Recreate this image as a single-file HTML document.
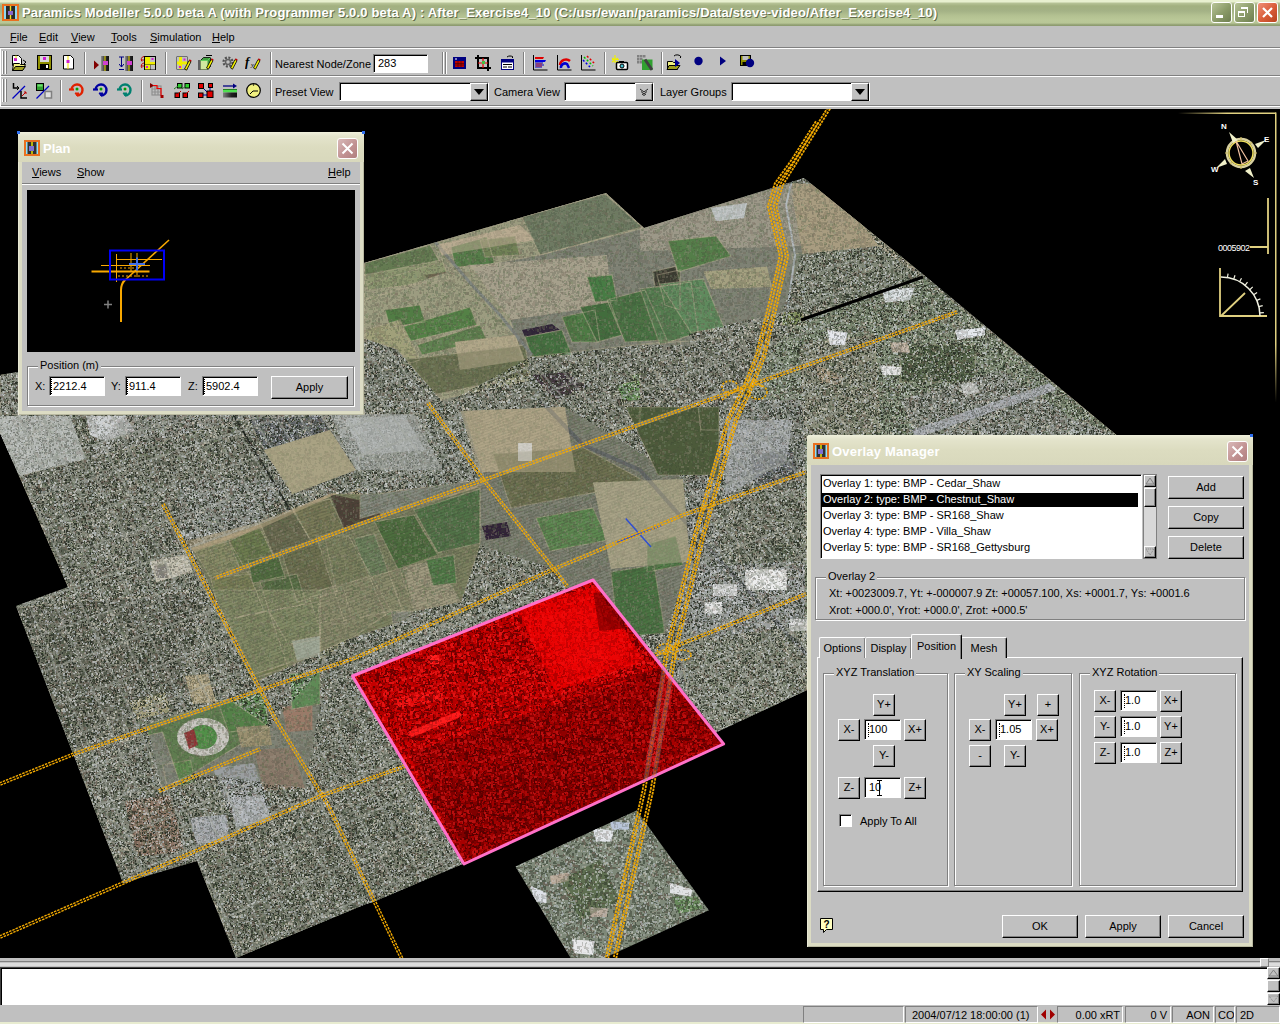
<!DOCTYPE html><html><head><meta charset='utf-8'><style>
*{box-sizing:border-box}
body{margin:0;width:1280px;height:1024px;overflow:hidden;background:#c0c0c0;position:relative;font-family:'Liberation Sans',sans-serif;font-size:11px;color:#000}
.a{position:absolute}
.t{position:absolute;white-space:nowrap;font-size:11px;line-height:13px}
.mtxt{position:absolute;white-space:nowrap;font-size:11px;line-height:14px}
.xpb{position:absolute;top:2px;width:21px;height:21px;border:1px solid #fff;border-radius:3px;background:linear-gradient(135deg,#b8c498,#8a9a68 55%,#6e7e50)}
.sep{position:absolute;width:2px;border-left:1px solid #808080;border-right:1px solid #fff}
.grip{position:absolute;width:5px;border-left:1px solid #fff;border-right:1px solid #808080;box-shadow:inset -1px 0 0 #c0c0c0, inset -2px 0 0 #808080}
.btn{position:absolute;background:#c0c0c0;border-top:1px solid #fff;border-left:1px solid #fff;border-right:1px solid #000;border-bottom:1px solid #000;box-shadow:inset -1px -1px 0 #808080;text-align:center;font-size:11px;white-space:nowrap}
.inp{position:absolute;background:#fff;border-top:1px solid #808080;border-left:1px solid #808080;border-right:1px solid #fff;border-bottom:1px solid #fff;box-shadow:inset 1px 1px 0 #000;font-size:11px;white-space:nowrap;overflow:hidden}
.grp{position:absolute;border:1px solid #808080;box-shadow:1px 1px 0 #fff, inset 1px 1px 0 #fff}
.glab{position:absolute;background:#c0c0c0;padding:0 2px;white-space:nowrap;font-size:11px;line-height:13px}
.sunk{position:absolute;border-top:1px solid #808080;border-left:1px solid #808080;border-right:1px solid #fff;border-bottom:1px solid #fff}
</style></head><body><div class="a" style="left:0;top:0;width:1280px;height:26px;background:linear-gradient(#e8f0d0 0px,#e8f0d0 2px,#b8c498 3px,#a2b080 6px,#a4b286 11px,#b4c292 16px,#bac898 20px,#b8c696 23px,#8e9c70 25px,#8e9c70 26px);"></div>
<svg class="a" style="left:2px;top:4px" width="17" height="17" viewBox="0 0 17 17"><rect x="0" y="0" width="17" height="17" fill="#e87020"/><rect x="2" y="2" width="13" height="13" fill="#90d8f0"/><rect x="4" y="2" width="9" height="13" fill="#282828"/><rect x="7.8" y="2" width="1.4" height="13" fill="#f0e020"/><rect x="6" y="7" width="5" height="4" fill="#8868c8"/></svg>
<div class="a" style="left:22px;top:5px;font:bold 13px 'Liberation Sans',sans-serif;letter-spacing:0.16px;color:#fff;text-shadow:1px 1px 0 #606a48;white-space:nowrap;line-height:16px">Paramics Modeller 5.0.0 beta A (with Programmer 5.0.0 beta A) : After_Exercise4_10 (C:/usr/ewan/paramics/Data/steve-video/After_Exercise4_10)</div>
<div class="xpb" style="left:1211px;"><div class="a" style="left:4px;top:12px;width:7px;height:3px;background:#fff"></div></div>
<div class="xpb" style="left:1234px;"><div class="a" style="left:3px;top:8px;width:7px;height:6px;border:1px solid #fff;border-top-width:2px"></div><div class="a" style="left:6px;top:4px;width:7px;height:6px;border-top:2px solid #fff;border-right:1px solid #fff"></div></div>
<div class="xpb" style="left:1257px;background:linear-gradient(135deg,#f09078,#d85c38 55%,#b84420)"><svg class="a" style="left:3px;top:3px" width="13" height="13"><path d="M2 2L11 11M11 2L2 11" stroke="#fff" stroke-width="2.2"/></svg></div>
<div class="mtxt" style="left:10px;top:30px"><u>F</u>ile</div>
<div class="mtxt" style="left:39px;top:30px"><u>E</u>dit</div>
<div class="mtxt" style="left:71px;top:30px"><u>V</u>iew</div>
<div class="mtxt" style="left:111px;top:30px"><u>T</u>ools</div>
<div class="mtxt" style="left:150px;top:30px"><u>S</u>imulation</div>
<div class="mtxt" style="left:212px;top:30px"><u>H</u>elp</div>
<div class="a" style="left:0;top:47px;width:1280px;height:1px;background:#808080"></div>
<div class="a" style="left:0;top:48px;width:1280px;height:1px;background:#fff"></div>
<div class="a" style="left:0;top:75px;width:1280px;height:1px;background:#808080"></div>
<div class="a" style="left:0;top:76px;width:1280px;height:1px;background:#fff"></div>
<div class="a" style="left:0;top:105px;width:1280px;height:1px;background:#808080"></div>
<div class="a" style="left:0;top:106px;width:1280px;height:1px;background:#fff"></div>
<div class="a" style="left:2px;top:51px;width:1px;height:23px;background:#fff"></div>
<div class="a" style="left:3px;top:51px;width:1px;height:23px;background:#808080"></div>
<div class="a" style="left:5px;top:51px;width:1px;height:23px;background:#fff"></div>
<div class="a" style="left:6px;top:51px;width:1px;height:23px;background:#808080"></div>
<div class="a" style="left:2px;top:79px;width:1px;height:23px;background:#fff"></div>
<div class="a" style="left:3px;top:79px;width:1px;height:23px;background:#808080"></div>
<div class="a" style="left:5px;top:79px;width:1px;height:23px;background:#fff"></div>
<div class="a" style="left:6px;top:79px;width:1px;height:23px;background:#808080"></div>
<div class="a" style="left:0;top:49px;width:1px;height:58px;background:#fff"></div>
<svg class="a" style="left:11px;top:55px" width="17" height="17" viewBox="0 0 17 17"><path d="M1.5 0.5h6l3 3v7h-9z" fill="#fff" stroke="#000"/><rect x="3" y="3" width="3" height="3" fill="#d020d0"/><path d="M5 0.5v3" stroke="#f0e000"/><path d="M2.5 8.5h6l1 1h5l-3 6h-10z" fill="#f0f080" stroke="#000"/><path d="M4.5 11.5h10l-3 4h-10z" fill="#a0a020" stroke="#000"/><path d="M12 5l3 2-2 2" stroke="#000" fill="none"/></svg>
<svg class="a" style="left:37px;top:55px" width="15" height="15" viewBox="0 0 15 15"><rect x="0.5" y="0.5" width="14" height="14" fill="#909000" stroke="#000"/><rect x="3" y="1" width="9" height="6" fill="#d8d8d8"/><rect x="6" y="2" width="3" height="3" fill="#d020d0"/><rect x="3" y="9" width="9" height="5" fill="#000"/><rect x="9" y="10" width="2" height="3" fill="#fff"/></svg>
<svg class="a" style="left:63px;top:55px" width="12" height="15" viewBox="0 0 12 15"><path d="M0.5 0.5h7l3 3v10.5h-10z" fill="#fff" stroke="#000"/><path d="M5 1v13" stroke="#f0e000"/><rect x="3.5" y="5" width="3" height="3" fill="#d020d0"/></svg>
<div class="sep" style="left:84px;top:52px;height:22px"></div>
<svg class="a" style="left:94px;top:60px" width="5" height="10" viewBox="0 0 5 10"><path d="M0 0.5L5 5L0 9.5z" fill="#800000"/></svg>
<svg class="a" style="left:101px;top:56px" width="8" height="15" viewBox="0 0 8 15"><defs><linearGradient id="rg" x1="0" x2="1"><stop offset="0" stop-color="#909090"/><stop offset="0.5" stop-color="#303030"/><stop offset="1" stop-color="#101010"/></linearGradient></defs><rect x="0" y="0" width="8" height="15" fill="url(#rg)"/><rect x="3.5" y="0" width="1" height="15" fill="#f0e000"/><rect x="2" y="5" width="5" height="4" fill="#d040d0"/></svg>
<svg class="a" style="left:119px;top:56px" width="5" height="15" viewBox="0 0 5 15"><path d="M0 1h5M2.5 1v10M0 8l2.5 3l2.5-3M0 13.5h5" stroke="#000080" fill="none"/></svg>
<svg class="a" style="left:125px;top:56px" width="8" height="15" viewBox="0 0 8 15"><defs><linearGradient id="rg" x1="0" x2="1"><stop offset="0" stop-color="#909090"/><stop offset="0.5" stop-color="#303030"/><stop offset="1" stop-color="#101010"/></linearGradient></defs><rect x="0" y="0" width="8" height="15" fill="url(#rg)"/><rect x="3.5" y="0" width="1" height="15" fill="#f0e000"/><rect x="2" y="5" width="5" height="4" fill="#d040d0"/></svg>
<svg class="a" style="left:140px;top:55px" width="16" height="16" viewBox="0 0 16 16"><rect x="4.5" y="1.5" width="11" height="13" fill="#202020" stroke="#000"/><rect x="5" y="2" width="5" height="5" fill="#f0f000"/><rect x="10" y="2" width="5" height="5" fill="#c0c0c0"/><rect x="5" y="7" width="10" height="2.5" fill="#f0f000"/><rect x="5" y="10" width="5" height="4.5" fill="#f0f000"/><rect x="10.5" y="10" width="4.5" height="4.5" fill="#c0c0c0"/><rect x="11.5" y="3" width="2" height="2" fill="#d020d0"/><rect x="6" y="11" width="2" height="2" fill="#d020d0"/><path d="M4 1.5a3 3 0 0 0-2 5M4 8a3 3 0 0 0-2 5M1 5h3M1 11h3" stroke="#c00000" fill="none"/></svg>
<div class="sep" style="left:165px;top:52px;height:22px"></div>
<svg class="a" style="left:176px;top:56px" width="16" height="16" viewBox="0 0 16 16"><rect x="0.5" y="0.5" width="11" height="13" fill="#202020"/><rect x="1" y="1" width="10" height="12" fill="#c0c0c0"/><path d="M3 1h3v4.5h5v3h-5v4.5h-3v-4.5h-2v-3h2z" fill="#f0f000"/><rect x="7.5" y="2.5" width="2" height="2" fill="#d020d0"/><rect x="3" y="10" width="2" height="2" fill="#d020d0"/><path d="M13 4.5l2 1.2l-4.5 8.5l-2 -1.2z" fill="#f0f000" stroke="#000" stroke-width="0.8"/><path d="M13 4.5l2 1.2l0.6-1.2l-2-1.2z" fill="#c00000"/></svg>
<svg class="a" style="left:198px;top:55px" width="16" height="16" viewBox="0 0 16 16"><path d="M1 5v10" stroke="#000"/><rect x="8" y="0" width="6" height="1" fill="#000"/><path d="M2.5 5.5l3-3h7v9l-3 3h-7z" fill="#40a040" stroke="#000" stroke-width="0.8"/><rect x="2.5" y="5.5" width="7" height="9" fill="#d0e8a0"/><path d="M2.5 5.5h7l3-3" stroke="#60d060" fill="none"/><path d="M13 4.5l2 1.2l-4.5 8.5l-2 -1.2z" fill="#f0f000" stroke="#000" stroke-width="0.8"/><path d="M13 4.5l2 1.2l0.6-1.2l-2-1.2z" fill="#c00000"/></svg>
<svg class="a" style="left:222px;top:55px" width="16" height="16" viewBox="0 0 16 16"><circle cx="6" cy="7" r="4.5" fill="none" stroke="#505050" stroke-width="2.2" stroke-dasharray="2 1.5"/><circle cx="6" cy="7" r="2.5" fill="none" stroke="#606060" stroke-width="1.5"/><path d="M13 4.5l2 1.2l-4.5 8.5l-2 -1.2z" fill="#f0f000" stroke="#000" stroke-width="0.8"/><path d="M13 4.5l2 1.2l0.6-1.2l-2-1.2z" fill="#c00000"/></svg>
<svg class="a" style="left:245px;top:55px" width="16" height="16" viewBox="0 0 16 16"><text x="0" y="11" font-family="Liberation Serif" font-style="italic" font-weight="bold" font-size="13">f</text><text x="6" y="12" font-family="Liberation Serif" font-style="italic" font-size="7">y</text><path d="M13 4.5l2 1.2l-4.5 8.5l-2 -1.2z" fill="#f0f000" stroke="#000" stroke-width="0.8"/><path d="M13 4.5l2 1.2l0.6-1.2l-2-1.2z" fill="#c00000"/></svg>
<div class="sep" style="left:270px;top:52px;height:22px"></div>
<div class="t" style="left:275px;top:58px;font-size:11px">Nearest Node/Zone</div>
<div class="inp" style="left:373px;top:54px;width:55px;height:19px;padding:2px 0 0 4px">283</div>
<div class="sep" style="left:442px;top:52px;height:22px"></div>
<div class="sep" style="left:445px;top:52px;height:22px"></div>
<svg class="a" style="left:453px;top:57px" width="13" height="12" viewBox="0 0 13 12"><rect x="0.5" y="0.5" width="12" height="11" fill="#000080" stroke="#000080"/><rect x="2" y="4" width="9" height="6" fill="#c00000"/><path d="M2 6.5h9M2 8h9M5 4v6M8 4v6" stroke="#400000" stroke-width="0.6"/><rect x="2" y="1.5" width="2" height="1" fill="#fff"/></svg>
<svg class="a" style="left:475px;top:55px" width="16" height="16" viewBox="0 0 16 16"><path d="M3 0v13h13M0 3h13v13" stroke="#000" stroke-width="2" fill="none"/><path d="M8 3v10M3 8h10" stroke="#e00000" stroke-width="1.2"/><rect x="7" y="6" width="3" height="3" fill="#40c040"/></svg>
<svg class="a" style="left:501px;top:54px" width="13" height="16" viewBox="0 0 13 16"><path d="M6 3a4 3 0 0 1 6 0l-1 1" stroke="#000" fill="none"/><rect x="0.5" y="5.5" width="12" height="10" fill="#fff" stroke="#000080"/><rect x="0.5" y="5.5" width="12" height="3" fill="#000080"/><path d="M2 10.5h9M2 13h4M7 13h4" stroke="#000" stroke-width="1"/></svg>
<div class="sep" style="left:523px;top:52px;height:22px"></div>
<svg class="a" style="left:533px;top:55px" width="15" height="16" viewBox="0 0 15 16"><path d="M0.5 0v15h14" stroke="#000" fill="none"/><path d="M2 2h9l-1 2h-8z" fill="#e00000"/><path d="M2 5h11l-1 2h-10z" fill="#0000e0"/><path d="M2 8h8M2 10h9M2 12h7" stroke="#0000c0"/><path d="M3 9h6M3 11h6" stroke="#d00000" stroke-width="0.7"/></svg>
<svg class="a" style="left:557px;top:55px" width="15" height="16" viewBox="0 0 15 16"><path d="M0.5 0v15h14" stroke="#000" fill="none"/><path d="M3 10a6 6 0 0 1 10-4" stroke="#e00000" stroke-width="2.5" fill="none"/><path d="M4 13a4 4 0 0 1 6-4l2 4" stroke="#0000d0" stroke-width="2.5" fill="none"/></svg>
<svg class="a" style="left:581px;top:55px" width="15" height="16" viewBox="0 0 15 16"><path d="M0.5 0v15h14" stroke="#000" fill="none"/><path d="M3 2l9 9" stroke="#00c000" stroke-width="1.5" stroke-dasharray="2 2"/><path d="M2 5l8 8" stroke="#0000e0" stroke-width="1.5" stroke-dasharray="2 2"/><path d="M6 1l8 8" stroke="#e00000" stroke-width="1.5" stroke-dasharray="2 2"/></svg>
<div class="sep" style="left:604px;top:52px;height:22px"></div>
<svg class="a" style="left:612px;top:55px" width="17" height="16" viewBox="0 0 17 16"><path d="M3 0v8M0 3l6 4M0 7l6-4M-1 4.5h8" stroke="#f0f000" stroke-width="1.2"/><rect x="4.5" y="7.5" width="11" height="7" rx="1" fill="#fff" stroke="#000" stroke-width="1.5"/><rect x="7" y="6" width="5" height="2" fill="#000"/><circle cx="10" cy="11" r="2" fill="#40c0d0" stroke="#000"/></svg>
<svg class="a" style="left:636px;top:55px" width="17" height="16" viewBox="0 0 17 16"><g fill="#808080"><rect x="1" y="0" width="2.5" height="2.5"/><rect x="4" y="0" width="2.5" height="2.5"/><rect x="7" y="0" width="2.5" height="2.5"/><rect x="1" y="3" width="2.5" height="2.5"/><rect x="4" y="3" width="2.5" height="2.5"/><rect x="1" y="6" width="2.5" height="2.5"/><rect x="4" y="6" width="2.5" height="2.5"/></g><rect x="6" y="4.5" width="10.5" height="10.5" fill="#30a030"/><path d="M9 4.5l7 10.5" stroke="#404040" stroke-width="3"/></svg>
<div class="sep" style="left:661px;top:52px;height:22px"></div>
<svg class="a" style="left:666px;top:53px" width="17" height="18" viewBox="0 0 17 18"><path d="M8 3a4 3 0 0 1 7 1l-1 1" stroke="#000" fill="none"/><path d="M1.5 8.5h5l1 1h4v7h-10z" fill="#f0f080" stroke="#000"/><path d="M3 12.5h11l-3 4h-10z" fill="#a0a020" stroke="#000"/><path d="M9 6l5 4l-5 4z" fill="#000090"/></svg>
<svg class="a" style="left:694px;top:56px" width="10" height="10" viewBox="0 0 10 10"><circle cx="4.5" cy="5" r="4.2" fill="#000080"/></svg>
<svg class="a" style="left:720px;top:56px" width="7" height="10" viewBox="0 0 7 10"><path d="M0 0.5L6 5L0 9.5z" fill="#000080"/></svg>
<svg class="a" style="left:740px;top:55px" width="15" height="13" viewBox="0 0 15 13"><rect x="0.5" y="0.5" width="10" height="10" fill="#909000" stroke="#000"/><rect x="2.5" y="1" width="6" height="4" fill="#c0c0c0"/><rect x="2.5" y="7" width="6" height="3" fill="#000"/><circle cx="10" cy="8" r="4.2" fill="#000080"/></svg>
<svg class="a" style="left:12px;top:83px" width="16" height="16" viewBox="0 0 16 16"><path d="M1.5 0v5h5" stroke="#000" stroke-width="1.5" fill="none"/><path d="M5 3l2 2-2 2" stroke="#000" fill="none"/><path d="M0.5 15.5L13 3" stroke="#0000c0" stroke-width="1.2"/><path d="M9 8v7h6" stroke="#000" stroke-width="1.5" fill="none"/><path d="M10 13l4-4M12 9h2v2" stroke="#c00000" fill="none"/></svg>
<svg class="a" style="left:36px;top:83px" width="17" height="16" viewBox="0 0 17 16"><rect x="0.5" y="0.5" width="7" height="7" fill="#30a030" stroke="#000"/><rect x="1.5" y="1.5" width="5" height="2" fill="#70e070"/><path d="M0.5 15.5L13 3" stroke="#0000c0" stroke-width="1.2"/><rect x="9" y="8.5" width="6.5" height="6.5" fill="#e0e0e0" stroke="#808080" stroke-width="1.5"/></svg>
<div class="sep" style="left:60px;top:80px;height:22px"></div>
<svg class="a" style="left:69px;top:83px" width="16" height="16" viewBox="0 0 16 16"><path d="M2.5 6.5A5.5 5.5 0 1 1 8 12.5" stroke="#e02000" stroke-width="2.4" fill="none"/><path d="M0 6.5h5" stroke="#e02000" stroke-width="2.2"/><path d="M6 10l2 3 2-3z" fill="#e02000" stroke="#e02000"/><circle cx="8" cy="6" r="1.5" fill="#00a000"/></svg>
<svg class="a" style="left:93px;top:83px" width="16" height="16" viewBox="0 0 16 16"><path d="M2.5 6.5A5.5 5.5 0 1 1 8 12.5" stroke="#0000a0" stroke-width="2.4" fill="none"/><path d="M0 6.5h5" stroke="#0000a0" stroke-width="2.2"/><path d="M6 10l2 3 2-3z" fill="#0000a0" stroke="#0000a0"/><circle cx="8" cy="6" r="1.5" fill="#00a000"/></svg>
<svg class="a" style="left:117px;top:83px" width="16" height="16" viewBox="0 0 16 16"><path d="M2.5 6.5A5.5 5.5 0 1 1 8 12.5" stroke="#008070" stroke-width="2.4" fill="none"/><path d="M0 6.5h5" stroke="#008070" stroke-width="2.2"/><path d="M6 10l2 3 2-3z" fill="#008070" stroke="#008070"/><circle cx="8" cy="6" r="1.5" fill="#00a000"/></svg>
<div class="sep" style="left:141px;top:80px;height:22px"></div>
<svg class="a" style="left:150px;top:83px" width="14" height="15" viewBox="0 0 14 15"><g stroke="#909090" stroke-width="1.2" fill="none"><rect x="2" y="3" width="9" height="9"/><path d="M5 3v9M8 3v9M2 6h9M2 9h9"/></g><path d="M0 0l4 2.5L0 5z" fill="#800000"/><path d="M3 2.5h4v3h4v7" stroke="#f00000" stroke-width="1.2" fill="none"/><rect x="10.5" y="12" width="3" height="3" fill="#a00000"/></svg>
<svg class="a" style="left:174px;top:83px" width="16" height="15" viewBox="0 0 16 15"><rect x="3.5" y="0.5" width="4.5" height="4.5" fill="#30d030" stroke="#000"/><rect x="11" y="0.5" width="4.5" height="4.5" fill="#30d030" stroke="#000"/><path d="M0 6l4-3M8 6l4-3" stroke="#208020"/><rect x="1" y="10" width="4.5" height="4.5" fill="#e00000" stroke="#000"/><rect x="9" y="10" width="4.5" height="4.5" fill="#e00000" stroke="#000"/><path d="M4 11l3-3M12 11l3-3" stroke="#c00000"/></svg>
<svg class="a" style="left:198px;top:83px" width="16" height="15" viewBox="0 0 16 15"><path d="M3 3l8 8M12 3v8M3 12h8" stroke="#0000a0"/><rect x="0.5" y="0.5" width="5" height="5" fill="#e00000" stroke="#000"/><rect x="10.5" y="0.5" width="4" height="4" fill="#e00000" stroke="#000"/><rect x="0.5" y="10" width="4.5" height="4.5" fill="#e00000" stroke="#000"/><rect x="9" y="8" width="6" height="6.5" fill="#e00000" stroke="#000"/></svg>
<svg class="a" style="left:223px;top:83px" width="15" height="15" viewBox="0 0 15 15"><path d="M0 3h12" stroke="#000080" stroke-width="1.3"/><path d="M10 0.5l4 2.5-4 2.5z" fill="#000080"/><rect x="0" y="7" width="14" height="2.5" fill="#50e050"/><defs><linearGradient id="dg" x1="0" x2="1"><stop offset="0" stop-color="#808080"/><stop offset="0.6" stop-color="#202020"/><stop offset="1" stop-color="#101010"/></linearGradient></defs><rect x="0" y="9.5" width="14" height="5" fill="url(#dg)"/><rect x="0" y="6" width="14" height="1" fill="#208020"/></svg>
<svg class="a" style="left:246px;top:83px" width="15" height="15" viewBox="0 0 15 15"><circle cx="7.5" cy="7.5" r="6.8" fill="#f0f080" stroke="#000" stroke-width="1.2"/><path d="M4 11l3-3h5" stroke="#000" fill="none"/><circle cx="7.5" cy="2" r="0.7" fill="#000"/></svg>
<div class="sep" style="left:270px;top:80px;height:22px"></div>
<div class="t" style="left:275px;top:86px">Preset View</div>
<div class="inp" style="left:339px;top:82px;width:150px;height:19px"></div>
<div class="btn" style="left:470px;top:83px;width:18px;height:18px"></div>
<svg class="a" style="left:474px;top:89px" width="10" height="6"><path d="M0 0h10L5 6z" fill="#000"/></svg>
<div class="t" style="left:494px;top:86px">Camera View</div>
<div class="inp" style="left:564px;top:82px;width:90px;height:19px"></div>
<div class="btn" style="left:635px;top:83px;width:18px;height:18px"></div>
<svg class="a" style="left:639px;top:88px" width="10" height="8"><path d="M1 1l4 3 4-3M2 3.5l3 2.5 3-2.5M3 6l2 1.5 2-1.5" stroke="#000" fill="none" stroke-width="0.8"/></svg>
<div class="t" style="left:660px;top:86px">Layer Groups</div>
<div class="inp" style="left:731px;top:82px;width:139px;height:19px"></div>
<div class="btn" style="left:851px;top:83px;width:18px;height:18px"></div>
<svg class="a" style="left:855px;top:89px" width="10" height="6"><path d="M0 0h10L5 6z" fill="#000"/></svg>
<svg class="a" style="left:0;top:109px" width="1280" height="849" viewBox="0 109 1280 849"><defs><clipPath id="cmain"><polygon points="0,375 18,372 364,263 606,193 644,228 804,178 924,275 1114,433 1205,506 807,690 717,732 465,863 373,902 366,904 236,958 197,861 123,883 16,606 68,587 0,433"/></clipPath><clipPath id="csmall"><polygon points="636.6,810.6 708.8,910.3 578,970 515.5,866.5"/></clipPath><clipPath id="cred"><polygon points="593,580 723.6,744 464,864 352.5,676"/></clipPath><filter id="noise" x="0" y="0" width="100%" height="100%"><feTurbulence type="fractalNoise" baseFrequency="0.45" numOctaves="2" seed="3"/><feColorMatrix type="matrix" values="0 0 0 0 0  0 0 0 0 0  0 0 0 0 0  0.9 0.9 0.9 0 -1.1"/></filter><filter id="noise2" x="0" y="0" width="100%" height="100%"><feTurbulence type="fractalNoise" baseFrequency="0.5" numOctaves="2" seed="8"/><feColorMatrix type="matrix" values="0 0 0 0 1  0 0 0 0 1  0 0 0 0 1  1 1 1 0 -1.9"/></filter><filter id="rnoise" x="0" y="0" width="100%" height="100%"><feTurbulence type="fractalNoise" baseFrequency="0.35" numOctaves="2" seed="5"/><feColorMatrix type="matrix" values="0 0 0 0 0  0 0 0 0 0  0 0 0 0 0  1.2 1.2 1.2 0 -1.2"/></filter></defs><rect x="0" y="108" width="1280" height="850" fill="#000"/><g clip-path="url(#cmain)"><rect x="0" y="108" width="1280" height="850" fill="#7e8174"/><defs><pattern id="spk1" width="97" height="89" patternUnits="userSpaceOnUse"><path fill="#2a3226" d="M43 13h1v3h-1zM58 68h1v3h-1zM8 5h2v2h-2zM92 14h2v2h-2zM37 55h2v3h-2zM57 15h2v2h-2zM43 2h2v2h-2zM9 80h1v2h-1zM60 52h2v1h-2zM51 7h2v3h-2zM13 17h2v1h-2zM6 11h3v2h-3zM94 56h3v1h-3zM22 74h2v1h-2zM24 32h1v3h-1zM49 88h2v2h-2zM74 2h3v3h-3zM54 17h3v2h-3zM53 32h1v3h-1zM77 14h2v2h-2zM91 25h1v2h-1zM96 59h3v2h-3zM89 35h1v2h-1zM27 61h2v2h-2zM38 1h2v2h-2zM23 6h2v3h-2zM72 38h1v2h-1zM22 70h1v2h-1zM52 57h3v2h-3zM29 36h2v3h-2zM39 76h2v3h-2zM64 69h3v3h-3zM23 74h3v3h-3zM65 0h3v3h-3zM16 36h3v3h-3zM48 49h2v3h-2zM21 88h2v1h-2zM87 23h2v2h-2zM45 73h2v2h-2zM56 4h2v2h-2zM96 28h3v2h-3zM52 14h2v1h-2zM35 24h1v3h-1zM42 31h2v2h-2zM18 16h2v2h-2zM67 37h3v3h-3zM60 8h1v1h-1zM71 79h1v2h-1zM0 23h2v3h-2zM65 14h2v3h-2zM36 86h3v2h-3zM80 40h2v3h-2zM13 43h1v2h-1zM43 86h1v2h-1zM92 84h2v2h-2zM23 88h2v3h-2zM25 77h2v2h-2zM90 60h3v1h-3zM36 30h2v1h-2zM30 53h3v1h-3zM6 83h2v2h-2zM66 34h1v3h-1zM9 57h2v3h-2zM72 5h1v1h-1zM87 51h2v3h-2zM58 30h2v2h-2zM33 46h3v2h-3zM70 35h1v2h-1zM18 25h3v1h-3zM44 71h2v2h-2zM68 34h2v2h-2zM78 75h2v2h-2zM85 67h2v2h-2zM12 52h2v3h-2zM63 23h2v1h-2zM81 51h3v2h-3zM90 46h1v1h-1zM84 69h2v2h-2zM28 38h2v3h-2zM7 79h3v3h-3zM0 68h3v1h-3zM89 86h3v2h-3zM96 17h1v2h-1zM77 78h3v2h-3zM79 37h2v1h-2zM49 40h2v1h-2zM55 57h3v1h-3zM80 63h2v3h-2zM48 35h3v2h-3zM50 59h2v2h-2zM61 13h2v3h-2zM12 56h3v2h-3zM75 10h2v2h-2zM57 79h1v2h-1zM92 56h2v3h-2zM43 87h1v1h-1zM35 11h2v2h-2zM9 16h2v3h-2zM87 56h2v1h-2zM87 22h3v1h-3zM51 10h2v2h-2zM55 30h1v2h-1zM85 84h2v1h-2zM44 81h1v2h-1zM67 30h3v3h-3zM57 59h2v3h-2zM13 17h1v1h-1zM56 16h1v2h-1zM52 70h3v1h-3zM23 3h2v2h-2zM39 22h3v1h-3zM16 43h2v2h-2zM83 21h3v2h-3zM84 80h3v2h-3zM3 26h2v2h-2zM24 16h1v3h-1zM76 33h2v1h-2zM49 83h3v3h-3zM20 33h1v2h-1zM59 38h3v1h-3zM38 21h2v2h-2zM80 22h2v1h-2zM14 53h3v3h-3zM13 65h1v2h-1zM73 85h3v2h-3zM62 14h3v3h-3zM82 48h3v2h-3zM57 14h1v2h-1zM84 75h2v3h-2zM22 88h2v2h-2zM69 4h2v3h-2zM53 87h2v1h-2zM37 27h3v1h-3zM83 24h2v1h-2zM42 4h1v1h-1zM71 18h1v1h-1zM5 28h3v2h-3zM58 5h1v2h-1zM17 56h2v2h-2zM48 49h2v1h-2zM22 81h3v3h-3zM25 84h2v2h-2zM36 11h3v2h-3zM66 58h2v1h-2zM43 53h3v1h-3zM6 3h3v1h-3zM8 23h2v2h-2zM79 62h2v2h-2zM19 6h1v2h-1zM1 29h1v2h-1zM81 38h2v2h-2zM52 82h2v1h-2zM16 22h1v2h-1zM82 49h3v2h-3zM40 2h2v2h-2zM88 73h1v2h-1zM15 29h1v3h-1zM7 36h2v2h-2zM84 34h2v1h-2zM18 83h2v2h-2zM24 13h2v2h-2zM29 29h1v2h-1zM28 85h2v2h-2zM41 88h2v1h-2zM93 57h2v2h-2zM16 25h1v2h-1zM4 85h2v2h-2zM15 26h3v3h-3zM14 47h1v2h-1zM4 58h3v1h-3z"/><path fill="#343c2e" d="M81 14h1v2h-1zM54 4h1v1h-1zM54 43h2v2h-2zM34 8h2v2h-2zM83 63h3v3h-3zM74 54h3v2h-3zM2 14h2v2h-2zM93 43h1v2h-1zM69 1h1v2h-1zM89 71h3v2h-3zM10 53h2v2h-2zM33 16h2v1h-2zM0 42h2v2h-2zM47 74h2v3h-2zM20 22h3v1h-3zM70 0h2v2h-2zM25 18h1v1h-1zM92 64h3v3h-3zM69 10h2v2h-2zM95 69h2v3h-2zM95 69h1v2h-1zM83 8h1v1h-1zM25 2h2v2h-2zM31 11h2v3h-2zM63 41h2v3h-2zM24 40h1v2h-1zM24 37h2v2h-2zM80 87h1v2h-1zM27 33h1v2h-1zM70 1h3v1h-3zM91 62h1v1h-1zM37 41h3v2h-3zM43 14h3v1h-3zM38 63h1v1h-1zM30 75h2v1h-2zM64 27h2v3h-2zM41 72h1v1h-1zM28 50h1v1h-1zM10 50h2v2h-2zM82 18h2v1h-2zM46 2h2v2h-2zM27 43h3v2h-3zM79 16h3v2h-3zM91 83h2v2h-2zM30 84h1v2h-1zM95 86h2v1h-2zM77 86h3v1h-3zM46 50h2v2h-2zM28 15h2v2h-2zM9 57h3v2h-3zM66 36h1v2h-1zM69 37h2v3h-2zM16 47h1v2h-1zM59 15h2v3h-2zM68 1h1v3h-1zM87 31h1v1h-1zM2 56h2v3h-2zM11 83h2v1h-2zM51 85h1v2h-1zM37 47h2v2h-2zM70 64h2v2h-2zM29 31h3v2h-3zM84 53h1v2h-1zM56 29h2v1h-2zM67 40h3v3h-3zM38 48h2v3h-2zM86 77h1v1h-1zM75 85h2v3h-2zM42 38h1v2h-1zM62 82h3v3h-3zM12 67h2v2h-2zM5 9h2v1h-2zM91 50h1v2h-1zM81 34h3v3h-3zM45 70h3v3h-3zM34 13h2v1h-2zM34 63h2v1h-2zM88 8h3v3h-3zM17 73h3v3h-3zM62 53h3v3h-3zM4 35h2v2h-2zM11 56h1v2h-1zM94 75h2v3h-2zM31 86h3v3h-3zM25 88h2v2h-2zM75 8h1v2h-1zM65 0h1v1h-1zM5 60h2v3h-2zM75 63h2v2h-2zM84 48h2v1h-2zM18 35h1v1h-1zM34 29h1v2h-1zM74 13h2v1h-2zM59 33h1v1h-1zM87 54h2v2h-2zM23 35h2v3h-2zM35 49h2v3h-2zM74 29h2v1h-2zM0 73h3v1h-3zM33 13h1v2h-1zM89 87h1v2h-1zM67 72h1v2h-1zM16 82h2v1h-2zM48 44h3v2h-3zM83 83h2v2h-2zM38 52h1v2h-1zM25 43h3v3h-3zM16 13h3v2h-3zM24 21h3v1h-3zM70 32h3v2h-3zM63 26h3v2h-3zM53 83h2v1h-2zM21 9h3v2h-3zM13 5h2v3h-2zM25 24h1v3h-1zM43 37h3v2h-3zM94 70h2v2h-2zM96 20h2v2h-2zM78 86h2v3h-2zM92 24h2v3h-2zM35 71h2v2h-2zM68 51h1v2h-1zM21 68h1v1h-1zM65 18h2v2h-2zM78 32h2v1h-2zM72 46h2v3h-2zM65 17h3v2h-3zM65 82h2v2h-2zM20 82h3v1h-3zM65 5h2v1h-2zM93 84h2v1h-2zM57 77h3v3h-3zM87 43h3v1h-3zM53 47h1v3h-1zM10 36h3v2h-3zM50 26h3v3h-3zM4 46h2v1h-2zM45 66h1v2h-1zM87 24h3v2h-3zM94 30h2v2h-2zM23 65h2v3h-2zM34 30h3v3h-3zM18 19h3v1h-3zM12 88h2v1h-2zM56 46h3v3h-3zM39 46h3v2h-3zM31 20h3v3h-3zM95 68h2v3h-2zM50 9h3v2h-3zM91 31h3v3h-3zM76 19h2v1h-2zM56 71h2v3h-2zM46 28h1v1h-1zM12 12h2v3h-2zM4 58h2v2h-2zM72 19h2v2h-2zM83 73h2v2h-2zM76 83h1v2h-1zM5 29h2v2h-2zM96 10h1v1h-1zM2 42h2v2h-2zM84 67h1v2h-1zM76 68h1v2h-1zM64 58h1v1h-1zM3 71h2v2h-2zM48 66h2v3h-2zM60 17h2v2h-2zM5 71h3v1h-3zM82 57h1v1h-1zM84 19h2v2h-2zM52 56h1v1h-1zM70 35h2v1h-2zM18 7h2v1h-2zM6 13h3v2h-3zM23 78h2v2h-2zM92 72h1v2h-1zM4 82h2v3h-2zM57 38h2v2h-2zM39 81h2v2h-2zM56 85h1v2h-1z"/><path fill="#3c4436" d="M81 46h2v2h-2zM80 38h2v2h-2zM4 42h1v2h-1zM16 85h2v3h-2zM95 70h2v2h-2zM5 39h2v1h-2zM26 87h2v1h-2zM94 42h3v2h-3zM60 28h2v3h-2zM68 42h1v1h-1zM15 38h2v3h-2zM36 30h2v2h-2zM89 38h1v1h-1zM70 42h2v3h-2zM36 60h3v3h-3zM14 69h2v2h-2zM59 88h2v3h-2zM5 22h3v3h-3zM60 44h3v2h-3zM70 4h3v1h-3zM3 80h2v2h-2zM41 7h2v2h-2zM32 85h1v3h-1zM68 17h3v3h-3zM83 12h3v3h-3zM70 26h2v2h-2zM84 3h2v1h-2zM53 12h2v3h-2zM45 85h3v1h-3zM23 34h2v2h-2zM20 79h1v1h-1zM38 27h2v2h-2zM31 56h3v2h-3zM42 12h3v2h-3zM74 84h2v2h-2zM36 57h2v2h-2zM55 11h2v3h-2zM47 30h3v1h-3zM60 5h3v2h-3zM95 2h2v1h-2zM17 8h3v1h-3zM25 5h2v1h-2zM39 65h3v3h-3zM4 82h2v2h-2zM43 23h3v3h-3zM55 77h2v2h-2zM13 10h2v2h-2zM72 4h2v3h-2zM70 16h1v1h-1zM64 7h1v2h-1zM21 20h2v2h-2zM20 63h3v3h-3zM6 36h3v3h-3zM74 39h1v3h-1zM44 18h2v1h-2zM38 72h1v2h-1zM61 41h2v1h-2zM49 30h3v2h-3zM76 86h2v2h-2zM18 84h2v3h-2zM83 45h2v2h-2zM92 60h2v2h-2zM18 2h2v3h-2zM72 31h3v2h-3zM19 1h2v3h-2zM79 67h2v2h-2zM5 29h2v3h-2zM12 55h2v1h-2zM48 21h2v2h-2zM17 38h1v3h-1zM79 48h2v3h-2zM55 83h2v2h-2zM77 88h2v3h-2zM88 81h3v2h-3zM55 13h1v1h-1zM28 65h2v3h-2zM14 18h2v2h-2zM31 66h2v2h-2zM90 8h1v2h-1zM41 25h3v1h-3zM50 75h1v2h-1zM30 39h1v2h-1zM10 72h1v2h-1zM68 21h2v2h-2zM11 13h1v2h-1zM76 9h1v2h-1zM55 14h3v1h-3zM44 66h2v2h-2zM16 34h1v1h-1zM72 21h2v2h-2zM22 4h3v2h-3zM58 1h2v2h-2zM72 38h2v3h-2zM68 45h2v3h-2zM41 18h1v2h-1zM50 65h1v2h-1zM28 16h2v3h-2zM91 45h3v3h-3zM72 64h2v3h-2zM84 50h1v2h-1zM18 42h1v2h-1zM9 4h2v1h-2zM48 20h1v1h-1zM89 70h2v2h-2zM70 62h2v1h-2zM47 23h3v1h-3zM12 36h2v3h-2zM60 34h2v1h-2zM7 65h2v1h-2zM6 46h2v2h-2zM57 22h3v2h-3zM28 82h2v2h-2zM65 84h2v2h-2zM87 13h3v1h-3zM35 81h2v2h-2zM42 83h1v2h-1zM28 39h3v2h-3zM40 23h1v3h-1zM93 31h2v2h-2zM17 84h2v2h-2zM56 79h2v1h-2zM18 6h1v2h-1zM90 19h1v2h-1zM27 84h2v2h-2zM41 48h1v3h-1zM65 57h3v1h-3zM22 32h1v2h-1zM50 69h2v2h-2zM73 76h3v1h-3zM70 9h2v1h-2zM12 25h3v2h-3zM16 85h2v1h-2zM64 65h1v3h-1zM72 72h2v3h-2zM83 26h2v3h-2zM13 19h3v2h-3zM47 71h3v2h-3zM76 55h1v1h-1zM64 13h1v2h-1zM70 22h3v2h-3zM0 69h1v3h-1zM86 26h3v1h-3zM20 43h2v2h-2zM83 37h2v3h-2zM95 81h3v2h-3zM38 1h1v2h-1zM63 27h2v3h-2zM63 47h3v1h-3zM23 2h2v2h-2zM87 63h2v2h-2zM20 68h3v2h-3zM69 27h3v2h-3zM4 36h1v2h-1zM33 46h2v2h-2zM37 50h2v2h-2zM10 60h1v3h-1zM46 44h2v2h-2zM79 18h2v1h-2zM17 74h2v2h-2zM71 68h1v2h-1zM36 59h2v3h-2zM75 25h3v1h-3zM91 6h3v2h-3zM96 39h2v1h-2zM52 11h3v2h-3z"/><path fill="#404a38" d="M83 69h3v2h-3zM29 12h3v2h-3zM81 21h2v2h-2zM7 29h1v2h-1zM87 54h1v3h-1zM20 69h1v2h-1zM84 55h2v3h-2zM59 6h1v1h-1zM24 68h3v2h-3zM49 33h3v2h-3zM23 8h1v2h-1zM85 40h2v2h-2zM76 55h2v2h-2zM66 68h2v2h-2zM51 37h2v2h-2zM85 48h2v2h-2zM55 74h2v3h-2zM60 78h1v3h-1zM80 73h2v3h-2zM53 52h2v3h-2zM34 55h3v1h-3zM33 48h2v2h-2zM60 85h1v2h-1zM74 3h2v3h-2zM66 83h2v3h-2zM2 11h2v2h-2zM88 31h2v2h-2zM71 53h2v3h-2zM87 29h2v2h-2zM85 13h2v2h-2zM14 59h1v2h-1zM38 75h3v2h-3zM18 52h2v1h-2zM11 55h1v1h-1zM18 29h3v2h-3zM86 69h2v1h-2zM32 58h2v2h-2zM50 1h2v1h-2zM81 47h1v2h-1zM85 69h3v2h-3zM4 88h2v2h-2zM47 69h2v1h-2zM28 78h1v2h-1zM89 14h2v3h-2zM29 52h2v3h-2zM7 75h2v1h-2zM67 27h3v3h-3zM90 29h2v1h-2zM94 5h3v1h-3zM81 53h2v1h-2zM83 9h2v3h-2zM7 45h1v2h-1zM36 9h1v3h-1zM60 64h2v1h-2zM60 24h2v3h-2zM47 55h3v3h-3zM8 30h2v2h-2zM63 3h2v2h-2zM70 81h2v2h-2zM88 7h2v3h-2zM18 40h2v2h-2zM18 12h1v2h-1zM43 64h3v2h-3zM2 47h2v1h-2zM26 88h3v2h-3zM87 17h1v2h-1zM15 59h2v2h-2zM61 19h3v2h-3zM0 27h1v1h-1zM44 8h1v1h-1zM17 82h3v2h-3zM28 0h1v2h-1zM86 6h2v1h-2zM71 52h3v2h-3zM92 24h1v2h-1zM19 25h2v2h-2zM4 9h1v1h-1zM50 10h2v3h-2zM10 83h1v1h-1zM72 30h3v2h-3zM49 1h2v3h-2zM55 35h3v2h-3zM19 54h3v1h-3zM58 26h3v2h-3zM78 25h3v3h-3zM62 81h2v2h-2zM73 80h2v3h-2zM95 35h2v3h-2zM20 56h3v1h-3zM47 85h2v1h-2zM11 12h1v2h-1zM16 61h1v2h-1zM17 15h3v2h-3zM50 37h1v2h-1zM90 17h1v2h-1zM73 80h1v3h-1zM66 5h3v1h-3zM40 50h2v2h-2zM95 70h2v1h-2zM55 50h3v1h-3zM4 78h2v2h-2zM82 67h2v1h-2zM77 40h2v1h-2zM40 21h1v2h-1zM53 21h3v3h-3zM61 73h2v2h-2zM76 78h3v1h-3zM12 42h2v2h-2zM60 14h2v3h-2zM69 49h2v2h-2zM30 60h2v1h-2zM89 79h3v1h-3zM77 87h3v1h-3zM53 77h1v2h-1zM25 7h2v1h-2zM83 52h1v1h-1zM32 77h2v2h-2zM63 37h2v3h-2zM15 60h1v1h-1zM55 81h3v3h-3zM8 5h2v2h-2zM88 87h1v2h-1zM84 12h2v2h-2zM29 58h2v2h-2zM43 23h1v3h-1zM89 7h2v1h-2zM48 45h1v2h-1zM63 57h2v1h-2zM95 83h1v1h-1zM53 5h1v3h-1zM49 84h2v3h-2zM77 88h2v2h-2zM1 66h1v1h-1zM65 36h1v3h-1zM65 15h3v1h-3zM74 32h1v2h-1zM52 49h3v3h-3zM56 48h3v1h-3zM79 8h2v2h-2zM46 17h2v3h-2zM69 60h2v2h-2zM28 75h2v2h-2zM26 66h2v3h-2zM48 46h1v2h-1zM29 53h2v1h-2zM68 64h1v1h-1zM61 48h2v1h-2zM0 0h1v1h-1zM51 43h1v2h-1zM81 0h1v2h-1zM35 28h2v3h-2zM73 0h2v2h-2zM43 58h3v1h-3zM28 86h2v2h-2zM79 40h3v2h-3zM54 61h1v2h-1zM43 46h2v3h-2zM62 38h2v1h-2zM71 32h2v1h-2zM32 10h2v2h-2zM61 69h2v1h-2zM47 24h3v3h-3zM12 66h2v3h-2zM93 5h1v2h-1zM19 68h1v2h-1zM9 41h3v2h-3zM7 42h2v3h-2zM76 73h1v2h-1zM17 61h2v3h-2zM73 11h1v3h-1zM44 78h3v2h-3zM88 14h2v3h-2zM59 83h1v1h-1zM37 83h3v2h-3zM67 39h2v3h-2zM18 3h2v3h-2zM83 47h2v3h-2zM4 52h1v2h-1zM5 77h3v2h-3zM78 73h1v1h-1zM74 69h2v3h-2zM41 57h1v2h-1zM63 30h2v3h-2zM8 54h1v2h-1zM0 14h2v2h-2zM39 5h1v2h-1z"/><path fill="#2e3a2c" d="M28 17h1v1h-1zM26 85h2v1h-2zM60 70h2v2h-2zM39 51h2v3h-2zM40 7h1v3h-1zM15 72h2v1h-2zM96 9h1v3h-1zM72 12h1v2h-1zM77 65h1v3h-1zM94 21h1v2h-1zM89 66h3v1h-3zM59 85h2v3h-2zM45 38h3v3h-3zM59 16h1v3h-1zM89 32h2v2h-2zM68 54h2v1h-2zM45 33h2v2h-2zM96 62h1v1h-1zM8 51h3v1h-3zM56 38h3v2h-3zM76 5h3v2h-3zM73 75h1v2h-1zM56 6h2v2h-2zM61 60h2v3h-2zM68 61h2v2h-2zM55 18h2v3h-2zM78 48h2v3h-2zM61 13h2v3h-2zM84 50h2v1h-2zM33 6h2v3h-2zM46 65h1v3h-1zM56 9h1v2h-1zM18 8h2v2h-2zM81 74h2v3h-2zM55 12h2v2h-2zM76 39h2v1h-2zM56 84h3v3h-3zM55 22h2v3h-2zM13 31h3v3h-3zM42 21h1v1h-1zM60 56h2v2h-2zM73 83h2v2h-2zM83 84h3v2h-3zM42 16h1v3h-1zM52 46h2v3h-2zM3 53h1v3h-1zM2 32h2v2h-2zM18 37h3v1h-3zM85 10h2v1h-2zM7 9h3v2h-3zM47 56h1v2h-1zM14 3h2v3h-2zM87 40h2v1h-2zM90 81h2v2h-2zM38 78h1v2h-1zM61 59h2v2h-2zM63 2h1v3h-1zM51 6h2v2h-2zM4 17h2v3h-2zM58 19h2v2h-2zM40 20h3v2h-3zM83 74h2v1h-2zM52 88h2v3h-2zM78 60h1v2h-1zM26 71h2v3h-2zM48 40h2v3h-2zM43 69h2v2h-2zM61 24h2v2h-2zM37 72h2v2h-2zM31 87h1v3h-1zM26 74h3v1h-3zM57 7h3v2h-3zM8 12h1v3h-1zM64 37h2v2h-2zM35 7h2v3h-2zM10 57h2v1h-2zM77 26h3v2h-3zM41 36h3v3h-3zM69 62h2v1h-2zM67 35h2v1h-2zM55 82h2v1h-2zM76 61h3v3h-3zM85 62h2v3h-2zM58 79h2v2h-2zM88 18h3v3h-3zM62 17h2v3h-2zM58 72h3v1h-3zM7 72h2v2h-2zM57 9h1v3h-1zM86 18h1v1h-1zM27 80h2v3h-2zM16 49h3v2h-3zM39 10h2v2h-2zM9 73h2v1h-2zM36 39h2v1h-2zM0 52h1v2h-1zM22 3h3v3h-3zM5 59h1v2h-1zM94 45h1v2h-1zM72 18h2v3h-2zM7 29h2v1h-2zM30 12h1v3h-1zM44 69h3v2h-3zM7 49h3v3h-3zM19 18h1v1h-1zM22 35h3v2h-3zM3 30h2v3h-2zM91 28h3v2h-3zM24 64h1v3h-1zM57 35h2v2h-2zM20 62h1v2h-1zM61 49h1v1h-1zM28 16h2v1h-2zM52 37h2v1h-2zM75 61h3v2h-3zM86 67h2v2h-2zM42 35h1v2h-1zM6 28h3v2h-3zM91 52h1v2h-1zM67 6h3v3h-3zM90 40h2v2h-2zM8 64h2v3h-2zM69 36h1v2h-1zM40 2h3v1h-3zM86 82h2v1h-2zM57 42h2v2h-2zM57 45h2v3h-2zM75 27h1v2h-1zM90 66h2v2h-2zM44 62h3v1h-3zM86 61h3v2h-3zM28 52h2v2h-2zM25 66h3v2h-3zM84 16h1v3h-1zM89 20h1v2h-1zM13 15h1v3h-1zM96 73h2v1h-2zM46 78h2v2h-2zM33 30h2v3h-2zM51 35h3v2h-3zM42 33h2v2h-2zM94 57h1v3h-1zM13 12h1v3h-1zM36 56h2v2h-2zM41 60h3v2h-3zM37 76h2v1h-2zM33 10h3v2h-3zM59 35h2v1h-2zM19 57h2v2h-2zM92 8h3v2h-3zM62 24h1v1h-1zM9 38h1v2h-1zM24 67h2v2h-2zM81 55h2v2h-2zM39 67h1v2h-1zM69 66h2v3h-2zM93 18h1v3h-1zM45 45h2v2h-2zM73 19h3v2h-3zM78 78h2v2h-2zM14 57h2v1h-2zM90 49h2v3h-2zM48 5h2v2h-2zM58 63h3v1h-3zM17 15h2v2h-2zM52 67h2v2h-2zM88 77h2v3h-2zM40 33h2v2h-2zM52 7h2v2h-2zM3 43h3v2h-3zM56 64h1v3h-1zM5 13h2v1h-2z"/><path fill="#4a4a40" d="M29 64h1v2h-1zM75 35h1v2h-1zM45 44h2v1h-2zM70 37h2v2h-2zM33 17h2v2h-2zM76 59h2v1h-2zM7 30h1v1h-1zM62 8h2v2h-2zM77 54h2v2h-2zM85 62h2v2h-2zM9 56h1v1h-1zM37 27h1v1h-1zM69 38h1v2h-1zM77 26h2v2h-2zM39 29h2v1h-2zM8 35h2v3h-2zM8 85h2v2h-2zM31 81h2v3h-2zM30 35h3v1h-3zM72 84h1v1h-1zM62 13h3v2h-3zM58 19h3v2h-3zM30 52h3v2h-3zM70 67h2v3h-2zM39 32h2v1h-2zM6 70h2v2h-2zM79 7h1v2h-1zM32 3h1v2h-1zM24 66h2v3h-2zM64 34h1v2h-1zM52 5h2v3h-2zM56 12h3v1h-3zM42 86h3v2h-3zM80 87h2v2h-2zM44 75h2v3h-2zM29 77h2v2h-2zM24 79h2v2h-2zM21 32h3v2h-3zM3 79h2v2h-2zM8 81h3v2h-3zM56 30h2v1h-2zM51 54h1v3h-1zM85 32h2v2h-2zM18 81h1v1h-1zM43 20h2v2h-2zM41 15h1v3h-1zM9 40h3v3h-3zM65 24h2v2h-2zM90 10h2v3h-2zM82 61h2v1h-2zM63 76h1v2h-1zM45 30h3v2h-3zM57 77h3v2h-3zM56 44h3v1h-3zM45 78h3v2h-3zM33 57h2v2h-2zM69 37h2v2h-2zM73 9h2v2h-2zM81 70h2v2h-2zM73 53h1v3h-1zM38 28h2v2h-2zM91 10h2v3h-2zM14 42h2v3h-2zM38 74h1v2h-1zM46 88h2v1h-2zM87 64h2v1h-2zM41 66h3v1h-3zM53 58h1v3h-1zM57 48h3v1h-3zM22 68h3v2h-3zM31 32h2v2h-2zM94 15h3v2h-3zM40 52h1v2h-1zM93 45h2v2h-2zM17 80h2v1h-2zM72 31h2v2h-2zM48 48h3v1h-3zM34 19h3v2h-3zM10 71h2v2h-2zM9 46h2v2h-2zM22 50h2v2h-2zM72 25h2v1h-2zM81 38h2v2h-2zM31 84h2v2h-2zM43 82h1v2h-1zM51 80h2v2h-2zM84 55h3v1h-3zM64 83h3v3h-3zM52 7h2v2h-2zM41 74h1v1h-1zM80 39h2v3h-2zM1 43h1v3h-1zM38 17h3v2h-3zM83 21h3v2h-3zM40 17h2v2h-2zM84 38h2v2h-2zM49 14h2v3h-2zM5 7h3v2h-3zM91 64h3v3h-3zM41 50h1v2h-1zM54 34h1v2h-1zM13 73h1v2h-1zM66 52h2v3h-2zM10 74h1v2h-1zM50 9h1v3h-1zM9 2h1v2h-1zM67 46h1v2h-1zM81 62h2v2h-2zM71 88h2v2h-2zM75 22h3v2h-3zM88 37h2v2h-2zM1 33h2v2h-2zM8 44h2v1h-2zM0 6h3v3h-3zM62 84h2v1h-2zM89 85h1v1h-1zM42 88h2v1h-2zM38 56h2v2h-2zM59 64h3v1h-3zM66 30h1v3h-1zM40 87h2v1h-2zM49 4h2v2h-2zM60 16h2v2h-2zM67 24h1v1h-1zM93 66h2v3h-2zM64 21h1v2h-1zM68 79h1v1h-1zM13 83h1v1h-1zM33 66h2v2h-2zM65 9h1v2h-1zM37 46h2v3h-2zM8 33h2v1h-2zM66 88h1v3h-1zM93 31h3v2h-3zM71 78h1v1h-1zM77 79h2v2h-2zM79 76h3v2h-3zM43 45h2v2h-2zM52 77h2v2h-2zM79 37h2v2h-2zM45 71h3v3h-3zM87 9h2v2h-2zM85 44h3v2h-3zM78 79h2v1h-2zM13 26h3v1h-3zM87 19h1v3h-1zM0 82h1v1h-1zM20 68h2v2h-2zM26 44h2v3h-2zM85 72h1v3h-1zM0 40h2v2h-2zM17 68h2v2h-2zM33 47h2v1h-2zM69 72h2v3h-2zM23 20h2v1h-2zM5 16h2v2h-2zM33 23h3v1h-3zM84 65h2v2h-2zM68 54h2v2h-2zM28 47h1v1h-1zM76 65h2v2h-2zM11 35h3v2h-3zM50 51h2v1h-2zM90 8h1v2h-1zM14 65h2v2h-2zM14 33h1v3h-1zM27 73h2v2h-2zM87 22h3v1h-3zM16 73h2v1h-2zM32 60h1v3h-1zM36 59h2v2h-2zM23 2h2v2h-2zM33 79h2v1h-2zM49 39h2v2h-2zM56 17h2v3h-2zM78 88h2v2h-2zM81 58h3v2h-3zM36 34h2v3h-2zM94 4h2v3h-2zM87 39h2v2h-2zM85 27h1v2h-1zM31 1h1v3h-1zM80 7h1v2h-1zM29 40h2v3h-2zM24 2h3v2h-3zM17 32h1v3h-1zM72 23h2v2h-2zM46 58h1v3h-1zM47 7h2v1h-2zM81 73h2v3h-2zM23 70h3v2h-3zM57 57h3v1h-3zM38 11h3v2h-3zM9 34h3v2h-3zM95 20h1v2h-1zM43 50h2v1h-2zM42 57h2v2h-2zM88 61h2v3h-2zM58 5h2v3h-2zM86 36h2v3h-2zM7 13h1v3h-1zM0 15h1v3h-1zM42 44h2v1h-2zM19 24h2v3h-2zM12 66h2v2h-2z"/><path fill="#5a4a40" d="M48 34h2v2h-2zM17 65h3v1h-3zM6 14h2v2h-2zM92 33h2v1h-2zM73 73h3v2h-3zM23 35h3v2h-3zM52 62h3v2h-3zM67 20h1v1h-1zM47 36h2v3h-2zM81 33h3v2h-3zM9 88h2v1h-2zM71 52h2v2h-2zM20 13h3v1h-3zM24 51h2v2h-2zM56 86h2v3h-2zM84 81h2v1h-2zM96 30h2v2h-2zM51 31h2v1h-2zM13 54h2v2h-2zM31 15h3v2h-3zM95 60h3v2h-3zM7 26h3v3h-3zM43 85h3v2h-3zM41 43h3v2h-3zM82 43h1v3h-1zM55 75h2v2h-2zM60 82h3v3h-3zM18 9h1v2h-1zM88 63h2v3h-2zM32 41h1v3h-1zM91 37h2v3h-2zM18 49h2v2h-2zM8 35h3v2h-3zM69 48h3v2h-3zM24 30h3v2h-3zM16 64h2v1h-2zM33 43h3v1h-3zM87 6h3v2h-3zM12 80h1v2h-1zM16 69h2v2h-2zM47 86h2v3h-2zM84 27h1v1h-1zM18 76h1v2h-1zM14 8h3v3h-3zM82 3h1v3h-1zM13 44h2v1h-2zM35 73h2v3h-2zM56 53h2v2h-2zM2 41h2v3h-2zM88 46h1v3h-1zM32 25h2v2h-2zM96 72h3v2h-3zM57 4h1v2h-1zM74 70h1v3h-1zM47 36h3v3h-3zM17 19h1v2h-1zM12 64h1v2h-1zM36 48h3v2h-3zM66 15h2v1h-2zM20 34h3v2h-3zM28 3h2v1h-2zM4 36h3v2h-3zM93 77h3v1h-3zM69 64h1v3h-1zM5 45h2v2h-2zM87 59h3v2h-3zM49 71h1v2h-1zM62 25h1v2h-1zM50 61h3v3h-3zM74 19h2v2h-2zM82 73h2v2h-2zM78 53h2v2h-2zM41 73h2v2h-2zM36 9h3v3h-3zM50 47h2v2h-2zM61 21h3v2h-3zM73 86h3v3h-3zM32 61h2v2h-2zM83 60h3v2h-3zM36 41h2v1h-2zM53 22h1v3h-1zM58 82h3v2h-3zM64 59h2v2h-2zM32 23h1v2h-1zM89 70h3v2h-3zM39 2h3v2h-3zM4 36h3v2h-3zM86 69h3v3h-3zM35 24h1v1h-1zM63 6h2v3h-2zM65 63h3v1h-3zM1 21h1v3h-1zM40 2h2v2h-2zM87 74h3v1h-3zM0 39h3v2h-3zM11 45h1v2h-1zM59 26h3v2h-3zM4 46h1v1h-1zM78 5h3v2h-3zM38 5h1v1h-1zM71 54h3v2h-3zM0 27h2v2h-2zM36 17h2v2h-2zM14 34h2v1h-2zM94 83h2v2h-2zM4 57h2v2h-2zM78 17h2v2h-2zM73 34h1v2h-1zM16 31h2v2h-2zM58 81h2v1h-2zM68 50h2v3h-2zM27 63h2v2h-2zM36 43h2v3h-2zM80 58h1v1h-1zM10 31h2v1h-2zM65 46h1v3h-1zM31 53h2v2h-2zM86 6h2v2h-2zM16 30h2v2h-2zM87 38h1v2h-1zM87 80h1v2h-1zM35 7h3v2h-3zM84 30h2v1h-2zM28 73h3v2h-3zM22 22h2v2h-2zM61 0h2v2h-2zM2 18h2v1h-2zM41 17h2v3h-2zM44 69h3v1h-3zM0 54h1v2h-1zM56 59h2v2h-2zM34 72h1v2h-1zM91 4h2v1h-2zM57 22h2v2h-2zM87 55h2v2h-2zM49 71h3v2h-3zM35 66h3v1h-3zM38 39h2v3h-2zM27 52h3v2h-3zM90 64h3v2h-3zM49 6h2v2h-2zM33 74h2v3h-2zM25 47h1v2h-1zM17 43h3v2h-3zM83 4h3v2h-3zM13 63h2v2h-2zM0 1h1v1h-1zM6 12h2v1h-2zM14 12h1v1h-1zM58 34h3v3h-3zM86 82h3v2h-3zM20 64h3v3h-3zM58 56h3v1h-3zM52 4h1v1h-1zM85 58h2v2h-2zM58 24h2v1h-2zM83 22h2v1h-2zM95 68h2v3h-2zM7 88h2v2h-2zM95 32h2v3h-2zM28 81h2v2h-2zM76 6h2v3h-2zM73 70h2v1h-2zM85 80h2v3h-2zM9 45h1v2h-1zM87 38h1v2h-1zM94 82h3v2h-3zM13 22h1v2h-1zM80 9h1v1h-1zM64 80h1v3h-1zM64 1h2v2h-2zM28 66h3v2h-3zM12 22h3v1h-3zM17 32h3v2h-3zM73 44h3v2h-3zM84 15h2v3h-2zM49 51h2v1h-2zM71 74h2v2h-2zM56 48h3v2h-3zM25 31h2v2h-2zM26 53h2v2h-2zM53 63h2v2h-2zM15 44h2v2h-2zM36 45h2v3h-2zM21 3h1v2h-1zM36 60h1v3h-1zM61 38h1v3h-1zM10 18h1v2h-1zM32 48h1v1h-1zM55 41h1v2h-1zM35 74h1v3h-1zM20 63h1v2h-1zM66 84h1v1h-1zM83 62h1v3h-1zM81 7h2v3h-2zM95 71h3v1h-3zM85 54h1v2h-1zM70 41h2v3h-2zM0 38h2v2h-2zM93 73h3v1h-3zM6 86h3v3h-3zM10 51h3v2h-3zM65 12h2v3h-2zM35 7h2v3h-2zM88 67h2v3h-2zM38 56h2v2h-2zM22 56h3v2h-3zM58 31h3v3h-3zM37 56h3v2h-3zM78 6h2v3h-2zM74 46h1v1h-1zM38 41h2v3h-2zM72 63h3v3h-3zM25 88h2v2h-2zM8 39h2v2h-2zM42 43h3v3h-3zM80 58h2v3h-2zM68 2h2v2h-2zM45 8h2v2h-2zM77 49h2v1h-2zM67 39h2v2h-2zM24 36h2v2h-2z"/></pattern><pattern id="spk2" width="83" height="101" patternUnits="userSpaceOnUse"><path fill="#d8dcd8" d="M36 73h1v1h-1zM6 13h2v1h-2zM25 91h2v2h-2zM41 58h2v1h-2zM13 41h2v2h-2zM30 22h2v2h-2zM56 22h2v2h-2zM62 10h1v2h-1zM35 32h1v2h-1zM40 67h2v1h-2zM1 8h1v2h-1zM4 3h2v1h-2zM7 48h2v2h-2zM33 33h1v2h-1zM55 27h2v2h-2zM56 91h2v1h-2zM42 87h2v2h-2zM24 38h2v2h-2zM80 88h2v2h-2zM57 2h1v2h-1zM16 1h1v2h-1zM5 75h1v2h-1zM80 78h2v1h-2zM80 84h1v2h-1zM58 5h1v2h-1zM52 25h2v1h-2zM28 75h1v2h-1zM22 82h2v2h-2zM8 24h2v1h-2zM50 22h2v1h-2zM82 2h2v1h-2zM19 20h1v1h-1zM18 58h2v1h-2zM79 28h2v2h-2zM40 77h2v2h-2zM54 47h2v2h-2zM38 60h2v2h-2zM75 96h2v1h-2zM3 15h2v2h-2zM46 53h2v2h-2zM37 37h2v2h-2zM14 53h2v1h-2zM43 22h2v2h-2zM10 54h2v1h-2zM2 99h2v2h-2zM5 8h2v2h-2zM24 36h1v2h-1zM27 65h1v2h-1zM75 13h2v1h-2zM65 35h1v2h-1zM6 8h2v2h-2zM19 38h2v2h-2zM48 56h2v1h-2zM45 98h2v2h-2zM46 44h2v2h-2zM44 45h2v2h-2zM39 14h2v1h-2zM2 89h2v2h-2zM76 30h2v1h-2zM5 92h2v1h-2zM14 73h2v2h-2zM63 11h1v2h-1zM30 54h1v1h-1zM39 2h2v2h-2zM82 78h2v1h-2zM32 9h1v2h-1zM67 55h1v2h-1zM56 6h1v1h-1zM20 90h2v2h-2zM71 62h2v2h-2zM15 50h2v2h-2zM9 70h2v2h-2zM23 55h2v2h-2zM10 37h2v2h-2zM72 6h2v1h-2zM32 45h2v2h-2zM59 22h1v2h-1zM13 55h2v1h-2zM59 18h2v2h-2zM72 50h1v2h-1zM25 20h2v2h-2zM78 78h1v2h-1zM64 13h1v2h-1zM58 66h2v2h-2zM51 98h1v2h-1zM43 96h2v1h-2zM38 92h2v2h-2zM45 15h1v2h-1zM57 38h2v2h-2zM16 60h1v2h-1zM16 90h2v2h-2zM37 5h2v1h-2zM27 23h2v2h-2zM29 50h2v2h-2zM56 94h2v2h-2zM24 96h2v2h-2zM15 84h2v1h-2zM63 65h2v2h-2zM2 88h1v2h-1zM62 97h2v2h-2zM49 22h2v1h-2zM59 47h1v2h-1zM32 87h2v2h-2zM54 82h2v2h-2zM41 55h2v2h-2zM53 68h2v2h-2zM39 8h2v2h-2zM80 42h2v1h-2zM57 74h1v1h-1zM4 48h2v2h-2zM78 80h2v1h-2zM75 84h2v1h-2zM23 0h2v1h-2zM25 2h1v2h-1zM67 79h2v2h-2zM76 54h2v1h-2zM20 47h2v2h-2zM66 45h1v2h-1zM63 40h2v2h-2zM64 65h2v2h-2zM35 29h1v1h-1zM50 48h1v2h-1zM68 49h1v2h-1zM68 53h2v2h-2zM25 0h1v2h-1zM72 12h2v2h-2zM27 63h2v2h-2zM26 64h1v2h-1zM59 62h2v1h-2z"/><path fill="#c8ccc8" d="M44 70h2v2h-2zM82 90h2v2h-2zM81 0h1v2h-1zM45 14h2v1h-2zM55 69h1v2h-1zM70 57h2v2h-2zM53 45h2v2h-2zM77 22h2v2h-2zM19 63h2v2h-2zM56 92h2v1h-2zM33 96h1v1h-1zM59 98h2v2h-2zM28 92h2v2h-2zM62 25h2v2h-2zM80 56h2v1h-2zM39 12h2v2h-2zM15 35h1v2h-1zM47 70h1v2h-1zM62 10h1v1h-1zM53 88h2v2h-2zM53 0h2v1h-2zM25 95h2v2h-2zM14 41h1v1h-1zM18 27h2v2h-2zM24 80h2v2h-2zM43 28h2v2h-2zM21 35h1v2h-1zM4 85h2v2h-2zM14 93h2v1h-2zM41 7h2v2h-2zM74 67h1v2h-1zM75 76h1v1h-1zM52 81h2v2h-2zM59 28h1v1h-1zM22 62h2v2h-2zM15 28h1v2h-1zM29 39h1v1h-1zM12 100h1v2h-1zM64 99h2v2h-2zM74 97h1v2h-1zM15 32h2v2h-2zM66 23h2v2h-2zM54 82h1v1h-1zM11 50h2v1h-2zM23 80h2v2h-2zM40 73h1v1h-1zM40 57h2v2h-2zM15 28h2v1h-2zM16 55h1v2h-1zM33 30h2v2h-2zM41 88h2v2h-2zM16 71h1v2h-1zM18 15h2v1h-2zM34 72h2v2h-2zM74 0h2v2h-2zM51 11h1v1h-1zM28 82h2v2h-2zM79 33h2v1h-2zM50 38h1v1h-1zM57 89h2v1h-2zM11 85h2v1h-2zM53 63h2v1h-2zM53 46h2v2h-2zM16 66h2v2h-2zM3 69h2v2h-2zM62 93h2v1h-2zM11 14h1v2h-1zM21 7h2v2h-2zM33 48h1v1h-1zM30 96h2v2h-2zM59 79h2v2h-2zM64 63h1v2h-1zM29 66h2v2h-2zM8 75h1v2h-1zM61 92h2v2h-2zM31 17h1v1h-1zM44 25h1v2h-1zM45 3h2v1h-2zM46 5h1v1h-1zM22 43h2v1h-2zM30 47h2v2h-2zM15 18h1v1h-1zM81 74h2v1h-2zM35 24h2v2h-2zM65 97h1v2h-1zM52 50h1v1h-1zM55 90h2v2h-2zM77 73h2v2h-2zM17 60h2v1h-2zM15 68h2v2h-2zM19 56h2v1h-2z"/><path fill="#e8e8e8" d="M28 18h2v2h-2zM50 23h2v2h-2zM20 61h2v1h-2zM40 38h2v2h-2zM34 52h2v2h-2zM74 39h2v1h-2zM65 60h2v2h-2zM4 88h2v2h-2zM37 94h2v1h-2zM35 32h1v2h-1zM75 98h1v2h-1zM67 13h2v2h-2zM54 88h2v2h-2zM9 9h2v2h-2zM61 15h2v2h-2zM11 90h2v2h-2zM78 11h2v2h-2zM15 67h1v2h-1zM5 6h2v2h-2zM27 75h2v2h-2zM52 27h1v2h-1zM46 6h1v2h-1zM59 79h1v2h-1zM71 90h1v1h-1zM54 35h1v1h-1zM68 37h2v2h-2zM2 29h2v2h-2zM67 70h2v2h-2zM33 29h2v2h-2zM40 73h1v2h-1zM18 72h2v2h-2zM17 25h1v2h-1zM17 45h1v1h-1zM12 76h1v2h-1zM46 12h2v2h-2zM18 1h1v2h-1zM47 99h2v2h-2zM16 2h2v2h-2zM75 7h2v1h-2zM75 25h1v2h-1zM3 11h1v2h-1zM17 63h2v2h-2zM71 92h1v1h-1zM56 28h2v2h-2zM34 96h2v2h-2zM22 48h2v2h-2zM62 64h2v2h-2zM21 62h2v1h-2zM20 64h1v2h-1zM31 31h1v2h-1zM54 72h2v2h-2zM40 48h2v2h-2zM43 21h2v2h-2zM9 68h1v2h-1zM74 12h2v2h-2zM80 7h2v1h-2zM8 81h1v2h-1zM66 85h2v2h-2zM54 60h2v1h-2zM18 46h2v2h-2zM6 88h2v1h-2zM32 38h1v1h-1zM26 20h2v2h-2zM0 51h1v2h-1zM76 33h1v1h-1zM23 52h1v1h-1zM6 42h1v2h-1zM48 38h2v2h-2zM33 21h2v2h-2zM35 95h2v2h-2zM33 78h2v2h-2zM29 23h1v2h-1zM38 31h2v2h-2zM10 53h2v2h-2zM23 10h2v2h-2zM80 68h1v1h-1zM57 74h1v1h-1zM14 63h2v2h-2zM36 92h1v2h-1zM53 86h2v2h-2zM60 20h2v1h-2zM71 6h1v2h-1zM45 98h1v2h-1zM26 46h1v2h-1zM12 19h2v2h-2zM0 31h2v2h-2zM64 21h1v2h-1zM66 8h1v2h-1zM70 38h2v2h-2zM76 29h2v2h-2zM66 94h1v1h-1zM47 39h2v2h-2zM75 53h1v2h-1zM5 53h2v2h-2zM3 67h2v2h-2zM12 40h1v2h-1zM80 27h2v2h-2zM15 17h2v2h-2zM40 87h2v2h-2zM57 34h1v2h-1zM43 26h2v2h-2zM15 45h2v2h-2zM5 92h1v1h-1zM9 31h1v1h-1zM16 7h2v1h-2zM54 79h2v1h-2zM74 72h2v2h-2zM68 48h2v2h-2zM78 75h1v2h-1zM57 59h2v2h-2zM46 4h2v1h-2zM25 86h2v2h-2zM69 33h1v2h-1zM51 97h2v2h-2zM42 72h2v2h-2zM67 8h2v1h-2zM49 26h1v1h-1zM64 91h2v2h-2zM51 77h1v2h-1zM41 52h2v1h-2zM24 50h1v1h-1zM2 77h1v1h-1zM9 85h1v2h-1z"/><path fill="#b8c0c8" d="M39 78h2v2h-2zM75 80h2v2h-2zM60 14h2v2h-2zM40 91h2v2h-2zM60 17h1v2h-1zM53 58h2v2h-2zM79 23h2v2h-2zM68 99h1v2h-1zM72 33h1v2h-1zM59 51h2v2h-2zM55 1h2v2h-2zM12 32h2v2h-2zM81 0h1v2h-1zM34 19h2v2h-2zM8 69h1v1h-1zM25 22h2v1h-2zM43 100h2v1h-2zM18 62h2v1h-2zM75 8h1v1h-1zM4 76h1v2h-1zM68 22h1v1h-1zM56 75h2v2h-2zM60 74h2v1h-2zM29 11h2v2h-2zM64 4h2v2h-2zM61 89h1v2h-1zM30 82h1v1h-1zM73 95h2v1h-2zM59 98h1v2h-1zM81 0h2v1h-2zM42 67h1v2h-1zM30 69h1v2h-1zM16 60h2v2h-2zM6 18h2v2h-2zM38 15h1v2h-1zM70 14h2v1h-2zM11 65h2v1h-2zM36 44h2v2h-2zM71 11h1v2h-1zM33 38h2v2h-2zM15 83h2v2h-2zM76 95h2v2h-2zM12 27h2v2h-2zM46 89h2v1h-2zM13 23h2v2h-2zM63 14h2v2h-2zM47 22h1v2h-1zM10 15h1v2h-1zM60 85h2v2h-2zM59 25h2v2h-2zM69 69h1v1h-1zM80 43h2v1h-2zM8 72h2v2h-2zM69 40h1v2h-1zM39 59h2v2h-2zM40 42h2v2h-2zM22 27h2v2h-2zM30 56h2v1h-2zM41 36h1v1h-1zM21 6h2v2h-2zM67 55h2v2h-2zM34 36h2v2h-2zM36 93h2v1h-2zM47 74h2v2h-2zM55 21h2v2h-2zM41 19h1v1h-1zM47 65h1v2h-1zM65 13h2v2h-2zM75 92h2v2h-2zM13 80h2v2h-2zM70 37h1v2h-1zM8 34h2v2h-2zM43 77h2v2h-2zM16 37h2v2h-2zM64 4h1v2h-1zM17 15h1v2h-1zM29 17h2v2h-2zM56 89h2v2h-2zM73 86h1v2h-1zM66 74h1v2h-1zM52 10h1v1h-1zM64 16h2v2h-2zM72 57h2v2h-2zM58 97h2v2h-2zM79 85h2v2h-2zM41 51h2v1h-2zM2 43h2v1h-2zM3 91h1v2h-1zM52 8h2v1h-2zM21 100h1v2h-1zM9 68h1v2h-1zM38 91h1v1h-1zM3 94h1v2h-1zM81 65h2v2h-2zM30 64h2v1h-2zM8 43h1v2h-1zM53 42h1v1h-1zM42 94h2v1h-2zM14 43h1v2h-1zM35 16h2v2h-2zM78 8h1v2h-1zM82 96h2v2h-2zM63 60h2v2h-2zM28 25h2v1h-2zM17 96h1v2h-1zM59 65h2v2h-2zM74 96h2v1h-2zM29 92h2v1h-2zM16 39h2v1h-2zM45 43h1v2h-1zM22 4h2v2h-2zM3 23h1v1h-1zM38 50h2v1h-2zM31 22h2v2h-2zM59 48h2v2h-2zM70 84h1v2h-1zM4 86h2v1h-2z"/><path fill="#c0b8a8" d="M20 35h1v1h-1zM71 65h1v1h-1zM54 50h1v2h-1zM21 36h2v2h-2zM38 68h2v2h-2zM52 30h2v1h-2zM73 62h1v2h-1zM7 11h1v1h-1zM57 68h2v2h-2zM55 91h2v1h-2zM16 37h1v2h-1zM23 54h2v1h-2zM63 93h1v2h-1zM10 18h2v2h-2zM35 59h2v1h-2zM4 43h1v1h-1zM49 60h2v1h-2zM68 81h2v2h-2zM82 62h1v1h-1zM80 82h1v2h-1zM4 24h1v2h-1zM69 82h2v2h-2zM15 27h2v2h-2zM51 41h1v2h-1zM26 18h2v2h-2zM57 52h1v1h-1zM26 55h2v2h-2zM42 16h1v2h-1zM81 78h1v2h-1zM31 31h2v2h-2zM34 89h2v2h-2zM26 100h2v1h-2zM28 41h2v2h-2zM44 57h2v2h-2zM2 37h2v2h-2zM21 79h1v2h-1zM47 57h2v1h-2zM60 88h1v2h-1zM73 2h2v1h-2zM20 13h1v1h-1zM46 17h2v2h-2zM25 13h1v2h-1zM40 15h2v1h-2zM46 25h2v1h-2zM63 35h2v2h-2zM62 84h2v2h-2zM32 75h1v2h-1zM47 89h1v2h-1zM12 20h2v2h-2zM73 28h1v1h-1zM49 90h2v2h-2zM5 0h2v2h-2zM36 23h1v2h-1zM61 58h2v2h-2zM0 42h1v2h-1zM55 94h2v2h-2zM49 60h2v2h-2zM54 11h2v2h-2zM63 67h2v2h-2zM12 59h2v2h-2zM77 92h2v2h-2zM62 65h2v2h-2zM62 29h2v1h-2zM2 54h2v2h-2zM56 29h2v1h-2zM14 79h1v1h-1zM44 1h2v2h-2zM25 38h1v1h-1zM11 65h2v2h-2zM7 47h2v2h-2zM58 43h1v2h-1zM72 91h2v2h-2zM47 86h2v2h-2zM71 66h2v2h-2zM20 71h2v1h-2zM52 14h1v2h-1zM71 10h1v2h-1zM73 96h1v2h-1zM74 56h1v2h-1zM34 7h2v2h-2zM81 29h1v2h-1zM71 83h1v2h-1zM52 57h1v2h-1zM26 100h1v2h-1zM0 7h2v2h-2zM5 20h2v2h-2zM81 50h1v2h-1zM72 86h2v2h-2zM2 88h2v2h-2zM66 59h2v2h-2zM50 24h2v1h-2zM3 61h2v1h-2zM52 29h2v2h-2zM3 58h2v2h-2zM24 13h1v1h-1zM18 18h2v2h-2zM43 37h2v1h-2zM28 88h1v2h-1zM37 56h1v2h-1zM27 39h2v2h-2zM71 3h2v1h-2zM4 17h1v2h-1zM11 21h1v2h-1zM72 62h2v2h-2zM30 20h2v2h-2z"/><path fill="#d0d8e0" d="M6 16h1v2h-1zM59 12h2v2h-2zM55 72h2v2h-2zM48 41h2v2h-2zM73 57h1v1h-1zM55 89h2v2h-2zM16 17h1v1h-1zM2 18h2v2h-2zM55 17h1v1h-1zM4 4h2v2h-2zM47 14h2v2h-2zM78 11h1v2h-1zM74 21h2v1h-2zM73 93h2v1h-2zM68 29h2v2h-2zM23 40h2v1h-2zM76 84h1v2h-1zM82 72h1v1h-1zM23 32h2v2h-2zM57 2h2v1h-2zM43 10h2v2h-2zM58 86h2v1h-2zM74 29h1v1h-1zM79 5h1v2h-1zM25 54h2v2h-2zM60 63h1v1h-1zM65 14h1v1h-1zM49 47h1v2h-1zM53 5h1v2h-1zM30 10h2v1h-2zM23 47h2v2h-2zM42 94h1v2h-1zM15 60h2v2h-2zM63 19h1v2h-1zM52 74h2v2h-2zM41 62h2v2h-2zM36 23h1v2h-1zM47 23h1v2h-1zM69 64h2v2h-2zM37 60h2v2h-2zM2 10h2v2h-2zM74 38h2v2h-2zM72 55h2v2h-2zM7 18h2v2h-2zM40 87h2v2h-2zM28 24h2v2h-2zM67 68h2v2h-2zM54 24h1v2h-1zM13 50h2v2h-2zM51 15h1v2h-1zM80 17h1v1h-1zM22 71h2v2h-2zM49 62h1v2h-1zM63 75h2v2h-2zM68 41h1v2h-1zM73 12h2v1h-2zM28 79h2v1h-2zM38 64h2v2h-2zM32 79h2v2h-2zM70 23h1v2h-1zM78 98h2v2h-2zM59 18h1v1h-1zM36 82h1v2h-1zM35 84h2v1h-2zM8 52h2v2h-2zM70 49h2v2h-2zM10 99h2v2h-2zM8 45h2v2h-2zM70 94h2v2h-2zM3 97h1v2h-1zM21 72h1v1h-1zM77 85h2v2h-2zM59 16h1v2h-1zM63 5h2v2h-2zM53 9h1v2h-1zM12 42h1v2h-1zM82 36h2v1h-2zM49 99h2v2h-2zM5 65h2v2h-2zM61 38h1v1h-1zM64 2h1v2h-1zM50 14h1v1h-1zM78 46h2v2h-2zM1 24h1v1h-1zM24 3h1v2h-1zM14 21h1v2h-1zM63 94h2v2h-2zM19 88h2v2h-2zM56 97h2v2h-2zM50 97h1v2h-1zM19 73h1v2h-1zM66 37h2v2h-2zM18 89h2v2h-2zM26 69h2v2h-2zM42 49h2v2h-2zM63 81h2v2h-2zM27 58h2v1h-2zM77 16h1v2h-1zM21 90h1v2h-1zM39 71h2v1h-2zM11 19h2v2h-2zM8 38h1v2h-1zM77 60h1v1h-1zM22 52h2v2h-2zM28 95h1v2h-1zM45 24h1v2h-1zM46 4h2v2h-2zM22 8h2v1h-2zM76 79h2v1h-2zM39 74h2v2h-2zM5 63h1v1h-1zM36 22h1v2h-1zM2 86h1v2h-1zM19 41h1v1h-1zM66 59h1v2h-1zM47 67h2v2h-2zM22 56h1v2h-1zM36 26h1v2h-1zM5 94h1v2h-1zM58 49h2v1h-2zM37 85h1v2h-1zM9 81h2v2h-2zM14 90h1v2h-1zM6 81h2v2h-2z"/><path fill="#a8b0a8" d="M78 45h2v2h-2zM59 72h1v1h-1zM16 65h1v2h-1zM26 88h2v2h-2zM59 41h2v1h-2zM76 13h2v2h-2zM1 78h2v2h-2zM6 0h2v2h-2zM46 53h1v2h-1zM9 87h2v2h-2zM57 47h1v2h-1zM30 62h1v2h-1zM34 42h2v2h-2zM15 90h1v1h-1zM77 16h2v2h-2zM9 81h2v2h-2zM20 99h1v2h-1zM73 0h2v2h-2zM62 61h2v2h-2zM30 62h2v1h-2zM76 78h1v1h-1zM69 17h2v1h-2zM74 5h1v1h-1zM69 64h1v2h-1zM24 14h1v2h-1zM7 35h1v1h-1zM59 58h2v1h-2zM1 93h2v2h-2zM39 20h2v2h-2zM74 89h1v2h-1zM72 16h2v1h-2zM46 50h1v2h-1zM53 56h2v1h-2zM54 93h2v1h-2zM71 59h2v2h-2zM70 62h1v2h-1zM65 24h2v1h-2zM74 44h2v1h-2zM64 72h1v1h-1zM76 94h2v2h-2zM9 84h2v2h-2zM15 49h2v2h-2zM73 60h2v2h-2zM3 75h1v1h-1zM75 10h2v1h-2zM26 43h2v2h-2zM55 25h2v2h-2zM6 38h2v2h-2zM26 44h1v2h-1zM59 34h2v2h-2zM38 55h2v2h-2zM19 24h1v1h-1zM34 17h1v2h-1zM10 40h2v2h-2zM46 87h1v2h-1zM82 52h1v2h-1zM52 42h2v2h-2zM31 66h2v2h-2zM16 76h2v2h-2zM33 22h2v2h-2zM47 23h2v2h-2zM59 25h2v2h-2zM10 1h2v1h-2zM40 5h1v2h-1zM19 71h2v2h-2zM57 41h2v2h-2zM72 16h1v1h-1zM51 32h1v1h-1zM19 15h2v2h-2zM16 45h2v1h-2zM61 58h2v2h-2zM18 83h1v2h-1zM56 62h2v1h-2zM45 86h1v1h-1zM28 62h2v2h-2zM13 90h1v2h-1zM58 96h1v1h-1zM19 96h2v2h-2zM56 18h1v2h-1zM12 18h2v2h-2zM62 3h1v1h-1zM15 70h2v1h-2zM19 93h2v1h-2zM35 100h1v1h-1zM36 18h1v2h-1zM75 86h1v1h-1zM71 57h1v1h-1zM32 87h2v2h-2zM55 26h2v2h-2zM77 26h1v1h-1zM8 16h2v2h-2zM60 30h2v1h-2zM42 66h1v1h-1zM7 71h1v2h-1zM48 51h1v2h-1zM1 58h2v2h-2zM45 39h2v2h-2zM59 76h2v2h-2zM27 30h2v2h-2zM26 93h1v2h-1zM9 45h1v2h-1zM44 100h2v2h-2zM29 66h2v2h-2zM59 92h2v2h-2zM10 40h1v2h-1zM53 26h2v2h-2zM41 75h1v2h-1zM80 77h2v2h-2zM66 1h1v2h-1zM58 44h2v2h-2zM47 9h1v2h-1z"/></pattern><pattern id="spk4" width="101" height="97" patternUnits="userSpaceOnUse"><path fill="#202820" d="M56 6h2v1h-2zM3 1h1v1h-1zM26 69h1v1h-1zM85 61h1v1h-1zM96 31h2v1h-2zM19 48h1v2h-1zM17 35h1v2h-1zM66 53h2v1h-2zM80 0h1v1h-1zM61 2h1v1h-1zM94 31h1v1h-1zM46 80h2v2h-2zM75 39h2v1h-2zM25 62h1v2h-1zM52 56h2v2h-2zM81 21h1v1h-1zM96 0h2v2h-2zM7 45h1v1h-1zM54 60h2v2h-2zM31 27h1v2h-1zM68 81h2v1h-2zM28 33h1v1h-1zM16 40h1v2h-1zM18 95h2v2h-2zM76 40h1v2h-1zM63 37h2v1h-2zM12 16h1v2h-1zM80 92h1v1h-1zM99 88h2v2h-2zM80 83h1v1h-1zM82 85h2v1h-2zM74 68h2v2h-2zM96 96h1v2h-1zM23 76h2v1h-2zM71 57h1v1h-1zM11 71h1v1h-1zM26 88h1v2h-1zM48 3h2v1h-2zM52 8h1v2h-1zM93 39h2v1h-2zM70 34h2v1h-2zM66 91h1v1h-1zM39 52h1v1h-1zM87 86h2v2h-2zM51 1h2v1h-2zM27 39h2v2h-2zM19 52h1v1h-1zM50 53h2v1h-2zM85 54h1v1h-1zM29 15h1v1h-1zM35 24h1v1h-1zM28 43h1v1h-1zM91 53h1v1h-1zM46 42h1v1h-1zM26 74h1v1h-1zM16 80h2v2h-2zM73 27h2v2h-2zM70 15h1v1h-1zM80 77h1v1h-1zM52 78h1v1h-1zM12 92h2v1h-2zM77 12h1v1h-1zM42 61h1v1h-1zM28 87h1v2h-1zM62 21h1v1h-1zM49 57h2v1h-2zM89 11h1v1h-1zM9 61h2v1h-2zM52 92h1v1h-1zM36 14h1v1h-1zM95 27h1v2h-1zM24 34h1v1h-1zM36 20h2v1h-2zM34 10h2v2h-2zM92 45h1v2h-1zM42 52h2v2h-2zM19 87h1v1h-1zM30 26h2v2h-2zM19 72h2v1h-2zM1 18h1v2h-1zM97 56h2v1h-2zM13 10h1v2h-1zM27 89h2v1h-2zM72 4h2v1h-2zM46 55h1v1h-1zM85 33h1v1h-1zM81 57h2v2h-2zM81 36h2v2h-2zM11 13h1v2h-1zM86 30h1v1h-1zM24 78h2v1h-2zM41 26h1v1h-1zM3 79h2v2h-2zM80 2h2v2h-2zM14 58h2v1h-2zM18 36h1v1h-1zM12 62h1v1h-1zM34 35h1v1h-1zM87 91h1v1h-1zM72 45h1v2h-1zM63 5h1v1h-1zM75 49h1v2h-1zM36 2h2v2h-2zM59 36h1v1h-1zM68 67h1v1h-1zM35 40h1v1h-1zM71 40h1v2h-1zM82 15h1v2h-1zM41 93h1v1h-1zM88 9h1v1h-1zM82 13h1v1h-1zM6 56h1v1h-1zM66 55h1v2h-1zM82 31h1v1h-1zM88 30h1v1h-1zM66 84h2v1h-2zM34 87h2v2h-2zM95 11h1v1h-1zM58 72h1v1h-1zM5 27h1v2h-1zM93 25h1v2h-1zM69 23h1v1h-1zM6 10h1v1h-1zM61 88h1v1h-1zM94 74h2v2h-2zM38 80h1v2h-1zM62 79h2v1h-2zM8 0h1v2h-1zM66 12h1v1h-1zM87 56h2v2h-2zM60 61h1v1h-1zM58 15h2v1h-2zM90 67h1v2h-1zM100 84h1v1h-1zM74 79h1v1h-1zM3 93h1v1h-1zM41 29h2v1h-2zM22 93h1v1h-1zM7 78h1v1h-1zM80 3h1v1h-1zM11 74h1v2h-1zM99 52h2v2h-2zM6 76h2v1h-2zM26 70h2v1h-2zM61 16h1v2h-1zM100 29h1v1h-1zM45 24h1v1h-1zM30 29h1v2h-1zM5 1h2v1h-2zM50 61h2v1h-2zM89 69h2v1h-2zM15 47h2v1h-2zM35 75h1v1h-1zM2 48h1v1h-1zM68 6h2v1h-2zM33 96h2v1h-2zM100 93h2v1h-2zM59 95h1v1h-1zM33 22h1v1h-1zM83 6h1v1h-1zM7 91h1v1h-1zM86 45h2v2h-2zM76 30h1v1h-1zM64 56h1v2h-1zM93 53h2v2h-2zM33 36h1v1h-1zM33 70h2v1h-2zM43 75h2v2h-2zM49 40h1v1h-1zM35 73h2v1h-2zM5 69h2v1h-2zM16 58h1v1h-1zM56 55h1v1h-1zM17 35h2v2h-2zM45 10h2v1h-2zM58 80h2v2h-2zM71 84h2v1h-2zM41 31h2v1h-2zM22 59h1v2h-1zM42 16h2v2h-2zM45 70h1v2h-1zM27 70h2v1h-2zM60 48h1v1h-1zM57 47h1v2h-1zM82 39h1v1h-1zM90 61h2v2h-2zM53 51h1v1h-1zM21 67h2v1h-2zM69 82h2v1h-2zM35 22h1v2h-1zM21 0h1v1h-1zM62 88h1v2h-1zM24 48h1v1h-1zM0 75h1v1h-1zM35 80h1v2h-1zM16 10h1v1h-1zM33 27h1v1h-1zM38 5h1v2h-1zM19 87h2v1h-2zM47 46h1v2h-1zM39 49h2v1h-2zM87 66h1v1h-1zM64 49h2v1h-2zM55 6h1v1h-1zM15 62h1v1h-1zM2 57h1v1h-1zM76 14h1v2h-1zM47 4h1v2h-1zM2 23h2v1h-2zM35 40h1v2h-1zM20 22h1v1h-1zM53 52h1v2h-1zM72 80h1v2h-1zM30 22h1v2h-1zM92 8h1v2h-1zM91 3h1v1h-1zM31 61h1v1h-1zM45 63h1v2h-1zM46 85h1v1h-1zM68 94h2v1h-2zM11 95h1v2h-1zM81 9h1v1h-1zM56 10h1v1h-1zM75 81h2v1h-2zM14 96h1v1h-1zM14 60h1v2h-1zM37 88h1v1h-1zM47 2h2v1h-2zM73 42h2v1h-2zM2 51h2v1h-2zM26 39h1v1h-1zM25 26h1v2h-1zM46 61h1v2h-1zM33 79h1v1h-1zM92 67h1v1h-1zM68 56h1v2h-1zM65 16h1v1h-1zM94 4h2v1h-2zM25 23h1v1h-1zM30 20h1v1h-1zM62 70h1v2h-1zM85 43h2v1h-2zM100 46h1v2h-1zM78 54h1v1h-1zM75 24h1v1h-1zM28 35h1v1h-1zM97 41h1v2h-1zM97 37h1v2h-1zM80 95h1v2h-1zM94 29h1v1h-1zM45 50h1v1h-1zM94 37h2v2h-2zM70 19h2v1h-2zM28 59h1v2h-1zM75 15h1v2h-1zM31 76h1v1h-1zM29 44h2v2h-2zM2 77h1v2h-1zM87 47h1v1h-1zM84 70h1v1h-1zM49 39h1v1h-1zM73 81h2v1h-2zM49 29h1v1h-1zM66 4h1v1h-1zM70 40h1v1h-1zM0 48h1v2h-1zM49 72h1v1h-1zM49 32h1v1h-1z"/><path fill="#2a3028" d="M28 12h2v1h-2zM1 49h1v1h-1zM41 80h2v1h-2zM17 47h1v1h-1zM29 93h1v1h-1zM26 69h1v2h-1zM24 6h2v1h-2zM92 59h1v1h-1zM31 54h1v2h-1zM38 36h2v1h-2zM64 78h2v1h-2zM97 38h2v2h-2zM17 91h1v1h-1zM31 77h2v2h-2zM13 81h2v1h-2zM21 22h1v1h-1zM57 72h1v1h-1zM47 87h1v1h-1zM58 89h1v2h-1zM93 49h1v2h-1zM14 61h2v2h-2zM13 55h2v1h-2zM85 60h2v1h-2zM83 82h2v1h-2zM39 7h2v2h-2zM49 54h1v1h-1zM66 84h2v2h-2zM35 90h2v1h-2zM42 19h2v1h-2zM93 50h1v2h-1zM90 38h1v2h-1zM37 18h1v1h-1zM83 43h2v1h-2zM88 95h1v2h-1zM16 73h1v2h-1zM21 54h2v1h-2zM27 17h2v2h-2zM10 32h2v1h-2zM46 42h1v1h-1zM35 1h1v1h-1zM1 87h2v2h-2zM9 93h1v1h-1zM28 22h1v1h-1zM38 61h1v1h-1zM45 13h1v1h-1zM95 55h1v1h-1zM14 24h1v1h-1zM64 92h2v1h-2zM14 13h1v1h-1zM44 64h1v2h-1zM36 62h1v1h-1zM79 19h2v2h-2zM31 35h1v1h-1zM89 93h2v2h-2zM24 75h2v2h-2zM52 67h1v2h-1zM85 1h2v2h-2zM5 75h2v1h-2zM97 25h2v2h-2zM2 21h2v1h-2zM37 5h2v1h-2zM34 26h1v1h-1zM68 30h1v1h-1zM35 17h1v1h-1zM90 70h1v2h-1zM23 58h1v1h-1zM87 77h1v1h-1zM14 1h2v1h-2zM37 13h2v1h-2zM76 23h2v1h-2zM33 91h1v1h-1zM99 83h1v1h-1zM18 11h1v1h-1zM81 42h1v2h-1zM68 63h2v2h-2zM67 73h2v2h-2zM99 17h1v1h-1zM70 53h1v1h-1zM7 95h1v1h-1zM18 46h1v1h-1zM9 1h2v1h-2zM97 23h1v2h-1zM77 96h1v2h-1zM39 90h1v1h-1zM34 11h2v1h-2zM46 77h1v1h-1zM27 76h1v1h-1zM70 25h2v1h-2zM61 75h1v1h-1zM91 29h1v2h-1zM63 12h1v1h-1zM46 45h1v1h-1zM51 52h2v2h-2zM20 72h1v1h-1zM35 58h1v2h-1zM32 81h1v1h-1zM91 57h1v2h-1zM54 43h1v1h-1zM66 92h1v1h-1zM94 76h1v1h-1zM20 55h1v1h-1zM97 80h1v2h-1zM55 1h2v2h-2zM73 48h1v2h-1zM58 81h2v1h-2zM30 83h1v1h-1zM84 6h1v1h-1zM48 40h2v1h-2zM2 66h2v1h-2zM17 28h1v2h-1zM51 24h1v1h-1zM74 75h1v1h-1zM13 77h1v1h-1zM45 50h1v1h-1zM41 54h1v1h-1zM88 1h2v1h-2zM8 49h1v2h-1zM3 28h1v1h-1zM48 34h2v1h-2zM85 15h2v2h-2zM71 31h2v2h-2zM97 39h2v1h-2zM49 57h2v2h-2zM10 45h1v1h-1zM24 37h1v1h-1zM6 4h2v1h-2zM8 68h1v1h-1zM21 23h1v1h-1zM2 22h1v1h-1zM29 67h2v1h-2zM18 52h1v2h-1zM94 89h1v1h-1zM19 11h2v1h-2zM94 63h1v1h-1zM55 18h2v1h-2zM18 95h2v1h-2zM65 94h2v2h-2zM92 58h1v1h-1zM99 84h2v1h-2zM56 86h1v1h-1zM94 20h1v2h-1zM38 12h1v1h-1zM33 25h1v1h-1zM13 4h1v2h-1zM61 6h1v1h-1zM55 89h1v2h-1zM9 7h1v1h-1zM29 39h2v2h-2zM35 87h1v1h-1zM70 40h1v1h-1zM33 35h1v1h-1zM40 5h2v2h-2zM60 37h2v1h-2zM97 83h1v1h-1zM66 56h1v1h-1zM73 37h1v1h-1zM77 29h1v1h-1zM10 52h1v2h-1zM73 63h2v1h-2zM16 4h1v1h-1zM37 96h1v2h-1zM35 62h1v1h-1zM36 33h2v1h-2zM85 35h1v1h-1zM12 90h2v1h-2zM31 17h2v1h-2zM86 25h1v1h-1zM8 62h2v2h-2zM78 48h2v2h-2zM81 44h1v2h-1zM69 61h1v1h-1zM44 89h1v2h-1zM33 6h1v1h-1zM66 26h1v2h-1zM20 68h1v2h-1zM38 3h1v2h-1zM36 89h2v2h-2zM28 73h1v1h-1zM52 39h2v1h-2zM52 0h1v2h-1zM14 4h1v1h-1zM26 42h2v2h-2zM8 0h1v2h-1zM28 44h2v1h-2zM75 19h1v2h-1zM94 78h2v1h-2zM0 41h1v1h-1zM41 38h2v1h-2zM71 55h2v1h-2zM25 56h1v2h-1zM91 19h2v2h-2zM85 85h1v1h-1zM59 11h1v1h-1zM80 2h1v1h-1zM81 47h1v1h-1zM39 87h2v1h-2zM52 28h1v1h-1zM49 19h2v2h-2zM95 34h1v2h-1zM14 66h2v2h-2zM39 20h1v2h-1zM75 3h1v2h-1zM38 76h2v2h-2zM100 6h1v1h-1zM0 84h1v1h-1zM38 39h1v1h-1zM26 55h1v2h-1zM70 87h1v2h-1zM60 85h1v1h-1zM3 28h2v1h-2zM78 76h1v1h-1zM17 63h1v1h-1zM68 49h2v1h-2zM68 94h1v1h-1zM10 68h1v1h-1zM38 78h2v2h-2zM27 55h1v2h-1zM76 81h1v1h-1zM28 2h2v1h-2zM3 19h2v2h-2zM77 15h1v1h-1zM27 14h2v1h-2zM64 68h2v1h-2zM68 42h1v2h-1zM2 41h2v1h-2zM97 74h1v2h-1zM46 52h2v1h-2zM91 37h1v2h-1zM86 37h1v2h-1zM66 47h1v1h-1zM1 85h1v1h-1zM77 93h1v2h-1zM95 67h1v2h-1zM57 72h2v1h-2zM32 94h1v2h-1zM29 88h2v1h-2zM16 66h1v1h-1zM14 92h1v2h-1zM40 65h1v1h-1zM23 24h1v1h-1zM20 24h1v1h-1zM7 52h1v2h-1zM58 35h1v2h-1zM41 71h2v2h-2zM41 93h1v1h-1zM46 57h2v1h-2zM32 77h2v1h-2zM35 59h1v2h-1zM79 49h1v1h-1zM41 54h1v1h-1zM91 73h1v1h-1zM44 8h1v1h-1zM84 26h1v1h-1zM3 56h2v2h-2zM8 55h2v1h-2zM1 16h2v1h-2zM79 53h1v1h-1zM22 66h1v2h-1zM42 3h1v1h-1zM39 60h1v1h-1zM95 73h1v1h-1zM73 61h1v1h-1zM80 73h1v1h-1zM65 24h1v2h-1zM76 8h1v1h-1zM92 94h2v2h-2zM58 89h2v1h-2zM43 56h1v1h-1zM37 96h2v2h-2zM50 79h2v1h-2zM41 28h1v1h-1zM63 28h2v1h-2zM28 56h2v1h-2zM69 45h1v2h-1zM68 40h1v2h-1zM55 90h1v1h-1zM67 52h2v1h-2zM52 48h2v1h-2zM11 23h1v1h-1zM73 22h1v2h-1zM66 21h1v1h-1zM85 70h1v1h-1zM46 18h1v1h-1zM50 96h2v2h-2zM36 41h1v1h-1zM75 95h2v2h-2zM3 6h1v1h-1zM47 87h2v1h-2zM9 91h1v1h-1zM0 30h2v1h-2zM5 89h1v1h-1zM9 81h1v1h-1zM33 13h1v1h-1zM11 71h1v1h-1zM14 29h1v1h-1zM78 47h1v2h-1zM32 22h1v1h-1zM82 7h1v1h-1zM37 64h1v1h-1zM67 36h2v1h-2zM4 18h1v2h-1zM28 18h1v2h-1zM26 31h1v2h-1zM82 39h1v1h-1zM38 79h1v1h-1z"/><path fill="#303828" d="M91 84h1v1h-1zM98 48h1v1h-1zM5 53h2v1h-2zM29 27h1v1h-1zM22 1h1v2h-1zM42 22h2v2h-2zM30 92h2v1h-2zM71 77h1v1h-1zM24 0h1v2h-1zM62 51h1v1h-1zM72 20h1v1h-1zM90 62h2v2h-2zM89 85h2v1h-2zM77 58h2v1h-2zM24 54h1v1h-1zM7 95h1v1h-1zM48 15h1v1h-1zM86 12h1v1h-1zM96 43h2v1h-2zM3 77h1v2h-1zM52 84h1v1h-1zM2 81h1v1h-1zM51 94h2v1h-2zM4 16h1v1h-1zM41 49h1v1h-1zM24 95h1v2h-1zM87 58h1v2h-1zM9 67h2v1h-2zM86 21h1v1h-1zM15 30h1v1h-1zM99 59h2v1h-2zM75 73h2v1h-2zM38 73h1v1h-1zM56 17h2v1h-2zM30 4h1v1h-1zM54 9h2v1h-2zM68 26h1v2h-1zM81 89h2v1h-2zM67 44h2v2h-2zM21 40h1v1h-1zM51 61h2v1h-2zM94 34h1v2h-1zM90 58h1v1h-1zM73 7h1v2h-1zM91 54h2v2h-2zM48 21h1v1h-1zM86 31h2v1h-2zM59 79h1v1h-1zM0 78h1v1h-1zM84 56h1v1h-1zM20 85h1v1h-1zM94 1h1v1h-1zM65 54h2v1h-2zM14 34h1v1h-1zM23 5h1v1h-1zM67 77h1v1h-1zM91 32h2v1h-2zM33 38h1v1h-1zM26 68h1v1h-1zM80 1h1v1h-1zM70 26h1v1h-1zM72 62h2v1h-2zM1 1h1v2h-1zM97 72h1v1h-1zM49 18h1v2h-1zM36 45h1v2h-1zM19 22h1v2h-1zM85 87h1v2h-1zM44 13h1v1h-1zM14 73h1v2h-1zM17 14h1v1h-1zM72 61h1v1h-1zM11 39h1v1h-1zM93 77h2v2h-2zM57 16h1v1h-1zM90 58h1v1h-1zM72 62h1v1h-1zM56 46h2v2h-2zM49 59h2v1h-2zM50 55h1v1h-1zM60 18h2v1h-2zM27 2h2v1h-2zM8 35h1v1h-1zM88 20h2v1h-2zM78 18h1v2h-1zM40 14h2v1h-2zM1 47h1v1h-1zM83 58h1v1h-1zM45 69h1v2h-1zM14 22h1v1h-1zM14 25h1v1h-1zM0 47h1v2h-1zM68 31h2v1h-2zM80 77h1v1h-1zM0 20h2v2h-2zM46 14h1v1h-1zM44 90h2v2h-2zM57 21h1v2h-1zM9 27h2v1h-2zM18 40h1v1h-1zM67 27h1v2h-1zM82 53h2v1h-2zM15 57h1v2h-1zM8 60h1v1h-1zM28 21h1v1h-1zM68 0h2v1h-2zM100 5h1v1h-1zM74 58h1v1h-1zM73 61h2v1h-2zM33 37h2v1h-2zM49 24h1v1h-1zM26 75h2v2h-2zM64 13h1v1h-1zM99 51h1v1h-1zM50 64h1v2h-1zM50 12h1v2h-1zM63 26h1v1h-1zM81 36h2v2h-2zM89 79h1v2h-1zM1 85h1v1h-1zM14 5h1v2h-1zM99 12h1v1h-1zM32 84h1v1h-1zM58 1h1v1h-1zM67 22h1v2h-1zM42 50h2v1h-2zM45 84h1v1h-1zM37 28h1v1h-1zM39 22h2v1h-2zM74 17h2v1h-2zM17 53h2v1h-2zM17 67h1v2h-1zM11 96h1v2h-1zM100 31h2v2h-2zM16 79h2v2h-2zM75 63h1v2h-1zM53 54h1v1h-1zM45 64h2v1h-2zM43 58h2v1h-2zM89 41h2v2h-2zM26 4h1v1h-1zM28 37h1v1h-1zM89 14h2v1h-2zM83 44h1v1h-1zM14 56h1v2h-1zM91 38h1v2h-1zM83 31h2v1h-2zM14 2h1v1h-1zM69 44h1v2h-1zM70 49h2v2h-2zM50 4h2v1h-2zM1 15h1v2h-1zM56 1h1v1h-1zM30 26h1v2h-1zM100 46h1v1h-1zM3 13h2v1h-2zM98 46h1v1h-1zM93 52h1v1h-1zM30 91h1v1h-1zM92 5h1v2h-1zM74 65h1v1h-1zM44 36h1v1h-1zM62 3h1v1h-1zM41 20h2v1h-2zM62 23h2v1h-2zM90 22h1v1h-1zM62 80h1v2h-1zM87 30h1v1h-1zM98 41h1v2h-1zM92 2h1v1h-1zM50 62h1v1h-1zM83 51h1v2h-1zM65 95h1v1h-1zM97 29h1v1h-1zM55 37h2v2h-2zM87 26h2v2h-2zM35 36h1v2h-1zM42 73h2v2h-2zM10 77h1v1h-1zM3 46h1v2h-1zM50 5h2v2h-2zM56 81h2v1h-2zM94 2h1v2h-1zM90 21h2v2h-2zM97 64h1v2h-1zM10 22h1v1h-1zM22 81h2v1h-2zM35 71h1v1h-1zM39 6h1v2h-1zM22 35h1v2h-1zM89 55h1v2h-1zM60 17h1v2h-1zM4 41h2v1h-2zM1 20h1v1h-1zM43 82h1v1h-1zM60 31h1v2h-1zM72 96h1v1h-1zM97 12h1v1h-1zM97 17h1v1h-1zM83 23h1v1h-1zM98 6h1v1h-1zM64 47h1v2h-1zM0 43h2v2h-2zM81 63h1v1h-1zM72 58h1v1h-1zM48 65h2v1h-2zM55 14h1v2h-1zM51 23h2v1h-2zM1 43h1v1h-1zM10 80h1v2h-1zM10 26h2v2h-2zM85 87h2v2h-2zM91 25h1v1h-1zM37 50h2v1h-2zM54 15h1v1h-1zM90 62h1v1h-1zM4 17h1v2h-1zM3 28h1v2h-1zM18 77h1v1h-1zM38 18h2v1h-2zM51 61h2v1h-2zM82 19h2v2h-2zM39 26h1v1h-1zM5 77h1v2h-1zM59 12h2v1h-2zM32 96h1v2h-1zM61 65h1v2h-1zM33 68h1v1h-1zM22 8h1v2h-1zM26 73h2v1h-2zM60 83h2v1h-2zM29 33h1v1h-1zM18 39h1v2h-1zM26 84h2v1h-2zM27 79h2v1h-2zM13 9h1v1h-1zM7 12h1v2h-1zM35 68h1v1h-1zM100 89h2v2h-2zM41 59h1v1h-1zM42 25h2v2h-2zM64 41h2v1h-2zM83 85h1v2h-1zM54 34h1v1h-1zM94 77h1v2h-1zM51 12h1v1h-1zM60 2h1v2h-1zM26 94h2v1h-2zM26 39h1v2h-1zM95 12h2v1h-2zM78 13h1v1h-1zM23 93h2v1h-2zM66 73h1v1h-1zM43 43h1v1h-1zM14 15h2v2h-2zM99 2h1v2h-1zM29 88h2v1h-2zM60 59h1v1h-1zM26 56h1v2h-1zM60 29h2v1h-2zM19 9h2v1h-2zM11 93h2v2h-2zM53 7h2v1h-2zM42 53h2v1h-2zM27 72h1v1h-1zM32 45h2v1h-2zM31 35h1v1h-1zM26 71h2v2h-2zM92 11h2v1h-2zM25 33h2v1h-2zM95 33h2v1h-2zM55 47h1v1h-1zM57 71h2v1h-2zM61 90h1v1h-1zM8 92h1v2h-1zM84 57h1v2h-1zM18 69h2v2h-2zM0 78h1v2h-1zM83 63h2v1h-2zM43 23h1v1h-1zM43 57h1v2h-1zM39 3h2v2h-2zM63 23h2v1h-2zM12 87h1v2h-1zM4 68h1v1h-1zM67 5h1v1h-1zM12 58h1v1h-1zM48 26h2v1h-2zM90 80h1v1h-1zM48 35h1v1h-1zM62 8h1v2h-1zM98 24h1v2h-1zM5 72h1v1h-1zM92 21h2v1h-2zM61 19h1v2h-1zM56 49h1v1h-1zM46 59h2v1h-2z"/><path fill="#383830" d="M30 25h1v1h-1zM47 5h1v1h-1zM97 15h1v1h-1zM48 66h1v1h-1zM26 30h2v1h-2zM34 61h1v1h-1zM48 21h1v1h-1zM70 93h1v1h-1zM59 39h1v1h-1zM9 52h1v1h-1zM89 7h2v1h-2zM1 14h1v2h-1zM88 38h2v2h-2zM34 95h1v2h-1zM89 39h1v1h-1zM0 12h1v2h-1zM67 53h2v1h-2zM3 74h1v1h-1zM12 27h2v1h-2zM77 66h1v1h-1zM89 96h1v1h-1zM86 56h1v2h-1zM86 70h1v1h-1zM8 82h1v1h-1zM13 50h1v2h-1zM40 18h1v1h-1zM89 94h1v1h-1zM2 70h1v1h-1zM86 60h1v1h-1zM89 24h2v2h-2zM73 17h1v2h-1zM13 86h1v1h-1zM88 76h1v2h-1zM15 14h1v1h-1zM49 61h2v2h-2zM8 91h2v1h-2zM48 83h1v1h-1zM20 53h1v1h-1zM90 31h2v2h-2zM59 64h1v1h-1zM65 45h1v1h-1zM0 94h2v2h-2zM51 45h1v1h-1zM19 84h1v1h-1zM50 47h1v1h-1zM23 68h1v1h-1zM15 53h1v2h-1zM87 91h1v1h-1zM78 25h1v1h-1zM12 55h1v1h-1zM79 43h1v2h-1zM57 80h2v1h-2zM13 92h2v2h-2zM34 26h2v2h-2zM19 57h1v2h-1zM47 18h1v1h-1zM2 39h1v1h-1zM9 54h1v1h-1zM90 10h1v1h-1zM0 28h1v1h-1zM98 49h1v1h-1zM49 10h2v2h-2zM26 2h1v2h-1zM48 93h1v2h-1zM95 67h2v1h-2zM1 50h1v2h-1zM77 9h2v1h-2zM40 83h2v1h-2zM21 6h1v2h-1zM50 64h1v1h-1zM64 19h1v2h-1zM79 55h1v2h-1zM1 19h1v1h-1zM59 59h2v2h-2zM8 40h1v2h-1zM1 19h1v1h-1zM4 27h2v1h-2zM89 69h1v2h-1zM39 64h1v2h-1zM55 48h1v2h-1zM74 4h2v1h-2zM27 28h1v2h-1zM59 52h2v2h-2zM34 84h1v1h-1zM73 55h1v2h-1zM73 54h1v2h-1zM64 15h2v2h-2zM9 63h1v1h-1zM62 80h1v1h-1zM92 62h1v1h-1zM40 25h1v1h-1zM50 38h2v1h-2zM13 41h2v2h-2zM18 96h2v1h-2zM27 1h2v1h-2zM95 14h1v1h-1zM6 83h1v2h-1zM76 35h2v2h-2zM79 89h2v1h-2zM86 1h2v1h-2zM74 0h1v1h-1zM35 80h2v2h-2zM89 43h2v1h-2zM1 63h2v1h-2zM71 85h1v1h-1zM36 8h1v1h-1zM6 62h1v1h-1zM31 86h2v1h-2zM39 10h1v2h-1zM64 87h2v1h-2zM45 54h1v1h-1zM59 3h2v1h-2zM6 96h1v1h-1zM85 0h1v2h-1zM60 3h2v1h-2zM7 15h1v1h-1zM50 49h2v1h-2zM56 5h1v1h-1zM85 13h1v2h-1zM71 25h1v1h-1zM63 24h1v2h-1zM17 8h1v1h-1zM83 3h1v1h-1zM89 4h1v1h-1zM99 25h2v2h-2zM9 32h2v1h-2zM90 94h1v1h-1zM44 52h2v2h-2zM30 89h1v2h-1zM7 35h2v1h-2zM28 26h1v1h-1zM43 92h2v1h-2zM98 66h1v1h-1zM61 81h2v1h-2zM87 53h1v2h-1zM4 84h2v1h-2zM95 14h2v1h-2zM71 64h1v1h-1zM72 16h2v1h-2zM58 1h1v1h-1zM9 16h2v2h-2zM57 52h2v1h-2zM47 86h2v1h-2zM35 12h1v1h-1zM90 88h1v1h-1zM92 95h1v1h-1zM38 29h1v2h-1zM14 96h1v1h-1zM99 61h1v2h-1zM52 50h1v1h-1zM43 81h1v1h-1zM37 20h1v1h-1zM4 34h2v1h-2zM10 9h1v2h-1zM19 12h2v2h-2zM24 77h1v1h-1zM28 52h2v1h-2zM48 2h1v2h-1zM47 69h2v1h-2zM12 71h1v1h-1zM75 31h1v1h-1zM96 71h1v2h-1zM40 83h1v1h-1zM13 54h2v1h-2zM95 15h1v1h-1zM66 77h1v1h-1zM40 53h1v1h-1zM25 88h1v2h-1zM42 12h1v2h-1zM16 66h2v2h-2zM78 18h1v1h-1zM65 56h1v2h-1zM71 50h1v1h-1zM91 18h1v2h-1zM34 4h2v1h-2zM91 60h2v2h-2zM66 1h2v1h-2zM77 25h2v2h-2zM22 37h1v2h-1zM46 44h2v2h-2zM96 2h1v2h-1zM75 73h2v1h-2zM76 43h1v2h-1zM53 54h1v2h-1zM44 58h1v1h-1zM61 20h1v1h-1zM86 93h1v2h-1zM38 55h1v1h-1zM33 53h1v1h-1zM44 87h2v1h-2zM62 83h2v1h-2zM94 81h1v2h-1zM68 46h1v1h-1zM25 65h2v2h-2zM76 87h1v1h-1zM34 22h1v1h-1zM81 95h1v1h-1zM88 6h1v2h-1zM0 52h1v1h-1zM84 16h1v1h-1zM56 19h1v2h-1zM26 68h2v1h-2zM38 37h1v1h-1zM79 45h2v1h-2zM97 2h1v2h-1zM30 48h2v1h-2zM20 94h1v2h-1zM51 63h1v1h-1zM87 12h1v2h-1zM64 10h2v2h-2zM47 2h2v2h-2zM70 65h1v1h-1zM47 92h1v1h-1zM8 3h1v2h-1zM58 31h2v2h-2zM77 42h1v1h-1zM87 86h1v2h-1zM51 91h2v2h-2zM42 82h2v1h-2zM37 88h1v1h-1zM72 81h1v1h-1zM67 61h1v1h-1zM29 31h2v2h-2zM69 75h1v2h-1zM38 72h1v2h-1zM86 71h2v1h-2zM95 40h1v1h-1zM72 50h1v1h-1zM47 3h1v1h-1zM92 61h2v2h-2zM5 84h1v2h-1zM31 35h2v2h-2zM15 82h1v1h-1zM20 65h1v2h-1zM78 83h1v1h-1zM43 58h2v2h-2zM74 86h1v2h-1zM3 17h1v1h-1zM48 6h1v1h-1zM15 20h1v1h-1zM58 2h1v1h-1zM89 10h2v2h-2zM46 14h1v1h-1zM1 44h1v1h-1zM8 14h1v1h-1zM85 91h1v1h-1zM58 79h1v2h-1zM69 16h1v1h-1zM16 44h1v1h-1zM70 10h2v1h-2zM51 37h1v2h-1zM18 61h1v1h-1zM100 20h2v1h-2zM15 69h2v2h-2zM5 48h1v1h-1zM54 74h1v2h-1zM30 85h1v2h-1zM10 1h1v2h-1zM55 85h1v1h-1zM86 90h2v1h-2zM91 95h1v1h-1zM58 73h2v1h-2zM12 37h1v1h-1zM94 51h1v1h-1zM79 63h2v1h-2zM11 11h2v2h-2zM74 51h2v2h-2zM16 12h2v2h-2zM93 3h2v2h-2zM42 29h2v2h-2zM11 12h1v2h-1zM22 90h1v1h-1zM67 1h1v1h-1zM77 19h2v1h-2zM51 5h1v1h-1zM37 80h1v1h-1zM48 10h1v1h-1zM45 68h1v2h-1zM52 88h1v1h-1zM76 1h2v2h-2zM21 94h1v2h-1zM10 88h1v1h-1zM80 24h1v2h-1zM72 69h1v1h-1zM49 57h2v1h-2zM78 32h1v2h-1zM55 38h1v1h-1zM52 90h2v1h-2zM16 80h1v1h-1zM53 53h1v2h-1zM60 13h2v2h-2z"/><path fill="#1c2018" d="M41 71h2v1h-2zM8 84h1v2h-1zM38 76h1v1h-1zM72 21h1v1h-1zM77 74h1v1h-1zM81 94h1v2h-1zM90 1h1v1h-1zM87 89h2v1h-2zM16 11h1v2h-1zM49 62h1v2h-1zM98 96h2v1h-2zM50 90h2v1h-2zM46 85h1v1h-1zM79 87h2v1h-2zM91 18h2v2h-2zM88 42h1v2h-1zM14 11h1v2h-1zM94 83h1v1h-1zM60 22h1v1h-1zM89 2h1v2h-1zM100 67h1v1h-1zM15 64h1v1h-1zM38 5h2v1h-2zM66 45h2v2h-2zM75 45h1v1h-1zM72 84h2v2h-2zM34 15h2v1h-2zM48 13h1v1h-1zM94 86h2v2h-2zM84 16h1v1h-1zM70 63h1v1h-1zM93 17h1v1h-1zM31 94h2v2h-2zM5 77h1v1h-1zM62 25h1v2h-1zM6 86h1v1h-1zM27 36h1v1h-1zM42 46h2v1h-2zM90 57h1v1h-1zM5 16h1v1h-1zM8 61h1v2h-1zM94 50h1v2h-1zM65 9h1v1h-1zM49 71h1v1h-1zM65 58h2v2h-2zM22 32h1v2h-1zM83 32h2v2h-2zM31 10h1v1h-1zM69 88h1v2h-1zM15 2h1v1h-1zM15 46h1v1h-1zM54 61h2v1h-2zM49 53h2v1h-2zM47 6h2v1h-2zM70 91h1v2h-1zM28 50h1v2h-1zM98 91h1v2h-1zM37 20h1v1h-1zM47 10h2v1h-2zM57 33h2v1h-2zM82 7h2v1h-2zM44 53h1v1h-1zM88 73h1v1h-1zM100 76h1v1h-1zM27 44h1v1h-1zM22 70h2v1h-2zM78 52h1v1h-1zM69 12h2v1h-2zM1 3h1v1h-1zM93 22h1v1h-1zM23 38h1v1h-1zM44 61h2v2h-2zM15 24h2v1h-2zM59 95h1v1h-1zM76 95h1v1h-1zM75 52h1v2h-1zM59 72h1v1h-1zM91 77h2v1h-2zM9 33h1v2h-1zM54 21h2v1h-2zM23 34h1v1h-1zM57 45h1v1h-1zM93 0h1v1h-1zM57 62h2v1h-2zM45 63h1v1h-1zM39 24h1v2h-1zM87 19h2v1h-2zM17 44h1v2h-1zM51 12h1v1h-1zM42 76h1v1h-1zM89 26h2v1h-2zM23 30h2v1h-2zM74 38h1v2h-1zM22 83h1v1h-1zM82 61h1v1h-1zM84 23h2v2h-2zM95 9h1v1h-1zM89 57h1v1h-1zM43 23h2v2h-2zM64 45h1v2h-1zM9 72h1v1h-1zM8 20h1v1h-1zM73 30h2v2h-2zM39 51h2v1h-2zM30 63h1v2h-1zM76 94h2v1h-2zM87 87h2v1h-2zM29 52h2v2h-2zM36 5h1v1h-1zM83 31h1v1h-1zM35 10h1v1h-1zM68 59h1v2h-1zM98 69h1v1h-1zM34 84h1v2h-1zM7 74h1v1h-1zM29 80h1v1h-1zM23 87h2v1h-2zM36 18h1v1h-1zM47 5h1v1h-1zM65 91h2v2h-2zM91 44h1v1h-1zM72 64h2v2h-2zM67 6h2v1h-2zM86 74h2v1h-2zM54 45h1v1h-1zM93 23h2v2h-2zM10 19h1v2h-1zM41 56h1v2h-1zM43 6h2v2h-2zM94 93h1v1h-1zM70 65h1v1h-1zM73 54h2v1h-2zM16 25h2v1h-2zM64 27h1v1h-1zM52 28h2v1h-2zM26 80h1v2h-1zM4 2h2v1h-2zM2 1h2v2h-2zM58 25h1v1h-1zM78 60h2v2h-2zM4 41h2v2h-2zM16 96h1v1h-1zM80 67h1v1h-1zM66 41h2v1h-2zM83 21h1v1h-1zM76 20h1v1h-1zM47 79h1v1h-1zM45 39h2v1h-2zM93 54h1v2h-1zM47 32h2v1h-2zM62 22h1v2h-1zM13 4h1v1h-1zM12 69h1v1h-1zM59 72h2v1h-2zM93 11h1v1h-1zM33 11h1v1h-1zM80 87h1v1h-1zM26 43h2v2h-2zM47 72h1v2h-1zM68 9h1v1h-1zM1 20h1v1h-1zM43 86h1v1h-1zM58 88h2v1h-2zM35 64h2v1h-2zM8 78h1v2h-1zM58 75h1v2h-1zM42 69h1v1h-1zM32 51h1v2h-1zM45 96h1v1h-1zM79 28h1v2h-1zM49 9h1v1h-1zM15 91h2v2h-2zM89 33h2v1h-2zM81 29h1v1h-1zM46 92h2v2h-2zM42 64h1v1h-1zM63 80h1v1h-1zM12 56h1v2h-1zM39 64h1v1h-1zM60 13h2v1h-2zM78 84h1v1h-1zM75 38h2v1h-2zM11 56h1v1h-1zM69 84h1v2h-1zM62 6h2v1h-2zM72 11h2v1h-2zM83 42h1v1h-1zM68 77h1v1h-1zM11 22h2v2h-2zM53 24h1v1h-1zM5 18h1v1h-1zM88 60h1v1h-1zM52 5h2v1h-2zM41 84h2v1h-2zM90 59h2v2h-2zM54 47h2v1h-2zM15 95h1v2h-1zM67 76h1v2h-1zM67 6h2v1h-2zM20 12h2v1h-2zM28 96h2v1h-2zM0 9h1v2h-1zM85 39h1v2h-1zM66 39h2v1h-2zM92 93h1v1h-1zM31 74h1v1h-1zM71 77h2v1h-2zM66 85h1v1h-1zM13 75h2v1h-2zM12 15h1v1h-1zM11 42h1v2h-1zM41 2h1v1h-1zM39 64h2v2h-2zM33 18h2v1h-2zM1 37h1v1h-1zM61 56h1v2h-1zM72 24h1v1h-1zM41 89h1v2h-1zM92 44h2v2h-2zM58 79h1v1h-1zM55 8h1v1h-1zM8 22h1v2h-1zM64 19h1v1h-1zM13 44h2v1h-2zM84 90h2v1h-2zM11 84h2v1h-2zM72 73h2v2h-2zM13 41h2v1h-2zM82 40h2v1h-2zM94 65h2v1h-2zM19 18h2v1h-2zM85 33h1v2h-1zM36 68h1v1h-1zM56 76h1v2h-1zM3 56h1v1h-1zM52 66h2v1h-2zM73 82h1v1h-1zM41 85h1v1h-1zM72 24h2v2h-2z"/></pattern><pattern id="spk5" width="89" height="103" patternUnits="userSpaceOnUse"><path fill="#e8ecf0" d="M62 40h1v1h-1zM20 19h1v2h-1zM14 84h1v2h-1zM74 73h1v2h-1zM62 85h2v2h-2zM38 86h2v1h-2zM85 25h2v2h-2zM33 57h2v2h-2zM36 34h1v2h-1zM8 19h1v1h-1zM9 19h2v2h-2zM10 23h1v1h-1zM55 101h1v1h-1zM33 18h1v1h-1zM36 96h1v1h-1zM55 10h2v1h-2zM19 75h1v1h-1zM20 62h1v2h-1zM88 16h2v2h-2zM35 91h1v2h-1zM76 77h1v2h-1zM26 18h2v1h-2zM71 20h2v2h-2zM13 66h1v1h-1zM71 76h2v1h-2zM56 48h1v1h-1zM58 102h1v1h-1zM60 22h1v1h-1zM30 58h2v2h-2zM8 50h2v1h-2zM55 71h2v1h-2zM17 101h1v2h-1zM38 26h1v1h-1zM75 61h1v2h-1zM88 75h2v2h-2zM86 99h1v2h-1zM42 54h1v1h-1zM25 61h2v1h-2zM49 99h1v2h-1zM63 29h2v1h-2zM4 35h2v2h-2zM51 64h1v1h-1zM8 101h1v2h-1zM76 66h2v2h-2zM55 76h1v2h-1zM15 48h2v1h-2zM23 15h2v1h-2zM12 95h2v1h-2zM84 72h1v1h-1zM26 69h1v1h-1zM73 94h2v2h-2zM56 19h2v2h-2zM55 101h2v2h-2zM76 60h1v1h-1zM55 92h2v2h-2zM11 78h1v2h-1zM2 25h1v1h-1zM26 59h1v2h-1zM70 61h1v2h-1zM49 35h2v1h-2zM54 70h2v1h-2zM65 38h2v2h-2zM53 72h2v2h-2zM20 76h2v2h-2zM6 0h2v1h-2zM30 59h1v1h-1zM10 7h1v1h-1zM50 24h2v1h-2zM11 62h2v1h-2zM43 102h2v2h-2zM75 78h1v2h-1zM58 92h2v2h-2zM28 57h2v2h-2zM6 9h2v2h-2zM83 25h1v2h-1zM42 82h1v2h-1zM26 93h1v2h-1zM22 14h2v2h-2zM69 32h1v1h-1zM3 43h2v2h-2zM41 82h2v1h-2zM68 54h2v1h-2zM19 35h2v2h-2zM77 76h1v2h-1zM12 33h2v2h-2zM73 88h2v2h-2zM11 84h2v2h-2zM17 8h1v1h-1zM5 29h1v1h-1zM14 73h1v1h-1zM35 55h1v2h-1zM55 59h1v1h-1zM84 66h2v2h-2zM82 75h2v1h-2zM27 101h2v2h-2zM11 64h1v2h-1zM71 89h1v1h-1zM22 87h2v1h-2zM51 37h2v2h-2zM33 42h1v1h-1zM81 11h1v2h-1zM21 87h2v2h-2zM4 97h1v1h-1zM10 10h1v2h-1zM60 5h2v2h-2zM31 48h2v2h-2zM8 7h2v1h-2zM47 92h2v1h-2zM45 96h2v2h-2zM73 67h1v1h-1zM17 59h1v2h-1zM28 18h1v1h-1zM17 51h2v1h-2zM64 63h2v2h-2zM59 64h2v1h-2zM77 9h1v2h-1zM29 82h2v1h-2zM13 85h2v2h-2zM17 84h1v2h-1zM1 71h2v2h-2zM19 30h2v2h-2zM3 21h2v1h-2zM80 77h1v2h-1zM56 82h2v1h-2zM47 28h2v2h-2zM25 25h2v1h-2zM86 13h1v1h-1zM63 69h2v2h-2zM63 85h1v1h-1zM22 69h2v2h-2zM75 69h2v2h-2zM72 19h1v1h-1zM40 66h1v2h-1zM82 23h1v2h-1zM79 42h2v1h-2zM87 36h2v1h-2zM24 39h1v1h-1zM61 76h2v1h-2zM13 41h2v1h-2zM54 57h2v1h-2zM7 77h1v2h-1zM17 42h2v2h-2zM42 3h1v1h-1zM37 82h2v1h-2zM13 94h1v1h-1zM79 11h1v2h-1zM6 70h1v2h-1zM71 39h2v2h-2zM20 50h2v1h-2zM30 81h2v1h-2zM49 82h1v2h-1zM21 99h2v1h-2zM6 81h1v1h-1zM59 96h1v1h-1zM77 98h1v1h-1zM76 36h2v1h-2zM76 44h1v2h-1zM16 27h1v2h-1zM19 3h1v2h-1zM29 71h2v2h-2zM21 76h1v2h-1zM36 4h1v1h-1zM0 14h1v1h-1zM65 15h1v1h-1zM12 93h2v2h-2zM6 59h1v2h-1zM38 25h2v1h-2zM54 76h2v2h-2zM30 17h2v1h-2zM12 39h2v1h-2zM72 14h2v1h-2zM33 21h2v1h-2zM21 13h1v2h-1zM20 84h1v2h-1zM87 89h2v1h-2zM47 56h1v1h-1zM5 75h2v1h-2zM33 101h1v2h-1zM67 56h1v2h-1zM79 8h1v2h-1zM81 20h1v2h-1zM29 27h2v2h-2zM70 18h1v2h-1z"/><path fill="#d8dce0" d="M55 23h2v1h-2zM19 82h2v1h-2zM52 40h2v1h-2zM11 40h2v1h-2zM70 80h2v2h-2zM85 40h1v1h-1zM78 15h1v1h-1zM36 93h1v2h-1zM64 0h1v1h-1zM24 23h2v1h-2zM3 17h2v2h-2zM51 46h1v2h-1zM20 38h2v1h-2zM8 41h2v2h-2zM2 57h2v2h-2zM35 71h2v2h-2zM16 41h1v1h-1zM34 8h2v2h-2zM40 62h2v1h-2zM72 96h1v1h-1zM63 8h1v1h-1zM69 7h2v2h-2zM70 11h1v2h-1zM14 97h2v1h-2zM7 82h1v1h-1zM61 5h1v1h-1zM8 5h1v1h-1zM71 47h2v1h-2zM3 57h2v1h-2zM14 5h2v1h-2zM38 46h2v1h-2zM1 27h1v2h-1zM72 61h1v1h-1zM63 55h2v2h-2zM3 85h2v1h-2zM44 95h2v1h-2zM81 82h2v1h-2zM0 101h1v2h-1zM2 3h2v1h-2zM32 69h1v1h-1zM3 20h1v1h-1zM71 5h1v1h-1zM85 34h1v2h-1zM40 31h2v1h-2zM84 60h2v2h-2zM12 22h2v1h-2zM78 101h2v1h-2zM24 87h2v2h-2zM81 31h1v2h-1zM55 49h2v1h-2zM8 35h1v2h-1zM12 31h2v1h-2zM58 78h1v1h-1zM55 74h2v2h-2zM87 48h1v2h-1zM46 33h2v1h-2zM46 6h1v1h-1zM18 55h2v1h-2zM52 39h1v1h-1zM70 60h2v1h-2zM70 97h2v1h-2zM64 7h2v1h-2zM6 60h1v1h-1zM77 47h2v2h-2zM58 22h1v1h-1zM67 52h1v2h-1zM17 83h2v2h-2zM55 97h1v1h-1zM48 42h2v2h-2zM5 38h1v1h-1zM53 72h1v2h-1zM67 19h2v1h-2zM75 38h2v1h-2zM7 55h2v2h-2zM12 10h1v1h-1zM69 54h2v1h-2zM53 30h2v2h-2zM55 52h1v2h-1zM60 83h1v2h-1zM4 102h2v2h-2zM17 30h2v2h-2zM13 61h1v1h-1zM0 67h1v1h-1zM74 27h2v1h-2zM36 39h1v1h-1zM11 45h1v2h-1zM65 99h2v1h-2zM24 79h2v1h-2zM0 40h2v1h-2zM23 73h1v1h-1zM52 74h2v2h-2zM23 82h1v1h-1zM1 52h1v2h-1zM28 56h1v1h-1zM5 43h2v2h-2zM17 29h2v1h-2zM56 91h1v1h-1zM80 73h1v2h-1zM22 20h1v1h-1zM80 96h2v2h-2zM66 91h2v2h-2zM33 77h1v1h-1zM74 14h1v1h-1zM17 6h1v1h-1zM54 62h1v1h-1zM66 98h1v1h-1zM45 100h1v1h-1zM20 2h1v2h-1zM5 49h2v2h-2zM69 87h1v2h-1zM37 87h1v2h-1zM26 27h1v2h-1zM11 80h1v2h-1zM17 96h2v1h-2zM20 27h1v1h-1zM11 97h1v2h-1zM87 58h1v2h-1zM33 37h1v1h-1zM38 70h1v2h-1zM67 17h2v1h-2zM2 98h2v1h-2zM53 3h2v1h-2zM48 44h2v1h-2zM2 50h2v1h-2zM16 40h2v1h-2zM10 59h1v1h-1zM48 14h1v2h-1zM37 39h2v1h-2zM0 48h1v1h-1zM23 28h2v2h-2zM79 77h2v1h-2zM51 57h2v2h-2zM73 55h2v1h-2zM73 34h2v1h-2zM21 33h1v2h-1zM68 97h2v2h-2zM77 100h2v1h-2zM27 53h2v1h-2zM67 71h2v2h-2zM56 35h2v1h-2zM5 19h2v2h-2zM75 82h1v1h-1zM66 90h1v2h-1zM87 27h1v2h-1zM62 92h2v2h-2zM77 74h2v1h-2zM73 22h2v1h-2zM41 17h1v1h-1zM50 93h1v1h-1zM87 59h2v2h-2zM88 94h2v2h-2zM25 2h2v2h-2zM58 8h2v1h-2zM48 51h1v1h-1zM5 15h1v2h-1zM43 84h2v1h-2zM83 85h2v1h-2zM1 73h2v1h-2zM12 29h2v1h-2zM55 54h1v2h-1zM40 33h1v1h-1zM51 35h1v2h-1zM5 52h2v1h-2zM25 3h1v2h-1zM26 15h1v2h-1zM85 102h1v2h-1zM67 63h1v1h-1zM40 60h1v1h-1zM45 13h2v2h-2zM17 33h2v2h-2zM12 54h2v1h-2zM56 34h2v1h-2z"/><path fill="#f0f0f0" d="M10 2h1v1h-1zM40 74h2v2h-2zM75 53h1v2h-1zM40 21h1v1h-1zM34 95h2v1h-2zM42 46h2v2h-2zM13 31h1v1h-1zM81 36h1v2h-1zM44 94h1v1h-1zM33 93h2v2h-2zM2 50h2v1h-2zM62 1h2v1h-2zM16 67h2v2h-2zM62 72h2v1h-2zM60 31h1v1h-1zM45 79h2v1h-2zM54 89h1v2h-1zM83 82h2v1h-2zM58 36h1v1h-1zM22 41h1v2h-1zM29 74h2v1h-2zM27 19h1v2h-1zM77 32h2v1h-2zM72 32h1v1h-1zM6 1h2v1h-2zM47 27h1v2h-1zM9 35h2v1h-2zM4 15h2v1h-2zM1 73h1v1h-1zM36 92h2v1h-2zM60 69h1v2h-1zM70 69h1v2h-1zM11 77h2v1h-2zM0 32h1v1h-1zM23 99h1v1h-1zM63 40h2v1h-2zM80 12h2v2h-2zM30 77h2v1h-2zM38 17h2v1h-2zM7 96h2v1h-2zM71 10h1v1h-1zM35 50h2v2h-2zM66 78h1v2h-1zM34 36h1v2h-1zM30 72h1v2h-1zM24 42h2v2h-2zM76 54h1v1h-1zM59 74h1v1h-1zM43 18h2v1h-2zM74 35h2v1h-2zM35 13h1v1h-1zM27 40h2v2h-2zM55 32h2v1h-2zM67 32h2v1h-2zM11 79h1v1h-1zM68 23h1v1h-1zM59 82h2v2h-2zM4 26h1v2h-1zM18 2h1v2h-1zM62 51h2v2h-2zM31 18h1v2h-1zM47 3h2v2h-2zM78 58h2v2h-2zM47 60h2v2h-2zM2 55h2v2h-2zM31 20h2v1h-2zM53 60h1v2h-1zM30 36h1v1h-1zM11 5h1v2h-1zM57 16h1v1h-1zM23 53h1v1h-1zM29 85h2v2h-2zM12 16h2v1h-2zM15 0h1v1h-1zM85 78h2v1h-2zM88 68h1v2h-1zM4 100h2v1h-2zM67 46h1v2h-1zM38 52h1v1h-1zM71 101h1v1h-1zM87 50h1v1h-1zM57 18h1v1h-1zM14 36h1v2h-1zM8 75h2v2h-2zM82 28h2v1h-2zM65 82h1v1h-1zM47 66h2v1h-2zM8 72h1v1h-1zM60 79h1v1h-1zM27 47h1v1h-1zM1 75h2v1h-2zM43 30h1v1h-1zM25 26h1v1h-1zM17 4h1v1h-1zM13 55h1v1h-1zM22 78h2v2h-2zM70 10h2v1h-2zM3 92h1v2h-1zM48 86h1v2h-1zM5 76h1v1h-1zM19 102h2v1h-2zM47 84h1v2h-1zM50 32h1v1h-1zM24 67h1v2h-1zM73 82h2v2h-2zM23 51h1v2h-1zM47 30h1v2h-1zM42 60h2v2h-2zM44 17h1v1h-1zM9 11h2v1h-2zM16 66h2v1h-2zM12 22h1v2h-1zM77 6h2v1h-2zM73 79h2v2h-2zM31 18h2v1h-2zM24 13h1v1h-1zM39 71h1v1h-1zM40 73h2v1h-2zM67 7h2v1h-2zM52 85h1v1h-1zM49 6h1v1h-1zM68 23h1v1h-1zM30 51h1v1h-1zM11 50h2v1h-2zM88 32h2v1h-2zM77 43h1v1h-1zM22 99h2v2h-2zM64 13h2v2h-2zM25 66h2v1h-2zM79 34h1v1h-1zM63 90h2v2h-2zM69 80h2v2h-2zM16 82h1v2h-1zM8 26h1v2h-1zM23 87h1v2h-1zM16 46h1v2h-1zM16 25h1v1h-1zM11 66h1v2h-1zM62 20h1v2h-1zM23 44h2v2h-2zM17 48h1v1h-1zM72 83h1v1h-1zM70 18h1v1h-1zM83 46h1v1h-1zM3 86h1v1h-1zM79 95h1v1h-1zM73 24h2v2h-2zM36 22h1v1h-1zM2 101h2v1h-2zM41 69h2v2h-2zM16 16h2v1h-2zM75 86h2v2h-2zM18 75h1v1h-1zM15 32h1v1h-1zM0 40h1v1h-1zM34 31h1v1h-1zM69 102h1v1h-1zM3 9h2v2h-2zM74 85h2v1h-2zM82 31h1v2h-1zM37 81h1v2h-1zM78 48h2v1h-2zM43 23h1v1h-1zM41 71h1v2h-1zM2 21h2v2h-2zM48 72h2v1h-2z"/><path fill="#c8d0d8" d="M5 17h2v2h-2zM61 21h1v2h-1zM24 65h2v1h-2zM2 38h2v1h-2zM48 49h1v2h-1zM16 44h2v1h-2zM10 49h2v1h-2zM25 90h2v1h-2zM61 47h2v2h-2zM21 5h2v2h-2zM59 41h2v2h-2zM57 19h1v2h-1zM43 25h1v2h-1zM62 77h2v2h-2zM30 66h2v1h-2zM26 41h1v2h-1zM24 67h2v1h-2zM59 99h1v2h-1zM61 47h1v2h-1zM70 3h2v2h-2zM46 45h2v1h-2zM43 96h1v2h-1zM19 17h2v2h-2zM10 74h2v1h-2zM33 50h1v2h-1zM63 92h2v2h-2zM50 77h1v2h-1zM36 46h1v2h-1zM52 22h2v2h-2zM44 98h2v1h-2zM86 69h2v2h-2zM9 88h2v1h-2zM57 15h2v2h-2zM1 89h2v2h-2zM60 102h2v1h-2zM48 4h2v1h-2zM15 89h2v1h-2zM21 17h1v1h-1zM88 47h1v2h-1zM8 11h2v2h-2zM57 84h2v2h-2zM85 16h1v1h-1zM65 9h1v1h-1zM80 46h1v2h-1zM50 3h1v2h-1zM57 77h1v1h-1zM38 68h2v2h-2zM65 62h2v1h-2zM82 63h2v1h-2zM6 54h2v1h-2zM43 79h2v2h-2zM74 40h1v1h-1zM29 12h1v2h-1zM69 97h2v1h-2zM31 91h2v1h-2zM44 46h2v1h-2zM28 74h1v1h-1zM34 100h1v1h-1zM81 77h1v1h-1zM14 77h2v2h-2zM38 47h1v2h-1zM25 96h1v1h-1zM6 44h2v2h-2zM47 6h1v2h-1zM8 20h1v2h-1zM8 28h2v1h-2zM71 28h1v1h-1zM19 12h2v2h-2zM15 39h1v2h-1zM50 75h1v2h-1zM0 24h1v2h-1zM28 88h2v1h-2zM43 85h1v2h-1zM45 65h2v2h-2zM42 88h2v1h-2zM63 59h2v2h-2zM23 0h1v2h-1zM80 101h1v2h-1zM57 30h2v1h-2zM64 93h2v1h-2zM85 32h2v1h-2zM64 98h2v1h-2zM84 99h2v2h-2zM45 2h2v2h-2zM12 76h1v1h-1zM7 38h1v2h-1zM51 96h1v2h-1zM61 5h2v2h-2zM21 23h1v1h-1zM24 63h1v1h-1zM41 52h2v2h-2zM84 25h1v1h-1zM45 24h1v2h-1zM58 67h2v1h-2zM61 49h2v1h-2zM53 72h2v1h-2zM24 23h1v2h-1zM32 89h2v1h-2zM85 77h2v1h-2zM68 42h2v1h-2zM76 68h1v1h-1zM88 35h1v1h-1zM54 89h2v2h-2zM88 8h1v2h-1zM20 27h1v1h-1zM76 68h1v2h-1zM54 92h1v2h-1zM85 73h2v2h-2zM36 64h1v2h-1zM46 92h2v1h-2zM48 72h1v1h-1zM5 80h2v1h-2zM60 63h1v1h-1zM31 19h1v1h-1zM39 99h2v1h-2zM2 85h1v2h-1zM67 32h2v1h-2zM16 76h1v1h-1zM69 37h1v1h-1zM57 35h2v2h-2zM80 2h2v1h-2zM88 12h1v1h-1zM45 6h2v1h-2zM73 13h2v2h-2zM36 73h1v1h-1zM60 19h2v1h-2zM18 51h2v1h-2zM0 85h2v2h-2zM42 3h1v1h-1zM63 56h2v2h-2zM20 7h2v1h-2zM2 71h1v2h-1zM65 85h2v1h-2zM74 41h1v1h-1zM37 65h1v1h-1zM35 36h1v1h-1zM26 87h2v1h-2zM60 68h1v1h-1zM66 53h1v2h-1zM87 77h2v1h-2zM43 29h2v1h-2zM58 61h1v2h-1zM69 57h1v2h-1zM73 17h2v2h-2zM76 5h2v1h-2zM44 57h2v1h-2zM82 68h2v1h-2zM34 3h2v2h-2zM69 73h1v2h-1zM43 49h1v1h-1zM3 82h2v2h-2zM71 41h1v2h-1zM4 11h2v1h-2zM39 11h2v2h-2zM11 4h2v1h-2zM16 38h1v1h-1zM79 91h2v1h-2zM88 28h2v2h-2zM3 68h1v2h-1zM33 95h2v2h-2zM18 79h1v2h-1zM84 70h1v1h-1zM82 60h1v1h-1zM23 22h1v1h-1zM63 78h1v1h-1zM63 92h1v1h-1zM63 11h1v1h-1zM26 20h1v2h-1zM26 68h1v1h-1zM75 24h2v2h-2zM54 15h2v1h-2zM2 78h2v2h-2zM72 98h2v2h-2zM39 79h1v2h-1zM54 22h1v2h-1zM13 17h2v2h-2zM52 70h1v1h-1zM6 36h2v2h-2zM44 68h2v2h-2zM56 32h2v2h-2zM7 34h2v2h-2zM14 6h2v2h-2zM59 75h2v1h-2zM48 77h2v1h-2zM48 12h1v1h-1zM68 17h1v1h-1zM3 33h1v2h-1zM85 54h1v2h-1zM86 88h1v2h-1zM78 54h1v2h-1zM65 39h1v1h-1zM1 19h2v1h-2zM18 20h2v1h-2zM51 68h1v1h-1zM37 35h1v2h-1zM69 93h1v2h-1zM41 79h1v2h-1z"/><path fill="#e0d8c8" d="M27 43h1v2h-1zM49 72h1v2h-1zM27 39h1v2h-1zM22 37h2v1h-2zM68 79h2v1h-2zM47 8h1v1h-1zM45 77h2v1h-2zM70 4h1v1h-1zM1 92h1v2h-1zM50 81h2v2h-2zM8 63h2v1h-2zM40 75h2v1h-2zM40 69h1v1h-1zM80 39h2v1h-2zM65 12h2v1h-2zM41 10h2v2h-2zM35 58h2v1h-2zM2 15h1v2h-1zM81 85h2v1h-2zM37 63h1v2h-1zM25 97h2v1h-2zM78 13h1v1h-1zM88 57h1v1h-1zM45 82h2v2h-2zM87 21h1v2h-1zM80 18h2v1h-2zM53 14h1v1h-1zM62 14h2v2h-2zM50 66h2v1h-2zM47 26h2v2h-2zM39 70h2v1h-2zM52 12h1v1h-1zM64 23h2v2h-2zM49 102h1v2h-1zM37 20h1v2h-1zM38 23h1v2h-1zM63 46h2v1h-2zM7 65h1v1h-1zM43 11h2v2h-2zM61 91h2v2h-2zM24 32h2v2h-2zM30 29h1v2h-1zM45 30h1v1h-1zM63 64h2v2h-2zM26 47h1v1h-1zM57 91h1v2h-1zM21 98h2v1h-2zM17 0h2v2h-2zM62 86h2v2h-2zM81 96h1v2h-1zM9 76h2v2h-2zM45 42h1v2h-1zM21 1h1v1h-1zM34 7h1v1h-1zM18 97h1v1h-1zM14 10h2v2h-2zM17 37h2v2h-2zM12 4h1v1h-1zM13 34h2v1h-2zM36 17h1v2h-1zM33 20h1v2h-1zM17 41h2v2h-2zM42 87h2v2h-2zM36 42h1v2h-1zM59 77h1v2h-1zM49 71h2v1h-2zM20 18h2v1h-2zM4 57h1v1h-1zM63 70h2v1h-2zM41 23h1v1h-1zM6 35h2v1h-2zM69 13h2v1h-2zM27 93h1v1h-1zM30 52h1v2h-1zM27 78h2v1h-2zM37 44h1v2h-1zM78 15h2v2h-2zM63 0h1v2h-1zM24 95h2v1h-2zM22 54h1v2h-1zM82 62h2v1h-2zM32 31h1v2h-1zM0 19h1v2h-1zM71 2h1v1h-1zM59 52h1v1h-1zM58 7h2v1h-2zM0 21h2v1h-2zM68 14h2v2h-2zM30 6h1v1h-1zM3 10h2v1h-2zM56 100h2v1h-2zM33 20h1v1h-1zM21 100h2v1h-2zM26 30h2v2h-2zM80 93h2v1h-2zM79 86h2v1h-2zM39 52h2v2h-2zM76 58h2v1h-2zM6 77h1v1h-1zM52 4h1v1h-1zM23 26h1v1h-1zM13 42h2v1h-2zM76 15h2v1h-2zM87 27h2v2h-2zM67 61h2v1h-2zM50 54h2v1h-2zM2 5h1v1h-1zM26 46h2v2h-2zM71 82h1v1h-1zM43 38h1v2h-1zM32 74h1v2h-1zM70 82h2v1h-2zM37 18h2v2h-2zM18 99h2v2h-2zM71 7h2v1h-2zM85 84h2v1h-2zM44 52h1v1h-1zM78 55h2v1h-2zM84 34h1v2h-1zM86 87h1v1h-1zM24 99h2v2h-2zM8 7h1v2h-1zM25 9h1v1h-1zM58 52h1v1h-1zM44 51h1v2h-1zM24 27h2v1h-2zM1 20h1v2h-1zM29 69h1v1h-1zM16 4h2v1h-2zM88 93h1v2h-1zM11 45h1v1h-1zM69 98h1v1h-1zM57 35h2v1h-2zM8 92h2v2h-2zM68 63h2v1h-2zM86 15h1v2h-1zM32 23h2v2h-2zM50 25h1v2h-1zM37 23h1v1h-1zM75 28h1v2h-1zM27 93h1v2h-1zM49 78h1v2h-1zM34 46h1v1h-1zM41 98h2v2h-2zM40 100h2v1h-2zM61 4h1v2h-1zM36 66h2v2h-2zM26 8h1v1h-1zM21 12h2v2h-2zM9 81h2v1h-2zM73 42h2v2h-2zM7 42h1v2h-1zM4 5h2v2h-2zM73 11h1v1h-1zM38 25h2v2h-2zM24 7h1v1h-1zM53 60h1v1h-1zM8 94h1v1h-1zM35 24h2v2h-2zM54 66h1v1h-1zM7 59h1v1h-1zM19 10h2v1h-2zM74 30h1v2h-1zM22 5h2v1h-2zM38 82h2v2h-2zM36 6h2v2h-2zM55 23h1v2h-1zM27 59h1v2h-1zM10 56h1v2h-1zM45 66h1v2h-1zM48 72h1v2h-1zM51 11h1v1h-1zM63 86h2v1h-2zM45 54h1v2h-1zM35 69h1v1h-1zM73 101h1v2h-1zM27 14h1v2h-1zM63 18h2v1h-2zM8 60h2v1h-2zM16 89h2v1h-2zM33 69h2v1h-2zM50 89h2v2h-2z"/></pattern><pattern id="spk3" width="71" height="67" patternUnits="userSpaceOnUse"><path fill="#6a7a58" d="M43 33h2v1h-2zM23 53h2v2h-2zM59 43h2v2h-2zM37 21h3v2h-3zM29 42h2v2h-2zM46 33h2v3h-2zM40 61h2v3h-2zM13 19h1v3h-1zM29 22h1v1h-1zM52 40h1v1h-1zM48 56h1v2h-1zM54 23h2v3h-2zM45 58h2v3h-2zM44 37h2v3h-2zM18 16h2v3h-2zM53 9h3v2h-3zM7 11h1v2h-1zM9 55h2v1h-2zM9 4h2v2h-2zM69 6h2v2h-2zM46 57h2v2h-2zM3 13h2v1h-2zM34 10h2v1h-2zM43 4h3v2h-3zM3 29h1v1h-1zM5 64h2v1h-2zM0 52h2v2h-2zM59 59h1v2h-1zM46 12h3v1h-3zM1 16h1v2h-1zM13 31h2v2h-2zM5 20h2v1h-2zM47 53h3v3h-3zM49 29h3v2h-3zM65 50h2v2h-2zM43 41h2v2h-2zM33 25h1v2h-1zM10 46h3v3h-3zM23 49h1v2h-1zM58 28h1v1h-1zM24 24h3v1h-3zM23 40h3v2h-3zM16 29h3v3h-3zM20 25h3v1h-3zM62 35h1v2h-1zM62 40h2v2h-2zM11 54h2v1h-2zM43 42h3v2h-3zM70 63h2v2h-2zM21 55h2v1h-2zM4 66h3v2h-3zM15 18h1v2h-1zM4 32h2v1h-2zM48 28h2v2h-2zM37 28h2v2h-2zM28 34h3v2h-3zM67 21h2v2h-2zM7 22h1v3h-1zM16 16h1v2h-1zM6 3h2v2h-2zM43 60h1v3h-1zM57 53h3v1h-3zM4 38h2v2h-2zM25 17h2v2h-2zM3 27h2v2h-2zM16 37h1v2h-1zM52 13h2v2h-2zM9 23h1v2h-1zM23 5h3v3h-3zM42 33h1v2h-1zM63 51h2v1h-2zM39 39h2v1h-2zM23 2h2v1h-2zM36 20h2v2h-2zM67 12h2v2h-2zM13 31h3v2h-3zM35 9h2v2h-2z"/><path fill="#8a8470" d="M38 17h2v2h-2zM6 41h3v2h-3zM57 39h2v2h-2zM64 3h3v2h-3zM47 33h3v3h-3zM13 50h2v2h-2zM6 1h3v2h-3zM15 22h2v2h-2zM63 16h2v1h-2zM54 9h2v1h-2zM32 22h2v2h-2zM28 57h2v2h-2zM65 6h2v2h-2zM15 5h1v1h-1zM25 2h3v3h-3zM70 18h3v3h-3zM58 48h1v2h-1zM38 10h1v2h-1zM51 17h3v2h-3zM2 6h1v3h-1zM33 57h2v1h-2zM23 8h3v2h-3zM29 48h2v3h-2zM56 49h1v2h-1zM63 12h3v2h-3zM43 22h2v2h-2zM44 1h1v3h-1zM5 53h1v2h-1zM21 50h1v2h-1zM56 14h1v2h-1zM66 5h1v2h-1zM61 20h1v1h-1zM35 19h2v2h-2zM6 52h2v3h-2zM4 56h3v3h-3zM24 16h2v3h-2zM55 15h1v2h-1zM39 10h3v2h-3zM7 46h2v2h-2zM26 35h2v1h-2zM48 50h2v3h-2zM14 38h2v2h-2zM68 15h3v2h-3zM63 6h1v3h-1zM35 7h1v2h-1zM66 5h1v1h-1zM21 4h2v1h-2zM47 45h2v2h-2zM46 60h2v2h-2zM56 33h2v2h-2zM19 44h2v2h-2zM45 51h1v3h-1zM41 19h1v1h-1zM63 12h2v1h-2zM21 54h3v3h-3zM67 60h3v2h-3zM11 48h2v2h-2zM3 65h2v2h-2zM61 0h1v1h-1zM56 10h1v2h-1zM52 26h3v2h-3zM61 27h2v1h-2zM20 13h1v3h-1zM61 41h2v2h-2zM49 28h1v1h-1zM26 13h1v2h-1zM36 8h3v2h-3zM19 29h2v1h-2zM23 57h2v2h-2zM13 27h2v1h-2zM47 26h1v1h-1zM29 33h3v2h-3zM2 11h3v2h-3zM49 46h2v3h-2zM60 18h2v1h-2zM50 36h2v2h-2zM40 14h3v1h-3zM32 31h2v3h-2zM20 2h2v2h-2zM41 33h3v2h-3zM23 50h3v2h-3zM40 53h2v2h-2zM57 63h3v2h-3zM10 51h2v1h-2zM17 3h2v2h-2zM10 22h2v1h-2zM39 15h3v2h-3zM55 18h2v1h-2zM0 7h1v2h-1zM20 43h2v3h-2zM19 12h2v2h-2zM21 0h1v2h-1zM49 21h2v1h-2zM64 20h2v2h-2zM68 32h2v1h-2z"/><path fill="#706858" d="M68 50h2v3h-2zM1 39h2v3h-2zM57 54h3v3h-3zM3 13h1v2h-1zM61 43h2v3h-2zM21 47h2v2h-2zM16 15h2v2h-2zM54 32h2v2h-2zM49 31h1v2h-1zM24 4h3v2h-3zM44 22h2v2h-2zM54 65h2v1h-2zM49 15h1v1h-1zM24 47h3v1h-3zM31 10h1v3h-1zM53 17h2v2h-2zM34 60h1v1h-1zM24 55h3v2h-3zM62 9h2v1h-2zM37 11h2v3h-2zM22 59h1v1h-1zM46 56h2v2h-2zM19 53h1v3h-1zM64 24h2v2h-2zM23 1h1v2h-1zM3 51h2v2h-2zM6 10h2v1h-2zM1 26h1v1h-1zM47 43h2v1h-2zM62 58h3v2h-3zM19 28h2v2h-2zM56 28h2v1h-2zM42 58h2v3h-2zM23 11h2v3h-2zM47 45h2v1h-2zM21 12h2v1h-2zM64 55h2v2h-2zM29 17h2v1h-2zM11 35h2v3h-2zM16 64h1v3h-1zM39 24h2v3h-2zM51 34h2v2h-2zM30 55h2v3h-2zM1 42h2v1h-2zM23 51h2v2h-2zM14 30h1v3h-1zM17 30h2v1h-2zM70 57h1v2h-1zM22 55h3v2h-3zM56 8h1v2h-1zM61 22h2v1h-2zM24 66h2v1h-2zM33 51h3v2h-3zM65 2h1v2h-1zM35 60h1v2h-1zM32 9h2v1h-2zM61 0h2v1h-2zM48 34h2v3h-2zM53 59h3v2h-3zM69 55h3v3h-3zM47 59h1v2h-1zM55 31h2v2h-2zM31 33h2v3h-2zM5 38h2v3h-2zM17 14h2v3h-2zM50 45h3v2h-3zM69 47h1v2h-1zM17 4h2v2h-2zM20 35h3v3h-3zM54 18h3v2h-3zM13 60h3v2h-3zM37 4h2v2h-2zM0 25h2v2h-2zM66 63h2v1h-2zM59 2h2v1h-2zM40 24h3v3h-3zM27 5h2v2h-2zM12 0h2v1h-2zM38 17h1v3h-1zM68 3h2v2h-2zM1 21h3v1h-3zM37 7h1v2h-1z"/><path fill="#5a7048" d="M5 44h1v1h-1zM33 41h2v1h-2zM35 55h3v3h-3zM51 17h2v1h-2zM1 13h3v3h-3zM45 56h1v2h-1zM57 36h3v1h-3zM24 48h2v1h-2zM4 13h1v3h-1zM60 64h2v1h-2zM68 26h2v1h-2zM35 57h2v2h-2zM66 49h3v3h-3zM5 55h3v3h-3zM11 28h2v1h-2zM40 15h3v3h-3zM43 52h2v1h-2zM21 27h2v2h-2zM35 0h1v1h-1zM17 25h1v1h-1zM66 59h3v2h-3zM44 16h2v2h-2zM14 52h1v2h-1zM69 55h1v3h-1zM57 56h2v1h-2zM45 7h1v2h-1zM27 23h2v2h-2zM44 16h1v2h-1zM49 9h1v1h-1zM47 28h1v1h-1zM48 40h2v2h-2zM19 14h1v3h-1zM53 22h1v2h-1zM28 0h2v2h-2zM27 16h1v1h-1zM0 7h2v2h-2zM10 25h1v3h-1zM1 64h1v2h-1zM1 38h3v2h-3zM49 34h3v2h-3zM50 49h3v1h-3zM33 25h2v2h-2zM18 28h3v3h-3zM16 55h3v2h-3zM15 27h3v1h-3zM64 44h1v3h-1zM1 62h1v2h-1zM43 27h2v1h-2zM11 48h2v2h-2zM55 51h3v3h-3zM8 45h1v2h-1zM57 57h2v1h-2zM49 34h3v2h-3zM44 14h2v2h-2zM36 52h2v2h-2zM38 24h2v2h-2zM58 37h2v2h-2zM70 40h2v2h-2zM6 19h1v3h-1zM17 2h2v2h-2zM2 28h2v2h-2zM54 58h2v1h-2zM19 40h1v2h-1zM6 9h3v1h-3zM18 14h3v2h-3zM20 45h2v1h-2zM36 14h1v2h-1zM51 29h3v2h-3zM14 41h2v1h-2zM41 49h3v2h-3zM36 62h1v1h-1zM70 2h1v2h-1zM21 7h1v3h-1zM68 55h2v3h-2zM49 26h2v3h-2zM69 51h2v3h-2zM2 51h3v3h-3zM9 16h3v3h-3zM38 8h3v3h-3zM63 32h2v2h-2zM52 59h2v2h-2zM21 15h1v2h-1zM17 58h1v3h-1zM0 24h1v2h-1z"/><path fill="#9a9080" d="M10 54h1v2h-1zM31 52h2v1h-2zM62 0h1v1h-1zM62 56h2v1h-2zM12 11h2v2h-2zM66 49h1v1h-1zM45 1h1v1h-1zM69 64h2v2h-2zM41 30h1v2h-1zM58 64h2v3h-2zM50 20h2v2h-2zM69 41h1v3h-1zM49 58h1v2h-1zM55 66h1v3h-1zM9 59h2v2h-2zM49 23h1v1h-1zM70 18h2v1h-2zM20 18h3v2h-3zM46 34h2v1h-2zM40 55h2v1h-2zM61 8h1v2h-1zM46 29h3v1h-3zM61 32h1v2h-1zM41 37h2v2h-2zM24 28h2v2h-2zM46 50h2v2h-2zM12 59h3v1h-3zM17 23h3v2h-3zM62 1h1v3h-1zM27 24h2v2h-2zM23 36h1v3h-1zM12 8h1v1h-1zM60 21h1v3h-1zM61 27h1v3h-1zM19 65h3v2h-3zM58 58h2v3h-2zM9 60h2v3h-2zM33 31h2v1h-2zM49 50h2v2h-2zM65 65h1v3h-1zM43 36h2v1h-2zM54 3h2v2h-2zM48 44h2v2h-2zM50 22h1v2h-1zM11 6h3v1h-3zM23 49h3v1h-3zM11 63h3v2h-3zM49 22h3v1h-3zM26 39h2v1h-2zM28 60h2v1h-2zM10 40h2v2h-2zM39 15h3v2h-3zM42 64h3v2h-3zM48 8h2v2h-2zM27 8h2v2h-2zM16 37h3v1h-3zM62 31h2v3h-2zM11 6h1v3h-1zM13 32h2v2h-2zM38 56h1v2h-1zM48 64h2v1h-2zM68 5h1v2h-1zM47 19h3v3h-3zM67 61h2v2h-2zM57 19h3v2h-3zM22 34h2v2h-2zM0 45h2v3h-2zM31 29h2v2h-2zM12 5h3v2h-3zM14 58h1v2h-1zM50 48h2v3h-2zM41 57h2v2h-2zM60 18h3v3h-3zM68 13h3v2h-3z"/><path fill="#7a8a70" d="M15 17h2v1h-2zM61 46h2v3h-2zM6 37h3v3h-3zM17 52h2v2h-2zM6 26h2v2h-2zM49 6h3v2h-3zM46 34h1v1h-1zM14 17h2v2h-2zM56 50h2v2h-2zM27 57h1v1h-1zM29 4h1v3h-1zM14 5h1v3h-1zM7 30h2v2h-2zM0 47h2v2h-2zM34 11h1v1h-1zM50 47h2v1h-2zM2 11h2v3h-2zM9 57h1v2h-1zM22 64h2v2h-2zM66 66h2v2h-2zM23 54h1v1h-1zM25 39h1v2h-1zM19 45h3v2h-3zM13 5h3v2h-3zM2 18h2v2h-2zM59 6h2v2h-2zM50 36h2v2h-2zM69 38h1v2h-1zM54 7h1v3h-1zM56 61h2v1h-2zM30 61h2v2h-2zM41 1h2v2h-2zM32 23h1v2h-1zM67 15h3v1h-3zM70 10h2v3h-2zM35 42h2v1h-2zM12 65h2v2h-2zM70 27h2v2h-2zM46 25h1v2h-1zM56 63h2v2h-2zM12 28h2v1h-2zM2 20h1v3h-1zM38 36h2v2h-2zM32 27h3v2h-3zM12 52h2v2h-2zM25 43h2v2h-2zM36 58h2v2h-2zM47 34h2v3h-2zM7 57h3v2h-3zM18 15h1v2h-1zM20 26h2v2h-2zM20 3h3v2h-3zM62 31h2v2h-2zM21 19h3v2h-3zM12 45h2v2h-2zM27 19h2v2h-2zM31 61h2v1h-2zM14 7h2v3h-2zM36 51h2v3h-2zM46 49h1v2h-1zM39 9h2v2h-2zM10 23h2v3h-2zM49 3h3v2h-3zM25 49h2v3h-2zM52 31h2v2h-2zM50 44h2v3h-2zM23 24h3v2h-3zM59 56h1v1h-1zM31 7h2v2h-2zM56 52h2v3h-2zM5 30h2v3h-2zM22 18h3v3h-3zM19 52h2v2h-2zM24 26h1v2h-1zM68 28h2v1h-2zM9 47h2v1h-2zM49 22h3v3h-3zM37 23h1v2h-1zM54 52h1v2h-1zM10 64h2v1h-2zM0 9h2v2h-2zM64 20h2v2h-2zM59 8h3v2h-3zM53 31h2v2h-2zM63 22h1v2h-1zM34 55h1v3h-1zM2 0h3v2h-3zM66 43h2v3h-2z"/></pattern><pattern id="spkr" width="89" height="79" patternUnits="userSpaceOnUse"><path fill="#300000" d="M1 19h3v2h-3zM85 37h3v3h-3zM60 20h3v1h-3zM30 27h2v3h-2zM12 29h2v2h-2zM44 27h1v2h-1zM25 33h2v2h-2zM48 55h2v2h-2zM15 73h2v1h-2zM68 38h3v2h-3zM83 21h2v1h-2zM0 34h2v1h-2zM69 51h3v2h-3zM59 60h2v1h-2zM78 59h1v2h-1zM72 21h1v3h-1zM84 71h1v1h-1zM27 0h1v1h-1zM51 58h2v1h-2zM73 58h1v3h-1zM64 18h2v2h-2zM51 55h3v2h-3zM12 7h2v2h-2zM83 28h3v2h-3zM28 44h3v1h-3zM16 3h2v2h-2zM79 11h2v2h-2zM58 23h3v3h-3zM2 51h3v2h-3zM63 18h1v3h-1zM0 60h2v3h-2zM38 18h3v1h-3zM69 37h1v2h-1zM54 59h3v2h-3zM45 8h3v1h-3zM53 54h2v2h-2zM60 77h1v3h-1zM76 57h3v2h-3zM24 57h1v2h-1zM30 71h1v2h-1zM75 62h2v2h-2zM57 0h3v2h-3zM53 63h2v3h-2zM50 20h3v2h-3zM69 37h3v2h-3zM51 0h2v2h-2zM8 61h2v1h-2zM36 27h2v1h-2zM49 73h2v3h-2zM55 34h1v1h-1zM35 30h2v1h-2zM88 11h2v1h-2zM1 66h2v2h-2zM30 46h3v3h-3zM34 54h2v2h-2zM50 61h3v2h-3zM87 21h3v3h-3zM21 51h2v2h-2zM45 72h3v3h-3zM71 65h2v2h-2zM5 57h1v2h-1zM16 1h1v2h-1zM20 47h2v3h-2zM34 72h3v3h-3zM31 78h3v3h-3zM25 16h2v3h-2zM72 62h2v2h-2zM19 16h3v1h-3zM0 8h2v2h-2zM81 69h3v2h-3zM38 20h2v2h-2zM84 40h3v1h-3zM41 9h1v3h-1zM6 62h3v1h-3zM40 39h1v2h-1zM43 53h2v2h-2zM75 5h1v2h-1zM50 5h1v3h-1zM53 17h2v3h-2zM45 8h2v2h-2zM70 0h2v3h-2zM5 17h2v2h-2zM38 63h1v2h-1zM25 70h2v1h-2zM46 6h2v3h-2zM38 17h2v1h-2zM59 73h2v3h-2zM72 49h2v2h-2zM10 49h3v2h-3zM32 60h3v2h-3zM66 53h2v2h-2zM75 78h3v2h-3zM5 42h1v2h-1zM78 32h2v2h-2zM87 66h2v2h-2zM26 12h3v2h-3zM26 67h1v2h-1zM66 49h1v2h-1zM84 55h2v3h-2zM12 41h2v2h-2zM39 8h2v3h-2zM3 19h3v2h-3zM50 30h2v2h-2zM33 11h2v1h-2zM8 17h1v2h-1zM24 6h2v1h-2zM68 52h2v1h-2zM38 16h2v3h-2zM4 6h2v2h-2zM12 12h2v2h-2zM6 47h3v2h-3zM65 25h3v1h-3zM49 13h2v2h-2zM14 51h2v2h-2zM5 72h2v1h-2zM9 55h3v2h-3zM1 36h1v1h-1zM75 12h2v3h-2zM64 72h2v1h-2zM82 53h2v2h-2zM65 56h1v1h-1zM12 62h2v2h-2zM24 45h2v1h-2zM5 76h3v2h-3zM16 69h1v1h-1zM4 22h1v2h-1zM7 17h2v2h-2zM77 7h1v1h-1zM19 77h2v2h-2zM85 17h3v2h-3zM14 8h2v2h-2zM77 36h3v2h-3zM71 47h3v2h-3zM11 72h2v2h-2zM81 8h1v2h-1zM40 45h1v2h-1zM0 68h3v2h-3zM88 61h3v2h-3zM33 31h1v3h-1zM10 42h1v1h-1zM8 50h2v3h-2zM85 16h2v1h-2zM4 18h1v3h-1zM1 11h1v1h-1zM35 8h2v2h-2zM87 70h2v2h-2zM77 63h3v2h-3zM82 14h2v3h-2zM82 2h2v2h-2zM15 13h2v2h-2zM2 49h2v1h-2zM66 40h2v2h-2zM25 35h2v2h-2zM75 40h2v2h-2zM14 18h2v2h-2zM32 12h2v3h-2zM10 77h3v2h-3zM63 7h2v2h-2zM44 11h2v2h-2zM72 65h3v3h-3zM16 10h2v1h-2zM63 54h2v2h-2zM48 68h3v3h-3zM27 48h2v1h-2zM68 14h3v3h-3zM45 66h1v1h-1zM21 6h1v2h-1zM9 60h2v2h-2zM12 40h3v2h-3zM37 70h2v2h-2zM20 35h2v2h-2zM79 8h2v3h-2zM58 15h2v1h-2zM2 52h1v3h-1zM79 56h1v1h-1zM41 65h2v2h-2zM49 41h3v2h-3zM24 57h3v2h-3zM60 26h2v1h-2zM3 73h1v1h-1zM54 11h3v3h-3zM47 51h2v2h-2zM62 70h2v2h-2zM39 68h1v1h-1zM82 45h2v2h-2zM56 68h1v1h-1zM88 78h1v1h-1zM75 35h3v1h-3zM75 15h2v3h-2zM76 54h2v1h-2zM72 26h2v2h-2zM51 17h3v2h-3zM45 41h2v2h-2zM43 52h2v2h-2zM3 24h3v1h-3zM9 58h2v1h-2zM76 52h1v3h-1zM37 59h3v1h-3zM32 72h1v3h-1zM69 18h3v3h-3zM3 20h1v2h-1zM73 42h2v3h-2zM4 44h3v3h-3zM52 15h1v1h-1zM43 34h1v2h-1zM56 76h2v3h-2zM35 48h1v3h-1zM48 72h2v2h-2zM43 31h3v1h-3zM38 16h2v2h-2zM24 23h1v3h-1zM19 2h2v2h-2zM21 6h2v3h-2zM30 29h2v3h-2zM37 60h3v1h-3zM33 62h2v3h-2zM18 77h1v1h-1zM15 51h3v2h-3zM47 24h3v2h-3zM39 24h2v3h-2zM64 5h1v1h-1zM10 36h3v1h-3zM67 64h1v2h-1zM54 38h2v3h-2zM26 75h2v1h-2zM48 12h3v2h-3zM25 36h2v2h-2zM40 20h2v2h-2zM4 16h2v2h-2zM57 4h2v3h-2zM80 51h2v1h-2zM4 49h2v1h-2zM32 66h1v3h-1zM83 31h3v1h-3zM73 39h2v2h-2zM56 13h3v1h-3zM15 49h2v2h-2zM37 41h2v3h-2zM3 22h3v1h-3zM16 9h2v2h-2zM45 73h1v2h-1zM17 0h1v3h-1zM41 4h2v2h-2zM78 49h3v2h-3zM69 70h2v3h-2zM88 37h2v2h-2zM0 70h2v3h-2zM26 25h3v3h-3zM55 9h2v2h-2zM31 43h2v2h-2zM67 39h2v2h-2zM87 24h2v1h-2zM9 37h3v2h-3zM44 57h1v2h-1zM19 21h2v2h-2zM72 48h2v3h-2zM14 0h2v2h-2zM32 15h3v1h-3zM86 34h1v3h-1zM6 13h3v2h-3zM87 22h1v1h-1zM63 11h3v2h-3zM65 10h2v2h-2zM56 32h2v2h-2zM88 25h2v1h-2zM44 78h3v2h-3zM51 17h2v2h-2zM81 38h2v2h-2zM9 21h3v3h-3zM28 34h3v1h-3zM2 39h2v2h-2zM67 50h2v3h-2zM68 59h3v1h-3zM35 4h3v3h-3zM81 71h2v2h-2zM70 6h2v1h-2zM72 43h2v2h-2zM11 21h2v2h-2zM45 61h2v1h-2zM61 37h1v2h-1zM14 30h2v2h-2zM82 64h1v1h-1zM31 27h3v1h-3zM63 13h2v1h-2zM74 63h1v2h-1zM14 27h1v3h-1zM29 62h1v2h-1zM63 57h1v2h-1zM49 67h2v2h-2zM65 77h3v1h-3zM57 51h1v2h-1zM84 62h1v2h-1zM59 4h2v1h-2zM39 42h2v2h-2zM32 4h2v3h-2zM71 74h2v1h-2zM4 6h2v1h-2zM76 8h3v3h-3zM12 74h1v1h-1zM38 70h3v3h-3zM70 52h1v1h-1zM24 66h1v1h-1zM17 5h2v1h-2zM21 14h1v3h-1zM85 29h2v2h-2zM36 43h3v1h-3zM20 11h1v2h-1zM70 76h3v3h-3zM13 35h1v2h-1z"/><path fill="#400000" d="M2 45h3v2h-3zM14 26h3v2h-3zM81 6h2v2h-2zM18 38h3v2h-3zM24 15h2v3h-2zM78 75h1v1h-1zM38 67h2v3h-2zM63 20h3v1h-3zM64 43h3v1h-3zM24 16h3v1h-3zM81 37h3v2h-3zM8 52h1v1h-1zM81 33h2v3h-2zM68 58h2v3h-2zM60 57h1v2h-1zM33 21h1v2h-1zM88 27h2v3h-2zM83 57h2v2h-2zM35 52h1v3h-1zM16 23h2v2h-2zM34 44h2v2h-2zM48 4h2v1h-2zM15 51h1v1h-1zM31 66h2v3h-2zM72 54h1v2h-1zM28 38h3v1h-3zM51 19h2v2h-2zM34 37h3v3h-3zM70 19h1v2h-1zM84 35h2v1h-2zM43 75h2v2h-2zM13 76h3v1h-3zM38 60h1v2h-1zM45 78h1v2h-1zM43 28h2v2h-2zM29 59h1v3h-1zM2 49h3v2h-3zM1 38h1v3h-1zM33 19h3v3h-3zM58 26h1v3h-1zM44 32h2v3h-2zM22 18h3v1h-3zM23 50h2v3h-2zM63 23h1v2h-1zM76 5h2v2h-2zM68 3h2v2h-2zM40 78h2v1h-2zM50 57h1v2h-1zM13 18h1v3h-1zM34 7h2v2h-2zM47 32h2v2h-2zM21 75h3v2h-3zM29 78h1v1h-1zM12 65h3v1h-3zM58 6h3v3h-3zM19 57h3v2h-3zM41 26h2v3h-2zM0 25h3v1h-3zM42 66h3v1h-3zM12 41h2v2h-2zM83 59h3v2h-3zM39 29h1v2h-1zM51 68h2v1h-2zM88 30h2v2h-2zM0 44h2v1h-2zM31 77h2v2h-2zM20 51h2v2h-2zM61 7h2v2h-2zM56 8h2v3h-2zM48 1h2v3h-2zM9 47h2v1h-2zM74 6h2v3h-2zM23 31h3v3h-3zM69 33h2v1h-2zM73 12h2v1h-2zM86 61h2v2h-2zM7 56h2v3h-2zM40 76h3v2h-3zM66 27h3v2h-3zM16 28h2v3h-2zM16 12h2v1h-2zM85 74h1v3h-1zM34 43h2v2h-2zM39 19h1v2h-1zM49 51h2v2h-2zM26 59h1v2h-1zM14 77h1v2h-1zM47 65h2v1h-2zM6 25h3v3h-3zM76 18h3v2h-3zM38 11h3v2h-3zM36 10h3v2h-3zM73 74h3v2h-3zM12 68h3v2h-3zM39 26h1v2h-1zM62 70h1v3h-1zM51 52h3v1h-3zM12 78h1v1h-1zM7 53h3v2h-3zM54 31h1v3h-1zM75 30h1v3h-1zM73 26h1v2h-1zM50 73h2v1h-2zM28 76h1v1h-1zM7 26h2v2h-2zM10 41h3v1h-3zM63 14h2v2h-2zM36 6h1v2h-1zM76 55h2v3h-2zM77 14h2v2h-2zM40 18h3v3h-3zM65 0h1v2h-1zM5 53h1v1h-1zM79 28h3v3h-3zM23 74h2v3h-2zM44 27h2v2h-2zM15 69h2v2h-2zM31 72h2v2h-2zM67 17h1v1h-1zM21 35h2v2h-2zM3 26h2v2h-2zM21 69h3v3h-3zM40 48h2v3h-2zM62 57h2v1h-2zM77 4h2v3h-2zM51 77h2v3h-2zM49 54h3v1h-3zM20 49h3v2h-3zM59 61h2v1h-2zM60 60h3v1h-3zM77 7h1v3h-1zM88 23h2v1h-2zM6 14h2v3h-2zM81 56h3v3h-3zM79 64h2v2h-2zM55 69h2v1h-2zM50 44h1v3h-1zM79 42h2v1h-2zM10 33h3v1h-3zM74 29h2v1h-2zM55 78h2v2h-2zM4 20h3v3h-3zM62 29h2v2h-2zM75 70h2v3h-2zM87 58h2v2h-2zM70 16h3v2h-3zM39 20h2v1h-2zM58 0h2v1h-2zM30 74h2v3h-2zM17 27h2v3h-2zM61 15h2v1h-2zM20 17h1v3h-1zM43 13h3v2h-3zM53 35h1v2h-1zM11 7h2v3h-2zM49 11h2v1h-2zM36 41h2v2h-2zM27 67h2v3h-2zM55 41h1v2h-1zM69 64h3v1h-3zM70 73h3v2h-3zM28 47h3v3h-3zM61 6h3v2h-3zM31 39h2v3h-2zM10 76h3v2h-3zM41 77h2v2h-2zM79 67h2v2h-2zM6 75h1v2h-1zM7 53h2v1h-2zM5 74h1v2h-1zM88 33h2v1h-2zM21 72h2v2h-2zM14 50h2v1h-2zM64 46h1v2h-1zM77 21h2v2h-2zM28 55h3v3h-3zM26 46h3v3h-3zM36 78h2v2h-2zM13 32h3v3h-3zM87 12h3v2h-3zM10 27h2v2h-2zM8 18h3v3h-3zM85 17h2v1h-2zM41 34h1v1h-1zM0 61h3v3h-3zM29 38h2v2h-2zM69 29h2v2h-2zM32 48h2v2h-2zM11 19h2v2h-2zM30 57h3v2h-3zM75 76h2v3h-2zM68 61h2v2h-2zM67 62h2v2h-2zM68 1h3v1h-3zM0 12h2v1h-2zM80 47h2v1h-2zM20 49h2v2h-2zM6 72h2v1h-2zM23 23h3v2h-3zM87 53h3v3h-3zM55 38h3v3h-3zM65 4h3v1h-3zM45 53h3v3h-3zM65 53h3v2h-3zM71 43h3v1h-3zM65 63h2v2h-2zM47 48h3v3h-3zM80 21h1v2h-1zM46 5h2v1h-2zM80 75h1v2h-1zM10 3h2v3h-2zM52 71h2v2h-2zM11 25h1v1h-1zM10 29h2v2h-2zM12 37h3v2h-3zM57 0h2v2h-2zM6 58h3v1h-3zM56 67h1v1h-1zM35 78h1v2h-1zM43 47h2v2h-2zM70 58h1v2h-1zM29 40h3v2h-3zM88 76h3v1h-3zM6 10h1v1h-1zM41 54h1v3h-1zM79 65h1v2h-1zM69 55h1v1h-1zM32 57h2v1h-2zM50 59h3v1h-3zM11 2h1v2h-1zM70 3h1v2h-1zM2 78h3v3h-3zM76 46h1v1h-1zM45 68h1v3h-1zM13 44h2v2h-2zM87 63h2v3h-2zM62 26h1v3h-1zM87 59h3v3h-3zM14 20h1v2h-1zM41 3h3v3h-3zM47 43h1v3h-1zM69 65h1v2h-1zM2 66h3v1h-3zM60 0h3v3h-3zM57 19h2v3h-2zM85 6h2v1h-2zM85 21h1v2h-1zM56 37h1v2h-1zM56 75h1v1h-1zM61 70h1v2h-1zM70 32h3v2h-3zM66 3h2v2h-2zM27 56h2v3h-2zM58 45h3v2h-3zM10 28h2v3h-2zM83 4h2v1h-2zM29 26h2v2h-2zM52 1h1v1h-1zM30 37h2v1h-2zM64 10h2v1h-2zM6 38h1v3h-1zM8 9h3v3h-3zM3 1h2v1h-2zM62 73h2v2h-2zM0 1h1v3h-1zM34 72h2v2h-2zM81 58h3v1h-3zM43 31h2v2h-2zM5 48h2v2h-2zM38 63h3v3h-3zM45 78h2v2h-2zM69 38h3v3h-3zM49 4h2v3h-2zM7 49h1v2h-1zM9 54h2v3h-2zM7 54h2v2h-2zM52 5h1v3h-1zM19 16h1v1h-1z"/><path fill="#500000" d="M21 38h1v3h-1zM61 17h2v3h-2zM76 28h3v2h-3zM0 31h3v2h-3zM11 8h3v2h-3zM41 41h2v2h-2zM74 39h2v2h-2zM73 2h2v2h-2zM14 75h1v2h-1zM9 56h3v1h-3zM43 73h1v1h-1zM0 43h2v2h-2zM63 51h2v1h-2zM24 65h3v1h-3zM83 45h3v3h-3zM32 73h3v2h-3zM27 6h3v1h-3zM60 9h3v3h-3zM23 27h2v1h-2zM10 59h2v1h-2zM73 14h2v1h-2zM55 23h2v1h-2zM8 21h2v3h-2zM49 72h2v2h-2zM17 69h1v2h-1zM45 24h3v2h-3zM14 4h1v3h-1zM3 11h2v2h-2zM21 20h2v1h-2zM38 64h3v2h-3zM43 55h2v2h-2zM44 12h1v1h-1zM53 5h1v3h-1zM54 3h1v3h-1zM55 15h2v2h-2zM1 40h2v1h-2zM20 29h3v1h-3zM9 38h2v3h-2zM33 66h3v2h-3zM75 3h2v2h-2zM23 61h2v3h-2zM58 26h2v1h-2zM74 22h2v1h-2zM4 37h2v2h-2zM50 41h2v1h-2zM77 28h2v3h-2zM53 57h3v2h-3zM21 5h1v1h-1zM33 69h1v2h-1zM16 34h2v1h-2zM57 43h1v2h-1zM61 47h2v3h-2zM54 35h3v2h-3zM57 29h1v1h-1zM84 68h2v2h-2zM81 17h2v3h-2zM21 41h3v3h-3zM21 71h2v2h-2zM23 1h1v2h-1zM31 35h1v2h-1zM74 46h3v2h-3zM73 41h2v3h-2zM36 11h3v2h-3zM36 14h2v3h-2zM51 60h1v2h-1zM40 41h1v2h-1zM41 3h1v3h-1zM30 15h3v1h-3zM47 35h3v3h-3zM32 23h3v2h-3zM22 24h2v3h-2zM66 73h3v2h-3zM55 73h2v3h-2zM39 62h2v1h-2zM7 28h3v1h-3zM5 64h3v1h-3zM53 62h3v3h-3zM0 46h2v1h-2zM49 9h2v1h-2zM30 3h2v2h-2zM2 77h2v2h-2zM76 46h2v1h-2zM84 41h2v2h-2zM42 50h3v2h-3zM57 1h2v3h-2zM67 56h1v2h-1zM18 77h3v2h-3zM20 50h3v3h-3zM79 20h2v2h-2zM54 78h2v2h-2zM86 19h2v3h-2zM81 60h2v1h-2zM40 1h2v2h-2zM53 55h2v2h-2zM32 2h1v1h-1zM87 57h3v2h-3zM64 62h1v2h-1zM45 63h2v1h-2zM32 41h1v2h-1zM19 27h3v1h-3zM77 60h3v3h-3zM5 17h3v1h-3zM3 46h3v2h-3zM15 57h1v2h-1zM87 61h3v1h-3zM30 75h3v1h-3zM75 16h2v3h-2zM74 63h2v3h-2zM65 50h2v1h-2zM82 20h2v2h-2zM57 36h1v2h-1zM82 48h2v2h-2zM27 70h2v1h-2zM36 32h3v3h-3zM87 61h2v2h-2zM40 9h2v2h-2zM26 66h2v2h-2zM29 75h2v2h-2zM73 12h2v2h-2zM78 56h3v1h-3zM16 48h1v3h-1zM50 23h2v2h-2zM64 42h2v2h-2zM14 15h2v2h-2zM29 18h2v2h-2zM24 40h3v2h-3zM72 6h2v2h-2zM34 38h3v3h-3zM50 23h1v3h-1zM12 62h2v2h-2zM68 45h1v2h-1zM84 9h1v2h-1zM35 3h3v2h-3zM56 28h2v1h-2zM67 56h2v3h-2zM49 68h2v1h-2zM87 34h2v1h-2zM6 66h2v2h-2zM45 74h2v2h-2zM0 19h2v2h-2zM64 37h2v2h-2zM82 3h1v2h-1zM71 74h1v2h-1zM7 46h1v1h-1zM60 0h2v2h-2zM59 57h2v3h-2zM35 21h3v2h-3zM18 74h1v3h-1zM20 65h1v3h-1zM61 14h1v2h-1zM6 1h2v1h-2zM33 46h3v3h-3zM67 61h2v1h-2zM38 38h3v3h-3zM51 29h1v2h-1zM63 53h2v1h-2zM84 28h2v1h-2zM12 39h2v2h-2zM49 40h2v2h-2zM48 55h3v2h-3zM31 71h2v3h-2zM75 75h2v2h-2zM49 62h2v2h-2zM57 15h2v1h-2zM59 54h2v3h-2zM70 18h1v2h-1zM88 29h1v2h-1zM35 61h2v3h-2zM73 66h2v1h-2zM14 48h3v2h-3zM78 76h2v2h-2zM67 16h2v2h-2zM34 71h2v3h-2zM32 24h3v1h-3zM23 5h2v1h-2zM5 36h1v2h-1zM49 42h2v3h-2zM49 6h3v2h-3zM46 29h2v3h-2zM41 73h3v2h-3zM53 2h2v2h-2zM79 73h1v1h-1zM67 44h3v3h-3zM61 47h2v1h-2zM84 33h3v2h-3zM79 40h2v2h-2zM24 6h3v2h-3zM3 65h2v2h-2zM11 16h2v2h-2zM9 33h2v2h-2zM31 8h2v3h-2zM43 21h3v1h-3zM43 59h2v3h-2zM45 15h2v3h-2zM43 56h3v2h-3zM14 74h1v2h-1zM71 51h3v2h-3zM63 25h1v2h-1zM39 72h2v3h-2zM2 41h1v1h-1zM83 2h1v2h-1zM72 55h3v3h-3zM3 16h2v1h-2zM5 15h2v2h-2zM58 38h1v2h-1zM66 69h2v1h-2zM82 55h3v3h-3zM34 68h1v2h-1zM80 7h1v2h-1zM45 31h1v2h-1zM85 75h2v2h-2zM54 39h1v2h-1zM63 71h3v1h-3zM61 19h1v1h-1zM40 34h3v3h-3zM66 77h3v2h-3zM38 19h1v2h-1zM64 72h1v1h-1zM49 34h2v3h-2zM29 50h2v1h-2zM31 0h1v2h-1zM88 19h2v3h-2zM29 76h2v2h-2zM60 12h3v3h-3zM46 40h3v1h-3zM55 35h1v2h-1zM28 73h1v2h-1zM74 33h2v2h-2zM44 76h1v3h-1zM61 67h3v1h-3zM34 49h2v3h-2zM65 38h1v1h-1zM74 40h2v1h-2zM50 31h1v2h-1zM32 16h2v3h-2zM47 20h2v2h-2zM69 55h1v2h-1zM27 66h3v2h-3zM14 5h3v3h-3zM62 65h2v3h-2zM16 70h2v1h-2zM19 33h1v2h-1zM3 8h2v1h-2zM75 9h2v3h-2zM29 59h3v2h-3zM18 7h3v2h-3zM20 66h1v1h-1zM53 53h2v2h-2zM39 19h3v1h-3zM74 67h2v1h-2zM22 1h2v1h-2zM72 73h3v2h-3zM33 47h2v2h-2zM19 18h3v2h-3zM39 49h1v2h-1zM33 55h1v3h-1zM53 0h2v3h-2zM48 31h1v1h-1zM87 66h2v2h-2zM55 48h3v2h-3zM69 43h2v3h-2zM43 54h2v2h-2zM64 63h1v3h-1zM43 41h2v3h-2zM28 44h2v2h-2zM83 40h1v1h-1zM7 24h2v2h-2zM37 2h2v1h-2zM11 70h1v2h-1zM36 61h2v1h-2zM37 75h2v1h-2zM86 52h2v2h-2zM76 50h3v2h-3zM71 53h2v2h-2zM59 42h1v3h-1zM32 10h2v3h-2zM11 76h3v2h-3zM59 4h1v3h-1zM59 74h2v2h-2zM0 7h3v1h-3zM20 11h1v2h-1zM62 38h3v3h-3zM55 65h2v2h-2zM20 66h2v3h-2zM85 69h2v3h-2zM67 46h2v2h-2zM10 47h1v2h-1zM38 72h3v2h-3zM18 60h3v2h-3zM49 59h2v2h-2zM10 19h2v2h-2zM9 24h2v2h-2zM46 66h2v3h-2zM13 8h2v3h-2zM82 8h1v1h-1zM23 41h2v3h-2zM37 48h2v1h-2zM10 15h3v3h-3zM15 50h2v3h-2zM63 62h2v1h-2z"/><path fill="#600000" d="M13 70h2v3h-2zM49 51h1v2h-1zM42 29h3v1h-3zM6 68h2v3h-2zM40 18h3v3h-3zM17 40h2v1h-2zM41 7h2v2h-2zM65 76h3v2h-3zM83 42h3v3h-3zM14 12h3v2h-3zM69 0h2v3h-2zM67 74h2v2h-2zM34 4h2v2h-2zM75 64h1v3h-1zM7 63h2v1h-2zM13 68h1v1h-1zM19 4h1v2h-1zM72 1h1v3h-1zM60 23h3v1h-3zM57 5h2v1h-2zM1 45h2v1h-2zM54 61h2v3h-2zM5 6h1v2h-1zM31 55h1v1h-1zM88 41h2v3h-2zM63 54h3v2h-3zM16 30h2v2h-2zM70 10h2v3h-2zM0 54h2v2h-2zM11 20h2v2h-2zM84 35h1v2h-1zM78 67h3v1h-3zM7 25h2v1h-2zM11 35h1v1h-1zM85 37h2v2h-2zM82 29h3v1h-3zM12 62h2v2h-2zM22 13h3v1h-3zM44 78h2v1h-2zM58 21h2v2h-2zM20 44h2v2h-2zM74 64h2v2h-2zM31 24h2v2h-2zM18 31h3v3h-3zM23 76h2v1h-2zM1 40h1v2h-1zM17 12h1v2h-1zM63 48h2v2h-2zM73 28h2v2h-2zM54 18h2v1h-2zM21 45h2v2h-2zM82 52h1v2h-1zM58 64h2v2h-2zM53 59h2v3h-2zM82 64h3v2h-3zM20 73h1v3h-1zM26 75h2v1h-2zM33 77h2v2h-2zM56 47h2v1h-2zM67 22h1v2h-1zM27 38h1v1h-1zM42 19h1v2h-1zM83 37h1v2h-1zM6 63h3v3h-3zM5 18h2v1h-2zM3 56h3v2h-3zM36 55h2v2h-2zM5 15h1v2h-1zM47 62h3v1h-3zM1 69h1v1h-1zM53 51h1v2h-1zM22 32h2v1h-2zM55 62h2v2h-2zM5 23h2v2h-2zM33 21h3v3h-3zM66 35h2v2h-2zM0 50h2v2h-2zM42 78h2v2h-2zM66 6h3v1h-3zM5 8h3v1h-3zM65 1h2v3h-2zM66 35h1v3h-1zM75 2h3v2h-3zM41 58h3v2h-3zM56 30h1v2h-1zM57 57h1v2h-1zM27 17h2v3h-2zM68 51h2v2h-2zM78 75h1v1h-1zM3 78h2v2h-2zM67 66h3v2h-3zM2 12h3v3h-3zM26 32h2v2h-2zM46 23h3v1h-3zM86 36h2v2h-2zM33 74h3v3h-3zM34 22h1v2h-1zM34 60h2v2h-2zM74 52h2v2h-2zM17 74h2v1h-2zM69 4h1v1h-1zM40 17h3v1h-3zM37 54h2v1h-2zM38 13h2v2h-2zM74 14h2v1h-2zM41 1h2v2h-2zM21 47h3v1h-3zM81 68h2v3h-2zM28 16h2v1h-2zM76 64h3v3h-3zM43 72h1v2h-1zM37 57h2v2h-2zM1 50h2v3h-2zM49 32h2v2h-2zM49 65h2v1h-2zM3 42h2v2h-2zM41 56h2v2h-2zM70 62h2v1h-2zM13 30h1v3h-1zM5 77h3v2h-3zM87 46h2v3h-2zM43 76h3v2h-3zM86 30h2v1h-2zM83 25h1v2h-1zM40 53h2v3h-2zM79 29h1v2h-1zM50 16h2v3h-2zM55 55h3v1h-3zM62 44h3v1h-3zM19 23h2v2h-2zM32 6h3v3h-3zM46 38h2v2h-2zM2 23h1v2h-1zM20 1h1v3h-1zM56 29h1v2h-1zM46 5h2v2h-2zM24 10h2v2h-2zM49 43h1v3h-1zM64 12h1v1h-1zM6 40h1v2h-1zM30 68h2v2h-2zM1 30h1v3h-1zM77 41h1v2h-1zM35 69h2v3h-2zM52 31h1v3h-1zM71 64h1v1h-1zM24 21h1v3h-1zM88 24h3v1h-3zM12 26h2v2h-2zM51 65h1v1h-1zM80 69h2v1h-2zM24 34h3v2h-3zM9 52h2v2h-2zM52 71h1v3h-1zM67 48h3v1h-3zM65 76h3v2h-3zM13 68h1v2h-1zM63 47h2v2h-2zM47 50h2v2h-2zM67 8h2v2h-2zM38 38h2v1h-2zM2 21h2v3h-2zM63 61h2v1h-2zM40 68h1v2h-1zM27 68h2v1h-2zM20 13h2v3h-2zM65 40h2v3h-2zM8 41h2v1h-2zM40 58h3v3h-3zM16 16h3v1h-3zM44 54h2v1h-2zM75 2h1v1h-1zM60 27h1v2h-1zM0 14h2v2h-2zM18 10h2v2h-2zM82 32h3v3h-3zM68 42h2v3h-2zM5 19h2v1h-2zM56 8h2v1h-2zM85 1h1v3h-1zM12 68h2v1h-2zM18 7h2v1h-2zM33 66h2v2h-2zM6 38h1v3h-1zM0 52h2v3h-2zM63 10h3v1h-3zM32 69h2v2h-2zM86 29h1v3h-1zM8 10h1v3h-1zM25 20h2v2h-2zM51 78h2v2h-2zM50 3h2v1h-2zM75 16h2v1h-2zM38 14h3v1h-3zM33 42h3v2h-3zM38 73h3v3h-3zM33 38h2v2h-2zM14 43h3v2h-3zM66 5h2v1h-2zM1 8h2v2h-2zM55 20h2v3h-2zM51 41h1v1h-1zM33 6h2v2h-2zM55 56h2v2h-2zM75 2h2v2h-2zM25 31h1v2h-1zM31 26h1v2h-1zM9 51h1v2h-1zM47 11h2v2h-2zM31 44h1v2h-1zM63 15h3v3h-3zM17 9h2v3h-2zM35 50h1v3h-1zM14 37h3v2h-3zM44 77h2v3h-2zM3 3h1v2h-1zM7 0h2v2h-2zM81 78h1v3h-1zM69 50h2v1h-2zM6 58h2v1h-2zM5 44h3v3h-3zM14 78h3v3h-3zM29 0h1v2h-1zM51 61h2v2h-2zM15 61h3v1h-3zM20 46h2v2h-2zM80 32h2v3h-2zM1 57h2v2h-2zM24 34h2v2h-2zM63 51h2v2h-2zM56 63h1v1h-1zM13 42h3v1h-3zM33 30h3v3h-3zM68 77h2v2h-2zM82 17h3v3h-3zM23 9h2v2h-2zM44 36h3v2h-3zM51 36h1v2h-1zM32 52h3v2h-3zM33 57h2v1h-2zM35 0h1v2h-1zM4 42h2v1h-2zM21 26h2v1h-2zM67 59h3v1h-3zM81 44h2v3h-2zM27 7h2v3h-2zM81 36h3v3h-3zM10 16h1v2h-1zM73 65h1v1h-1zM69 2h1v2h-1zM37 40h2v1h-2zM22 74h2v3h-2zM46 60h1v2h-1zM19 3h2v1h-2zM19 28h1v3h-1zM69 67h2v2h-2zM63 69h2v3h-2zM50 72h2v2h-2zM68 2h1v2h-1zM13 39h3v1h-3zM64 31h3v2h-3zM34 16h1v3h-1zM74 41h3v1h-3zM4 69h1v1h-1zM29 40h1v3h-1zM17 13h1v1h-1zM80 65h3v3h-3zM73 44h1v1h-1zM23 55h2v3h-2zM44 21h2v3h-2zM26 51h3v2h-3zM17 63h3v2h-3zM74 26h1v1h-1zM88 74h2v2h-2zM34 25h2v2h-2zM70 1h2v3h-2zM55 37h1v2h-1zM67 71h2v1h-2zM77 58h3v2h-3zM51 4h3v3h-3zM13 41h2v3h-2zM53 46h3v2h-3zM9 60h1v3h-1zM26 36h3v2h-3zM61 55h1v1h-1zM20 41h1v2h-1zM38 15h2v2h-2zM49 77h1v2h-1zM69 51h3v1h-3zM8 46h3v2h-3zM78 29h2v2h-2zM18 74h2v2h-2z"/><path fill="#380000" d="M39 69h2v3h-2zM6 29h2v2h-2zM33 57h3v2h-3zM54 61h2v2h-2zM48 20h3v1h-3zM28 26h3v2h-3zM12 10h3v2h-3zM59 1h2v2h-2zM73 31h3v1h-3zM31 68h2v3h-2zM12 64h1v1h-1zM66 10h3v2h-3zM26 54h2v1h-2zM22 64h2v3h-2zM28 29h2v3h-2zM82 9h1v3h-1zM22 47h1v3h-1zM18 23h2v1h-2zM6 18h2v2h-2zM48 7h1v2h-1zM29 35h2v3h-2zM73 67h3v2h-3zM70 66h3v2h-3zM0 66h1v1h-1zM73 77h2v2h-2zM44 64h1v3h-1zM33 39h3v1h-3zM3 15h3v1h-3zM64 4h1v2h-1zM5 66h2v2h-2zM27 14h2v2h-2zM31 29h2v2h-2zM37 37h3v2h-3zM67 2h2v3h-2zM7 42h2v2h-2zM52 72h1v1h-1zM52 58h2v2h-2zM49 28h2v1h-2zM47 38h2v1h-2zM69 14h2v1h-2zM61 16h2v2h-2zM22 70h3v2h-3zM68 22h2v2h-2zM25 52h1v1h-1zM25 12h3v2h-3zM53 4h3v2h-3zM77 37h2v1h-2zM63 78h2v2h-2zM28 56h2v2h-2zM9 63h2v2h-2zM48 17h3v1h-3zM74 28h3v1h-3zM69 57h2v3h-2zM51 70h1v2h-1zM58 71h3v1h-3zM23 53h3v3h-3zM26 73h3v2h-3zM17 15h3v1h-3zM58 0h3v2h-3zM41 38h1v1h-1zM60 6h2v3h-2zM53 24h2v2h-2zM27 41h3v2h-3zM22 1h2v2h-2zM48 51h3v3h-3zM74 9h2v2h-2zM1 38h1v2h-1zM5 24h2v2h-2zM34 45h3v2h-3zM36 1h2v1h-2zM24 77h3v2h-3zM14 76h3v1h-3zM61 34h2v2h-2zM79 73h2v2h-2zM5 16h1v3h-1zM17 59h2v3h-2zM5 40h2v2h-2zM80 44h2v2h-2zM72 33h1v3h-1zM73 10h3v3h-3zM26 72h3v2h-3zM24 65h2v3h-2zM52 9h2v3h-2zM24 75h2v3h-2zM32 73h2v3h-2zM86 41h3v3h-3zM52 24h1v2h-1zM77 35h1v2h-1zM26 45h3v3h-3zM72 56h3v3h-3zM14 39h1v3h-1zM35 59h3v2h-3zM35 35h2v1h-2zM72 11h2v2h-2zM49 3h3v2h-3zM85 12h3v1h-3zM17 16h2v2h-2zM78 9h2v2h-2zM35 51h1v2h-1zM42 43h1v2h-1zM23 68h2v1h-2zM60 30h2v1h-2zM2 41h2v2h-2zM38 23h3v2h-3zM55 58h3v2h-3zM51 74h2v2h-2zM25 70h2v2h-2zM70 2h2v3h-2zM10 24h2v2h-2zM84 26h2v1h-2zM37 18h1v2h-1zM74 39h1v2h-1zM59 0h2v1h-2zM11 15h2v3h-2zM70 10h1v3h-1zM78 14h3v1h-3zM21 41h2v3h-2zM9 0h2v2h-2zM67 45h3v3h-3zM2 5h1v2h-1zM81 52h3v1h-3zM58 30h2v3h-2zM78 78h2v3h-2zM18 32h2v2h-2zM68 43h2v3h-2zM72 48h1v2h-1zM27 28h2v2h-2zM15 29h2v1h-2zM74 18h2v1h-2zM49 59h3v1h-3zM42 48h2v3h-2zM31 56h1v1h-1zM28 63h1v1h-1zM40 49h3v3h-3zM2 78h3v2h-3zM0 23h2v2h-2zM26 48h1v2h-1zM65 73h1v2h-1zM46 30h2v2h-2zM18 9h1v2h-1zM51 51h3v3h-3zM11 76h2v1h-2zM73 51h3v1h-3zM49 31h3v3h-3zM11 75h1v2h-1zM56 66h1v1h-1zM86 54h1v2h-1zM21 23h1v3h-1zM63 25h1v2h-1zM22 49h3v2h-3zM63 27h3v3h-3zM83 52h2v2h-2zM58 25h2v3h-2zM18 47h2v3h-2zM37 75h1v2h-1zM50 6h2v1h-2zM68 53h2v3h-2zM7 49h2v2h-2zM57 21h2v2h-2zM76 23h2v1h-2zM50 29h2v2h-2zM66 43h1v3h-1zM46 74h3v2h-3zM39 16h2v2h-2zM39 16h2v2h-2zM38 66h2v2h-2zM55 46h2v2h-2zM60 51h2v1h-2zM70 65h3v2h-3zM55 74h1v1h-1zM73 66h2v1h-2zM73 29h3v2h-3zM24 54h2v2h-2zM40 5h3v3h-3zM71 60h2v1h-2zM45 10h3v3h-3zM24 33h2v2h-2zM33 1h3v2h-3zM35 41h2v3h-2zM58 35h1v1h-1zM83 6h1v1h-1zM13 44h2v2h-2zM50 5h3v3h-3zM80 42h2v3h-2zM73 35h2v1h-2zM41 38h2v2h-2zM32 13h2v2h-2zM2 74h2v3h-2zM52 21h2v2h-2zM32 63h3v2h-3zM5 66h2v3h-2zM58 16h2v2h-2zM24 78h1v1h-1zM85 53h2v3h-2zM5 28h2v3h-2zM73 38h1v2h-1zM5 29h2v2h-2zM33 43h1v1h-1zM61 73h3v3h-3zM23 4h3v2h-3zM6 18h2v2h-2zM48 33h2v2h-2zM73 14h3v3h-3zM63 17h1v1h-1zM51 73h3v2h-3zM17 51h3v1h-3zM54 27h3v1h-3zM48 17h2v2h-2zM76 29h1v1h-1zM27 42h2v3h-2zM63 6h2v1h-2zM55 9h2v1h-2zM58 26h2v3h-2zM76 74h2v1h-2zM10 33h3v3h-3zM33 7h2v2h-2zM30 66h3v2h-3zM50 78h2v2h-2zM59 30h3v1h-3zM5 28h2v1h-2zM56 75h1v2h-1zM19 58h2v3h-2zM42 75h3v3h-3zM50 75h2v2h-2zM74 58h2v2h-2zM52 27h1v3h-1zM3 19h2v3h-2zM40 23h3v2h-3zM70 37h2v3h-2zM88 21h1v2h-1zM70 24h3v3h-3zM30 44h2v1h-2zM75 2h2v1h-2zM57 75h2v1h-2zM30 63h2v2h-2zM40 59h2v2h-2zM54 17h3v2h-3zM72 13h3v1h-3zM19 24h2v2h-2zM5 52h1v3h-1zM9 24h3v2h-3zM71 45h2v1h-2zM4 7h2v2h-2zM53 73h1v2h-1zM59 27h3v3h-3zM83 13h1v3h-1zM41 76h3v2h-3zM21 44h2v3h-2zM58 42h1v2h-1zM59 3h3v2h-3zM68 52h2v2h-2zM29 45h3v2h-3zM52 23h2v2h-2zM57 63h1v1h-1zM19 42h2v2h-2zM84 54h2v2h-2zM72 10h3v1h-3zM11 38h2v3h-2zM5 17h3v3h-3zM59 25h1v2h-1zM83 30h2v2h-2zM43 68h3v2h-3zM38 0h1v1h-1zM2 42h2v2h-2zM25 37h2v2h-2zM52 33h1v2h-1zM39 23h2v2h-2zM78 49h3v2h-3zM82 57h2v2h-2zM70 29h2v3h-2zM17 53h2v3h-2zM15 9h2v3h-2zM30 7h3v2h-3zM7 27h2v3h-2zM30 1h1v3h-1zM37 47h2v2h-2zM29 67h2v2h-2zM29 76h2v2h-2zM0 25h2v2h-2zM56 26h2v3h-2zM81 71h1v1h-1zM75 67h2v3h-2zM77 21h2v2h-2zM9 61h1v1h-1zM35 13h1v2h-1zM4 52h2v3h-2zM44 73h1v3h-1zM18 77h2v1h-2zM11 18h2v2h-2z"/><path fill="#900000" d="M6 0h2v1h-2zM35 43h3v3h-3zM23 23h1v1h-1zM38 69h2v2h-2zM62 10h2v2h-2zM60 29h2v2h-2zM55 23h2v1h-2zM65 6h1v1h-1zM21 71h2v3h-2zM13 56h3v1h-3zM68 2h3v1h-3zM59 26h3v1h-3zM17 56h1v2h-1zM45 30h1v1h-1zM69 41h3v1h-3zM74 62h2v2h-2zM79 59h2v2h-2zM40 44h1v2h-1zM29 1h1v1h-1zM69 16h3v2h-3zM50 53h2v1h-2zM25 52h1v1h-1zM12 63h2v2h-2zM23 15h1v2h-1zM82 50h1v2h-1zM86 23h3v2h-3zM25 50h2v2h-2zM57 10h1v1h-1zM11 77h2v2h-2zM24 33h1v1h-1zM14 53h1v2h-1zM65 50h3v3h-3zM84 20h1v2h-1zM74 36h3v2h-3zM62 15h2v3h-2zM61 1h2v2h-2zM70 11h1v1h-1zM40 60h2v2h-2zM42 12h2v2h-2zM72 63h1v2h-1zM49 6h2v2h-2zM51 60h3v2h-3zM25 73h3v1h-3zM7 60h3v3h-3zM51 73h2v1h-2zM22 0h2v2h-2zM8 5h2v2h-2zM44 7h1v2h-1zM9 61h3v2h-3zM8 45h2v2h-2zM64 69h2v2h-2zM44 1h1v2h-1zM18 59h3v1h-3zM54 8h3v2h-3zM76 43h2v2h-2zM48 76h2v1h-2zM68 56h2v1h-2zM82 34h2v1h-2zM83 32h2v1h-2zM16 37h2v3h-2zM17 39h1v2h-1zM51 34h2v1h-2zM75 77h2v2h-2zM79 51h2v1h-2zM82 21h1v3h-1zM35 70h2v1h-2zM58 20h2v1h-2zM49 66h3v1h-3zM50 30h3v1h-3zM2 71h1v3h-1zM12 40h3v1h-3zM51 74h2v3h-2zM49 15h2v2h-2zM72 23h2v1h-2zM32 76h3v1h-3zM26 57h3v1h-3zM12 53h2v2h-2zM57 64h3v2h-3zM63 66h3v2h-3zM0 6h3v3h-3zM45 9h3v3h-3zM29 11h2v2h-2zM68 55h3v2h-3zM9 56h3v3h-3zM41 63h1v2h-1zM87 40h3v1h-3zM83 13h2v2h-2zM63 64h2v1h-2zM54 8h3v1h-3zM55 9h1v2h-1zM16 48h2v1h-2zM46 35h3v1h-3zM74 25h2v1h-2zM23 64h3v2h-3zM17 35h1v1h-1zM29 45h3v1h-3zM88 22h3v3h-3zM56 34h3v3h-3zM75 19h2v1h-2zM74 21h3v2h-3zM87 70h2v2h-2zM21 31h2v1h-2zM52 70h2v2h-2zM44 51h2v2h-2zM51 17h2v3h-2zM14 31h2v1h-2zM76 73h1v2h-1zM70 41h2v3h-2zM58 16h2v1h-2zM43 31h3v1h-3zM45 23h2v1h-2zM59 69h2v1h-2zM73 30h2v2h-2zM63 54h3v3h-3zM80 61h3v2h-3zM5 3h2v3h-2zM26 18h2v3h-2zM62 23h2v2h-2zM2 39h3v2h-3zM0 52h2v3h-2zM53 63h2v2h-2zM73 14h2v3h-2zM63 59h1v2h-1zM63 72h3v2h-3zM56 19h1v2h-1zM14 24h2v2h-2zM83 0h1v1h-1zM37 50h1v3h-1zM52 8h3v1h-3zM75 71h2v2h-2zM8 47h1v2h-1zM13 48h2v3h-2zM36 34h1v1h-1zM11 38h3v1h-3zM68 5h2v2h-2zM58 32h3v1h-3zM28 9h1v1h-1zM57 50h1v3h-1zM61 59h2v3h-2zM70 24h2v1h-2zM74 24h1v2h-1zM35 21h1v3h-1zM31 55h2v1h-2zM3 39h2v1h-2zM17 42h2v1h-2zM4 16h1v2h-1zM86 44h2v2h-2zM61 38h2v2h-2zM49 12h2v1h-2zM23 77h1v1h-1zM56 37h2v1h-2zM25 7h2v2h-2zM78 4h2v2h-2zM23 5h1v1h-1zM74 10h2v2h-2zM12 38h2v1h-2zM61 3h2v3h-2zM36 74h3v1h-3zM55 9h3v2h-3zM12 21h3v2h-3zM63 9h3v3h-3zM86 20h2v2h-2zM35 27h2v2h-2zM76 39h3v3h-3zM11 15h3v1h-3zM40 39h2v2h-2zM85 9h1v2h-1zM34 26h2v1h-2zM55 9h3v2h-3zM47 18h3v3h-3zM36 64h2v2h-2zM45 10h2v3h-2zM25 38h1v1h-1zM42 54h2v2h-2zM63 54h2v1h-2zM19 8h2v1h-2zM86 24h1v2h-1zM11 25h2v1h-2zM78 52h2v2h-2zM16 19h1v3h-1zM73 11h1v1h-1zM78 44h1v2h-1zM61 33h3v3h-3zM27 65h1v2h-1zM32 65h3v3h-3zM35 73h2v3h-2zM10 61h2v2h-2zM86 63h3v2h-3zM23 53h2v2h-2zM0 57h1v3h-1zM56 55h2v3h-2zM74 4h3v1h-3zM88 30h2v1h-2zM6 6h1v1h-1zM15 71h2v2h-2zM55 76h2v2h-2zM47 27h2v2h-2zM48 57h2v1h-2zM30 59h3v2h-3zM59 35h2v1h-2zM1 18h2v2h-2zM41 10h3v2h-3zM9 61h1v1h-1zM10 62h2v2h-2zM51 53h2v3h-2zM34 73h2v3h-2zM76 21h1v3h-1zM64 62h2v2h-2zM2 61h2v2h-2zM30 29h2v1h-2zM39 9h1v2h-1zM14 42h3v2h-3zM87 45h3v1h-3zM17 44h2v3h-2zM43 41h1v1h-1zM71 13h2v1h-2zM2 25h1v2h-1zM56 62h2v3h-2zM34 36h2v1h-2zM61 3h2v2h-2zM25 71h2v3h-2zM46 41h2v1h-2zM63 61h1v2h-1zM2 27h2v2h-2zM1 27h3v2h-3zM26 3h1v1h-1zM78 55h2v3h-2zM8 20h2v2h-2zM31 26h1v2h-1zM0 3h2v2h-2zM12 15h2v1h-2zM24 15h2v2h-2zM14 42h2v2h-2zM22 77h2v2h-2zM41 45h3v3h-3zM83 29h2v3h-2zM40 57h2v3h-2zM1 30h2v3h-2zM28 11h2v3h-2zM25 20h3v2h-3zM74 31h2v2h-2zM47 47h2v2h-2zM6 16h3v2h-3zM19 32h2v2h-2zM0 77h2v3h-2zM33 17h2v2h-2zM14 48h1v2h-1zM51 21h2v1h-2zM63 43h1v2h-1zM6 50h3v1h-3zM88 20h2v2h-2zM26 58h2v2h-2zM62 21h3v1h-3zM74 37h2v3h-2zM19 8h2v2h-2zM18 67h2v2h-2zM70 43h2v2h-2zM51 29h1v3h-1zM33 3h1v3h-1zM71 13h2v2h-2zM36 22h2v2h-2zM52 2h2v3h-2zM36 34h2v3h-2zM34 59h3v3h-3zM81 73h1v1h-1zM28 63h2v2h-2zM87 15h2v2h-2zM12 76h2v3h-2zM46 10h1v2h-1zM85 48h2v2h-2zM63 12h3v2h-3zM27 29h3v1h-3zM29 45h2v3h-2zM22 14h2v1h-2zM0 66h1v2h-1zM10 23h2v1h-2zM5 30h3v2h-3zM0 12h2v2h-2zM24 51h2v1h-2zM4 29h1v3h-1zM6 36h2v1h-2zM72 41h2v2h-2zM83 56h3v2h-3zM22 25h2v2h-2zM23 13h2v1h-2zM19 1h2v2h-2zM34 47h3v1h-3z"/><path fill="#e01010" d="M16 14h2v2h-2zM33 63h2v3h-2zM81 59h3v2h-3zM8 25h2v2h-2zM23 15h3v2h-3zM42 12h2v2h-2zM67 63h2v3h-2zM3 20h3v3h-3zM1 33h2v3h-2zM2 73h3v1h-3zM58 34h2v1h-2zM70 71h1v1h-1zM59 3h3v2h-3zM39 48h3v1h-3zM58 32h2v2h-2zM12 28h2v3h-2zM62 37h2v1h-2zM26 41h2v2h-2zM52 3h3v2h-3zM44 72h1v2h-1zM28 7h2v3h-2zM83 22h2v3h-2zM39 6h2v3h-2zM45 32h2v1h-2zM50 23h2v1h-2zM11 41h1v1h-1zM46 70h3v2h-3zM2 15h2v3h-2zM9 59h2v3h-2zM77 15h3v1h-3zM59 2h2v1h-2zM20 72h2v3h-2zM72 54h1v2h-1zM36 42h1v2h-1zM74 7h3v2h-3zM35 20h1v1h-1zM85 65h3v2h-3zM69 61h3v1h-3zM51 22h1v2h-1zM27 40h2v1h-2zM76 1h1v3h-1zM21 56h1v2h-1zM59 11h1v2h-1zM51 35h3v1h-3zM7 60h3v2h-3zM61 34h2v1h-2zM51 56h1v3h-1zM26 23h1v1h-1zM20 62h1v2h-1zM18 9h3v1h-3zM60 64h1v3h-1zM82 67h1v1h-1zM20 51h2v2h-2zM80 35h1v1h-1zM69 0h3v1h-3zM14 21h3v3h-3zM52 72h2v1h-2zM53 50h1v3h-1zM57 78h2v2h-2zM75 78h3v2h-3zM43 29h1v3h-1zM77 0h2v3h-2zM40 8h1v3h-1zM41 57h2v2h-2zM85 46h2v1h-2zM69 3h2v3h-2zM68 69h1v2h-1zM41 20h2v1h-2zM10 11h2v2h-2zM52 23h2v2h-2zM6 50h2v1h-2zM78 63h1v2h-1zM77 63h2v3h-2zM42 34h2v2h-2zM53 17h2v1h-2zM20 1h1v2h-1zM84 69h2v1h-2zM79 56h2v2h-2zM15 6h1v2h-1zM50 65h2v1h-2zM20 31h2v2h-2zM64 19h2v2h-2zM29 60h1v1h-1zM65 77h3v2h-3zM70 26h2v3h-2zM83 62h1v3h-1zM81 38h2v2h-2zM73 37h1v2h-1zM54 38h1v1h-1zM70 44h2v2h-2zM37 49h3v2h-3zM58 15h3v3h-3zM44 8h3v2h-3zM46 55h2v2h-2zM81 23h3v3h-3zM5 78h3v2h-3zM52 70h1v2h-1zM33 22h2v1h-2zM20 31h2v2h-2zM60 10h2v3h-2zM45 28h1v1h-1zM11 52h3v1h-3zM9 32h1v1h-1zM71 53h3v1h-3zM55 60h2v3h-2zM42 27h2v1h-2zM81 11h3v2h-3zM82 67h2v1h-2zM84 56h2v2h-2zM35 23h1v3h-1zM66 77h3v1h-3zM8 6h3v2h-3zM47 56h1v1h-1zM65 35h2v3h-2zM5 35h1v2h-1zM16 3h2v1h-2zM87 30h2v3h-2zM77 26h3v1h-3zM48 18h2v2h-2zM7 44h2v3h-2zM11 41h3v1h-3zM80 70h3v1h-3zM17 48h2v2h-2zM84 70h2v3h-2zM54 50h2v2h-2zM28 31h3v2h-3zM34 30h1v2h-1zM32 45h1v2h-1zM87 42h2v3h-2zM59 22h3v3h-3zM16 66h2v2h-2zM19 20h2v2h-2zM46 36h3v2h-3zM3 64h1v2h-1zM11 63h2v3h-2zM46 18h2v2h-2zM26 18h3v1h-3zM85 54h2v3h-2zM83 50h2v3h-2zM22 75h2v2h-2zM88 11h2v2h-2zM32 42h1v2h-1zM29 45h3v2h-3zM4 76h2v2h-2zM30 71h1v1h-1zM58 33h2v3h-2zM87 28h3v1h-3zM17 60h2v1h-2zM60 47h3v2h-3zM65 32h1v3h-1zM30 76h2v1h-2zM42 78h2v2h-2zM86 13h2v1h-2zM41 56h2v3h-2zM1 77h2v2h-2zM22 4h2v1h-2zM66 15h3v2h-3zM60 1h3v1h-3zM78 50h2v2h-2zM14 76h2v3h-2zM87 14h3v2h-3zM37 14h1v3h-1zM23 37h2v1h-2zM8 5h2v1h-2zM14 35h3v2h-3zM57 22h3v1h-3zM66 42h2v2h-2zM77 31h1v3h-1zM61 24h2v1h-2zM12 78h2v1h-2zM86 31h2v2h-2zM4 22h2v3h-2zM80 1h2v3h-2zM43 50h3v2h-3zM26 36h2v2h-2zM41 2h2v3h-2zM87 36h2v2h-2zM30 60h3v3h-3zM4 5h2v1h-2zM23 25h2v3h-2zM27 57h2v3h-2zM35 59h3v3h-3zM8 27h1v3h-1zM65 47h2v2h-2zM25 68h1v2h-1zM37 11h1v2h-1zM23 76h1v2h-1zM2 53h1v3h-1zM81 51h2v3h-2zM80 66h3v1h-3zM81 64h2v3h-2zM28 65h3v3h-3zM71 30h2v1h-2zM65 43h3v2h-3zM62 52h3v1h-3zM41 15h1v3h-1zM32 42h2v2h-2zM45 40h1v2h-1zM27 39h2v3h-2zM52 70h1v2h-1zM70 17h1v2h-1zM50 61h2v2h-2zM74 34h1v3h-1zM45 46h3v2h-3zM82 62h2v1h-2zM62 46h1v3h-1zM51 31h2v2h-2zM63 39h2v3h-2zM86 28h2v3h-2zM46 55h2v2h-2zM72 18h2v2h-2zM40 57h2v2h-2zM35 63h1v2h-1zM23 56h2v2h-2zM1 25h1v3h-1zM83 42h3v2h-3zM59 38h1v1h-1zM4 41h2v1h-2zM8 47h1v2h-1zM48 0h2v1h-2zM85 55h1v1h-1zM27 14h1v2h-1zM57 46h2v2h-2zM44 53h1v3h-1zM83 26h3v2h-3zM0 41h2v3h-2zM63 18h2v2h-2zM38 71h3v2h-3zM53 16h2v2h-2zM76 19h1v2h-1zM20 20h2v2h-2zM79 25h2v2h-2zM19 19h2v2h-2zM22 65h2v2h-2zM31 2h3v1h-3zM80 4h3v2h-3zM30 2h2v1h-2zM62 35h1v3h-1zM43 19h3v2h-3zM68 4h2v3h-2zM77 31h3v1h-3zM49 2h2v2h-2zM77 51h2v2h-2zM12 21h2v2h-2zM29 29h2v2h-2zM49 51h2v2h-2zM13 58h2v2h-2zM84 31h2v3h-2zM77 49h3v1h-3zM15 63h3v2h-3zM38 66h2v2h-2zM39 28h2v1h-2zM14 52h2v3h-2zM26 6h1v2h-1zM58 42h2v1h-2zM73 18h1v1h-1zM50 28h1v3h-1zM35 32h1v1h-1zM62 52h2v2h-2zM32 41h1v1h-1zM46 72h2v3h-2zM81 18h3v1h-3zM46 49h2v2h-2zM73 76h1v2h-1zM4 3h2v2h-2zM39 78h1v3h-1zM76 60h2v1h-2zM61 10h2v2h-2zM34 62h3v1h-3zM61 59h3v1h-3zM65 18h3v1h-3zM54 4h2v3h-2zM7 36h2v2h-2zM70 74h2v3h-2zM34 58h2v2h-2zM21 9h2v2h-2zM18 23h3v3h-3zM77 31h3v2h-3zM38 44h2v3h-2zM56 61h3v2h-3zM53 61h1v2h-1zM40 74h2v2h-2zM69 28h2v2h-2zM85 67h2v1h-2zM76 55h2v3h-2zM79 67h1v1h-1zM31 34h2v2h-2zM40 56h1v2h-1zM2 1h2v2h-2zM27 38h2v1h-2zM27 39h2v2h-2zM55 61h2v1h-2zM44 21h3v3h-3zM69 14h2v2h-2zM48 9h1v2h-1zM48 44h2v2h-2zM43 72h2v3h-2zM17 10h3v2h-3zM21 68h3v2h-3zM62 73h1v1h-1zM51 61h1v3h-1zM30 34h2v2h-2zM56 17h3v3h-3zM33 16h2v2h-2zM53 73h3v1h-3zM86 56h2v2h-2zM84 18h3v2h-3zM44 62h2v2h-2zM16 64h1v2h-1zM31 33h2v1h-2zM65 40h2v1h-2zM5 65h3v2h-3zM39 53h2v3h-2zM55 74h1v1h-1zM27 47h2v3h-2zM43 15h1v2h-1zM46 2h3v1h-3zM57 32h1v3h-1zM27 54h1v1h-1zM32 4h2v2h-2zM24 68h2v3h-2zM87 49h2v3h-2zM39 76h2v2h-2z"/><path fill="#ff2020" d="M32 16h1v3h-1zM41 62h2v1h-2zM59 15h2v2h-2zM41 27h2v2h-2zM48 63h1v3h-1zM66 38h3v2h-3zM30 60h3v2h-3zM85 2h2v2h-2zM86 53h2v2h-2zM58 33h1v2h-1zM46 63h2v2h-2zM1 15h1v2h-1zM16 25h3v2h-3zM1 70h2v2h-2zM45 58h2v3h-2zM12 47h1v3h-1zM14 17h1v3h-1zM33 19h3v1h-3zM33 50h3v2h-3zM23 71h2v1h-2zM57 48h2v2h-2zM0 44h1v2h-1zM40 24h2v3h-2zM7 54h1v1h-1zM48 73h2v1h-2zM85 6h3v3h-3zM45 7h2v2h-2zM84 51h2v2h-2zM25 34h3v1h-3zM59 60h3v2h-3zM86 54h1v2h-1zM43 4h2v2h-2zM64 42h1v3h-1zM65 69h1v1h-1zM66 64h2v2h-2zM74 11h2v2h-2zM70 61h3v3h-3zM60 46h2v1h-2zM40 28h1v2h-1zM66 61h2v2h-2zM88 71h2v1h-2zM70 51h2v1h-2zM2 64h1v3h-1zM28 76h3v1h-3zM88 25h3v2h-3zM76 47h2v1h-2zM56 29h1v3h-1zM31 75h2v2h-2zM46 27h1v2h-1zM16 63h3v3h-3zM4 50h3v2h-3zM63 34h1v3h-1zM46 64h2v3h-2zM22 20h2v3h-2zM54 2h2v2h-2zM1 38h2v1h-2zM17 58h2v2h-2zM40 25h1v1h-1zM76 4h1v1h-1zM31 40h1v3h-1zM43 45h3v1h-3zM41 50h1v1h-1zM65 37h2v3h-2zM12 29h2v2h-2zM49 7h2v2h-2zM71 24h3v3h-3zM56 54h2v3h-2zM45 2h1v3h-1zM6 14h3v2h-3zM45 11h1v2h-1zM74 41h2v2h-2zM8 32h2v3h-2zM84 73h2v2h-2zM42 72h1v2h-1zM19 37h2v3h-2zM50 68h2v2h-2zM31 2h3v2h-3zM0 12h2v3h-2zM36 50h2v2h-2zM51 26h2v1h-2zM23 52h3v2h-3zM34 27h3v3h-3zM54 7h3v1h-3zM47 13h2v3h-2zM64 37h2v2h-2zM3 33h3v1h-3zM34 11h1v2h-1zM74 3h3v2h-3zM47 45h2v1h-2zM45 25h1v1h-1zM31 8h1v3h-1zM31 17h2v2h-2zM16 61h2v1h-2zM86 6h3v2h-3zM14 66h2v1h-2zM8 50h3v3h-3zM82 27h3v2h-3zM72 73h3v3h-3zM81 58h2v2h-2zM18 24h2v2h-2zM27 6h2v3h-2zM60 12h3v1h-3zM44 71h2v2h-2zM40 36h2v2h-2zM68 42h2v2h-2zM78 55h3v2h-3zM45 3h1v3h-1zM54 61h1v3h-1zM13 17h2v2h-2zM3 9h2v1h-2zM8 64h3v1h-3zM73 57h2v2h-2zM81 36h1v2h-1zM84 76h2v3h-2zM59 21h1v1h-1zM43 29h1v2h-1zM76 33h2v2h-2zM13 31h2v2h-2zM46 47h3v3h-3zM7 21h2v3h-2zM75 39h3v3h-3zM63 10h2v3h-2zM28 3h2v2h-2zM18 76h1v2h-1zM61 42h3v2h-3zM76 39h3v2h-3zM5 39h1v2h-1zM30 76h1v2h-1zM4 71h2v1h-2zM27 60h2v3h-2zM3 61h2v1h-2zM70 42h2v1h-2zM20 71h2v2h-2zM55 55h3v2h-3zM42 7h2v2h-2zM10 2h1v2h-1zM57 38h2v2h-2zM19 2h3v3h-3zM4 1h1v2h-1zM9 39h2v3h-2zM4 39h3v2h-3zM31 27h1v2h-1zM64 43h2v2h-2zM7 39h2v1h-2zM18 3h2v2h-2zM72 29h2v2h-2zM20 18h1v1h-1zM71 48h1v2h-1zM67 49h2v3h-2zM0 9h2v2h-2zM30 47h3v3h-3zM10 72h1v1h-1zM82 43h3v2h-3zM56 0h2v1h-2zM47 51h1v1h-1zM13 56h1v3h-1zM46 74h2v3h-2zM81 53h2v1h-2zM28 43h3v1h-3zM71 58h3v3h-3zM35 28h2v2h-2zM74 53h3v2h-3zM69 35h1v2h-1zM2 43h2v2h-2zM6 58h2v2h-2zM60 4h3v3h-3zM28 63h3v2h-3zM84 68h2v1h-2zM63 21h3v2h-3zM53 45h3v2h-3zM59 30h1v1h-1zM82 39h2v2h-2zM65 60h2v2h-2zM16 41h1v1h-1zM88 39h2v1h-2zM40 16h1v1h-1zM71 68h2v3h-2zM22 67h1v1h-1zM44 36h2v3h-2zM38 31h1v1h-1zM27 30h3v3h-3zM26 72h3v3h-3zM14 23h2v2h-2zM67 70h2v2h-2zM53 10h2v2h-2zM40 48h2v2h-2zM73 35h1v3h-1zM35 56h2v3h-2zM30 35h2v1h-2zM0 46h2v1h-2zM24 40h1v3h-1zM43 17h2v3h-2zM13 22h3v2h-3zM79 40h2v3h-2zM29 58h2v2h-2zM8 61h2v3h-2zM67 25h1v2h-1zM44 19h2v1h-2zM86 8h3v2h-3zM12 55h3v2h-3zM64 55h2v3h-2zM42 59h3v2h-3zM0 65h2v2h-2zM14 31h3v2h-3zM6 72h1v1h-1zM53 70h1v3h-1zM88 42h1v2h-1zM16 31h2v3h-2zM54 0h3v3h-3zM23 23h2v1h-2zM58 77h1v3h-1zM88 2h3v2h-3zM60 63h2v1h-2zM88 51h3v2h-3zM73 47h1v2h-1zM46 21h1v3h-1zM4 73h1v1h-1zM86 22h3v2h-3zM24 30h3v2h-3zM15 64h2v1h-2zM36 60h2v2h-2zM74 31h3v1h-3zM79 64h3v3h-3zM35 67h2v2h-2zM48 4h2v2h-2zM39 22h2v2h-2zM42 27h2v2h-2zM81 16h2v2h-2zM52 66h2v3h-2zM38 35h2v3h-2zM51 58h1v2h-1zM48 46h3v2h-3zM84 46h2v1h-2zM69 53h1v2h-1zM50 71h2v1h-2zM19 29h3v3h-3zM60 50h2v1h-2zM58 44h2v2h-2zM15 50h1v2h-1zM26 7h3v3h-3zM63 19h2v3h-2zM67 32h2v2h-2zM6 11h3v1h-3zM19 69h2v2h-2zM69 43h2v2h-2zM85 61h2v3h-2zM26 70h2v2h-2zM87 60h1v1h-1zM78 52h2v1h-2zM13 57h2v3h-2zM15 16h2v2h-2zM51 10h2v2h-2zM56 12h2v1h-2zM88 18h1v2h-1zM55 73h2v2h-2zM55 44h1v2h-1zM0 38h1v2h-1zM51 33h3v2h-3zM0 3h2v2h-2zM8 23h2v2h-2zM68 56h1v3h-1zM27 61h1v3h-1zM18 2h2v2h-2zM5 12h3v2h-3zM17 67h3v1h-3zM79 39h3v1h-3z"/><path fill="#d00000" d="M71 33h2v3h-2zM64 61h1v1h-1zM34 68h2v2h-2zM40 12h3v1h-3zM8 7h2v1h-2zM4 65h3v2h-3zM8 45h2v3h-2zM60 25h1v2h-1zM21 37h3v2h-3zM81 73h2v2h-2zM23 27h1v2h-1zM28 47h1v2h-1zM54 5h1v2h-1zM50 78h1v2h-1zM47 15h1v2h-1zM70 60h3v2h-3zM20 34h2v2h-2zM12 18h2v2h-2zM13 26h3v1h-3zM55 69h3v2h-3zM52 32h3v3h-3zM38 5h1v3h-1zM87 63h2v3h-2zM69 43h2v1h-2zM19 50h2v1h-2zM37 11h2v1h-2zM17 70h2v1h-2zM3 6h1v2h-1zM19 33h2v2h-2zM53 10h3v3h-3zM79 56h3v3h-3zM1 4h3v1h-3zM12 78h3v2h-3zM67 66h2v3h-2zM88 63h1v3h-1zM2 60h2v3h-2zM29 5h3v3h-3zM13 0h2v2h-2zM74 4h3v3h-3zM46 49h2v3h-2zM8 26h2v2h-2zM77 16h2v3h-2zM21 7h2v2h-2zM47 14h2v2h-2zM66 42h2v2h-2zM0 5h3v1h-3zM23 5h2v2h-2zM44 54h2v2h-2zM88 59h2v2h-2zM10 78h1v3h-1zM82 71h3v1h-3zM74 74h2v1h-2zM70 22h2v2h-2zM46 31h1v2h-1zM28 54h2v1h-2zM72 57h3v2h-3zM54 77h1v2h-1zM78 52h3v1h-3zM39 35h3v2h-3zM4 77h1v2h-1zM20 5h2v2h-2zM48 12h1v2h-1zM42 28h1v1h-1zM27 26h1v3h-1zM3 56h1v2h-1zM42 78h2v2h-2zM32 38h2v1h-2zM18 25h2v3h-2zM26 46h3v2h-3zM73 32h1v2h-1zM64 66h2v2h-2zM58 53h3v2h-3zM47 11h1v3h-1zM46 43h2v3h-2zM40 34h3v1h-3zM70 69h1v2h-1zM75 71h2v3h-2zM77 29h2v2h-2zM16 11h3v2h-3zM22 15h2v2h-2zM1 20h2v1h-2zM63 55h3v1h-3zM49 20h2v2h-2zM85 29h2v2h-2zM27 36h3v2h-3zM39 20h1v2h-1zM62 8h3v2h-3zM14 28h1v3h-1zM60 52h2v2h-2zM71 19h2v1h-2zM35 60h2v2h-2zM37 15h2v3h-2zM38 9h2v2h-2zM12 33h2v3h-2zM52 58h2v2h-2zM49 28h2v3h-2zM82 3h2v3h-2zM75 73h2v1h-2zM28 53h1v2h-1zM86 35h3v1h-3zM8 16h1v2h-1zM54 57h3v1h-3zM67 7h1v2h-1zM42 24h1v2h-1zM79 1h1v3h-1zM55 11h1v2h-1zM75 6h2v1h-2zM31 53h3v2h-3zM74 74h2v2h-2zM13 49h2v3h-2zM33 34h2v3h-2zM52 77h2v1h-2zM83 54h3v2h-3zM25 34h2v2h-2zM84 58h3v2h-3zM23 44h1v1h-1zM46 63h2v2h-2zM35 29h1v2h-1zM87 78h1v1h-1zM82 48h2v3h-2zM68 18h2v3h-2zM35 48h1v1h-1zM48 76h1v3h-1zM30 34h2v1h-2zM17 51h3v3h-3zM26 58h1v2h-1zM87 18h1v1h-1zM67 75h1v3h-1zM24 51h1v1h-1zM40 39h1v1h-1zM39 63h2v2h-2zM72 44h2v2h-2zM0 48h3v2h-3zM26 60h2v1h-2zM48 55h2v1h-2zM36 78h3v3h-3zM5 17h2v2h-2zM54 22h3v2h-3zM78 26h1v2h-1zM49 31h3v3h-3zM37 33h2v2h-2zM11 70h1v2h-1zM11 26h2v1h-2zM70 48h2v2h-2zM39 41h2v1h-2zM15 51h2v3h-2zM15 32h2v2h-2zM16 50h3v1h-3zM48 19h2v2h-2zM84 23h2v2h-2zM47 26h1v3h-1zM76 20h3v2h-3zM39 14h3v3h-3zM35 18h2v2h-2zM1 26h2v2h-2zM54 35h2v2h-2zM68 46h2v2h-2zM73 34h1v3h-1zM62 30h2v2h-2zM48 10h1v3h-1zM35 36h1v1h-1zM56 54h2v1h-2zM53 61h3v1h-3zM18 5h2v3h-2zM76 57h1v1h-1zM22 14h3v1h-3zM65 58h2v2h-2zM21 49h2v2h-2zM77 64h2v3h-2zM27 66h2v3h-2zM76 39h1v2h-1zM46 44h2v2h-2zM61 71h3v3h-3zM69 60h3v2h-3zM34 8h3v2h-3zM61 68h2v2h-2zM24 25h1v2h-1zM64 20h1v2h-1zM80 43h2v3h-2zM37 60h2v1h-2zM11 46h2v2h-2zM19 7h2v3h-2zM27 76h2v3h-2zM71 66h1v3h-1zM60 68h2v1h-2zM19 62h2v1h-2zM2 59h2v1h-2zM28 6h3v3h-3zM72 4h3v3h-3zM53 13h2v2h-2zM37 75h1v1h-1zM23 46h1v2h-1zM72 5h2v1h-2zM52 51h3v1h-3zM33 71h2v2h-2zM27 57h2v2h-2zM57 44h2v1h-2zM11 4h1v1h-1zM76 38h3v2h-3zM50 38h3v2h-3zM67 38h3v1h-3zM9 7h2v2h-2zM14 55h2v3h-2zM32 3h1v2h-1zM21 14h1v3h-1zM29 54h2v2h-2zM4 65h1v2h-1zM84 70h1v2h-1zM28 10h3v2h-3zM65 46h3v1h-3zM59 77h3v2h-3zM5 7h2v2h-2zM58 6h2v2h-2zM41 62h3v2h-3zM11 18h3v2h-3zM43 25h3v1h-3zM10 73h1v2h-1zM54 50h3v3h-3zM46 66h2v3h-2zM65 7h2v2h-2zM11 7h2v1h-2zM42 42h2v2h-2zM42 37h2v2h-2zM15 8h2v3h-2zM13 16h1v2h-1zM1 62h2v3h-2zM10 66h1v2h-1zM40 78h2v3h-2zM19 0h3v3h-3zM65 46h2v1h-2zM26 38h2v2h-2zM24 14h1v1h-1zM1 27h1v1h-1zM3 63h1v2h-1zM52 32h3v2h-3zM39 52h3v2h-3zM4 15h2v2h-2zM16 60h2v2h-2zM43 66h2v1h-2zM32 48h1v1h-1zM22 38h3v2h-3zM8 52h2v3h-2zM5 31h3v1h-3zM21 4h3v1h-3zM46 35h1v2h-1zM29 60h1v1h-1zM18 57h2v3h-2zM1 50h3v3h-3zM38 57h2v3h-2zM12 69h1v2h-1zM78 18h2v2h-2zM74 49h1v3h-1zM3 51h1v2h-1zM43 50h3v2h-3zM49 4h1v2h-1zM25 11h2v1h-2z"/></pattern><mask id="resmask"><rect x="0" y="100" width="1280" height="900" fill="#fff"/><polygon points="364,263 606,193 644,228 680,270 690,345 640,345 530,357 445,404 425,382 398,350 363,338" fill="#000"/><polygon points="191,548 259.7,524.5 330,494 374.5,494 480,480 480,545 461,602 414,611 405,620 348.7,639 257,681.5" fill="#000"/><polygon points="460,411 565,407 683,479 690,561 665,633 611,637 554,569 480,545 480,466" fill="#000"/><polygon points="626,407 719,407 719,475 658,475" fill="#000"/><polygon points="147,724 229,699 269,727 320,671 320,704 305,788 193,773 162,788" fill="#000"/><polygon points="640,226 792,183 833,185 879,246 802,254 782,312 640,345" fill="#000"/><polygon points="264,450 330,430 356,470 292.5,494" fill="#000"/></mask><clipPath id="farm2"><polygon points="191,548 259.7,524.5 330,494 374.5,494 480,480 480,545 461,602 414,611 405,620 348.7,639 257,681.5"/><polygon points="460,411 565,407 683,479 690,561 665,633 611,637 554,569 480,545 480,466"/></clipPath></defs><polygon points="0,375 364,263 364,414 0,414" fill="#8a8d82"/><polygon points="0,416 70,416 86,459 19.5,476 0,435" fill="#b4b8b4"/><polygon points="86,416 125,416 135,431 105,441 90,435" fill="#cdd0d2"/><polygon points="125,414 364,414 356,470 264,450 248,419 190,440 110,470 86,459" fill="#8a8c84"/><polygon points="19.5,476 86,459 248,419 264,450 292,494 260,522 195,548 68,587" fill="#7c7f72"/><polygon points="248,419 320,416 330,430 264,450" fill="#62666a"/><polygon points="264,450 330,430 356,470 292.5,494" fill="#a9a283"/><polygon points="330,414 414,414 442.5,470 356,470" fill="#a6aaa6"/><polygon points="345,418 405,416 425,450 362,455" fill="#b8bcbc"/><polygon points="150,562 187,554 193,572 156,582" fill="#c4c0b0"/><polygon points="154,566 166,564 168,578 157,578" fill="#252530"/><polygon points="191,548 259.7,524.5 330,494 374.5,494 480,480 480,545 461,602 414,611 405,620 348.7,639 257,681.5" fill="#7c8060"/><polygon points="186,541 259.7,522 330,494 340,492 262,528 194,552" fill="#b0a080"/><polygon points="194,550 229,541 248,574 210.5,578" fill="#8a8c68"/><polygon points="229,541 259.7,527 273.7,557 241,571" fill="#6d7c4f"/><polygon points="259.7,522 292.5,510.5 311,541 273.7,555" fill="#6a6a50"/><polygon points="292.5,508 330,499 344,529 311,541" fill="#7a7a58"/><polygon points="330,494 374.5,503.4 381.5,517.5 344,529" fill="#4e4038"/><polygon points="374.5,494 480,480 480,487 381.5,517.5" fill="#a89878"/><polygon points="372,470 395.6,468 405,489 379,494" fill="#547a48"/><polygon points="344,494 405,468 480,466 480,480 374.5,494" fill="#a89a7a"/><polygon points="210.5,578 248,571.4 264,611 222,620.6" fill="#7c8058"/><polygon points="248,560 278,555 285.5,578 252.6,583" fill="#516d40"/><polygon points="281,550 325,538.6 337,592.5 297,602" fill="#6e7050"/><polygon points="316,536 348.7,536 391,611 344,620.6" fill="#7e8260"/><polygon points="259.7,581 297,574 306.5,604 269,611" fill="#566d44"/><polygon points="309,597 344,590 351,616 318,623" fill="#426d44"/><polygon points="222,620.6 269,611 288,667.5 250,679" fill="#7a8058"/><polygon points="269,611 318,602 320.6,639 288,644" fill="#8a8e68"/><polygon points="353.4,538.6 374.5,534 402.6,611 386,616" fill="#6d815d"/><polygon points="374.5,522 414,515 437.8,555 398,569" fill="#4c6d3e"/><polygon points="414,510 480,489 480,543 437.8,552.6" fill="#517348"/><polygon points="402.6,566.7 437.8,559.7 461,602 414,611" fill="#a09a80"/><polygon points="426,560 454,555 456.5,583 433,585.5" fill="#517c48"/><polygon points="180,480 288,480 259.7,524.5 191.7,548 180,534" fill="#8a8e88"/><polygon points="391,611 414,611 480,634 470,660 400,680" fill="#8a8c80"/><polygon points="364,263 606,193 644,228 540,255 480,266 364,300" fill="#9a9a7e"/><polygon points="530,357 680,340 690,400 560,410" fill="#7c7f72"/><polygon points="365,263 430,245 440,262 365,285" fill="#647a51"/><polygon points="365,275 442,260 450,280 367.5,290" fill="#8d9670"/><polygon points="425,275 452,271 456,282 430,285" fill="#6e6650"/><polygon points="437,245 520,225 535,240 442,255" fill="#b8aa90"/><polygon points="451,247 487,237 495,265 455,267" fill="#557c48"/><polygon points="480,240 515,236 520,255 485,257" fill="#718156"/><polygon points="522,217 605,194 642,227 540,255" fill="#6e7a62"/><polygon points="470,265 607,255 612,305 510,320" fill="#a6a08c"/><polygon points="364,300 470,265 510,320 530,380 440,400 364,414" fill="#9c9c80"/><polygon points="385,310 420,305 425,322 390,327" fill="#517c44"/><polygon points="402,327 470,307 477,325 407,342" fill="#548146"/><polygon points="417,345 480,325 487,340 422,355" fill="#5f814f"/><polygon points="365,330 400,320 420,360 370,375" fill="#a0a07a"/><polygon points="455,342 515,335 525,360 460,370" fill="#b0a688"/><polygon points="402,360 525,345 530,375 432,395" fill="#6a7050"/><polygon points="363,338 398,350 425,382 445,404 445,414 364,414" fill="#7a7e72"/><polygon points="522,330 552,324 560,330 525,337" fill="#302438"/><polygon points="525,337 562,330 572,355 532,357" fill="#446f3f"/><polygon points="562,317 595,310 600,342 572,342" fill="#4d7a44"/><polygon points="580,307 610,302 622,335 597,342" fill="#426d3d"/><polygon points="607,300 645,290 667,340 625,342" fill="#487142"/><polygon points="587,277 612,275 617,300 595,302" fill="#477c44"/><polygon points="532,375 567,372 587,387 555,400" fill="#40343c"/><polygon points="617,385 640,380 642,400 622,402" fill="#5f8a4f"/><polygon points="632,375 657,370 660,385 637,387" fill="#6d9056"/><polygon points="657,275 680,270 680,310 665,305" fill="#37482b"/><polygon points="640,226 792,183 802,246 640,251" fill="#9c9888"/><polygon points="711,208 747,203 744,218 716,221" fill="#c0c4c4"/><polygon points="668,241 716,236 731,256 678,272" fill="#547e49"/><polygon points="792,195 833,185 879,246 802.5,254" fill="#a89c80"/><polygon points="802.5,221 851,210.6 919,271.6 873.7,271.6" fill="#a09a84"/><polygon points="792,254 879,246 922,277 802.5,317" fill="#7e8474"/><polygon points="703.5,271.6 767,266.5 772,287 711,289" fill="#a4a080"/><polygon points="652.7,271.6 675.6,266.5 680.6,284 655,287" fill="#3a3a30"/><polygon points="640,289 691,282 698,332.5 660,345" fill="#547c4f"/><polygon points="660,284 703.5,279 724,327.5 691,332.5" fill="#5f8a5d"/><polygon points="782,312 802.5,312 805,325 782,325" fill="#7c8a56"/><polygon points="640,345 762,335 746.7,386 640,424" fill="#7c7e72"/><polygon points="698,406 726,398.6 731,430 701,430" fill="#3a4830"/><polygon points="801,320 923,277 1114,433 1205,506 807,690 740,560 720,420 760,360" fill="#7e8a74"/><polygon points="900,345 975,345 975,382 900,382" fill="#526146"/><polygon points="975,382 1110,432 1205,506 975,506" fill="#8a9088"/><polygon points="800,345 875,335 880,432 805,440" fill="#888a78"/><polygon points="792,183 833,185 879,246 802.5,254" fill="#a89c80"/><polygon points="882,290 915,287.5 910,300 885,302.5" fill="#dfe3e6"/><polygon points="827.5,330 847.5,332.5 845,345 830,345" fill="#e6e8ee"/><polygon points="955,330 985,327.5 985,335 957.5,340" fill="#e6eaee"/><polygon points="890,342.5 907.5,342.5 910,352.5 892.5,352.5" fill="#c0b0a0"/><polygon points="880,365 902.5,367.5 900,375 882.5,375" fill="#e6e6e6"/><polygon points="815,365 842.5,375 840,385 820,382.5" fill="#a89880"/><polygon points="960,385 975,382.5 980,392.5 965,395" fill="#e6e6e6"/><polygon points="900,400 1000,370 1090,430 920,440" fill="#8c9088"/><polygon points="912,430 1050,383 1056,390 916,438" fill="#a8acb0"/><polygon points="694,400 805,400 805,698 672,698" fill="#828680"/><polygon points="728,420 792.5,420 786.6,461 725,496" fill="#a4a8aa"/><polygon points="751,455 792.5,449 798,478.6 754,490" fill="#5e6268"/><polygon points="710,502 804,478.6 807,561 728,578" fill="#7a7e70"/><polygon points="763,543 792.5,546 798,578 769,575" fill="#5e6656"/><polygon points="690,566.6 804,561 804,643 693,631" fill="#989c9c"/><polygon points="713,584 737,584 737,596 713,596" fill="#e0e0e2"/><polygon points="745.6,569.6 786.6,569.6 786.6,590 745.6,590" fill="#eeeeee"/><polygon points="704.5,602 722,602 722,613.5 704.5,613.5" fill="#e6e6e6"/><polygon points="789.6,619 807,619 807,631 789.6,631" fill="#dedede"/><polygon points="678,643 807,625 807,720 693,720" fill="#868a7c"/><polygon points="625.7,407 719,407 719,475 658,475" fill="#4c5a3a"/><polygon points="460.5,411 564.7,407 575.6,472 478.5,472" fill="#afa487"/><polygon points="518,443 532,443 532,461 518,461" fill="#dcdcdc"/><polygon points="493,454 582.6,447 647,482.6 511,508" fill="#6e7050"/><polygon points="482,526 507,522 511,536 486,540" fill="#302038"/><polygon points="536,518 593,508 608,540 550,551" fill="#5d8851"/><polygon points="593,482.6 683,479 690,561.5 611,568.7" fill="#a8a286"/><polygon points="611,572 654,565 665,633 618.5,637" fill="#497342"/><polygon points="647,544 676,536 683,565 647,572" fill="#517c48"/><polygon points="360,400 460.5,400 485.7,482.6 360,518.5" fill="#868a80"/><polygon points="15,608 208,590 178,697 71,752.5 25,636" fill="#6e7064"/><polygon points="129.5,702 165,691.6 170,712 137,719.5" fill="#a09a78"/><polygon points="185,676 208,674 216,702 193,704" fill="#b0a484"/><polygon points="211,590 320,590 320,653.5 254,674 218.4,610" fill="#838a66"/><polygon points="292,641 320,636 320,656 297,661" fill="#a0a898"/><polygon points="147,724.6 228.6,699 269,727 193,773 162.5,788 152,768" fill="#5f7c4f"/><polygon points="218,702 264,689 269,727 228.6,732" fill="#548148"/><polygon points="236,727 269,725 272,745 241,747.5" fill="#9a9070"/><polygon points="162.5,765 190.5,760 195.6,783 167.6,788" fill="#5f8a4f"/><polygon points="282,707 312.4,704 312.4,730 287,732" fill="#9a7a68"/><polygon points="289.5,674 320,671 320,704 292,709" fill="#5f8a56"/><polygon points="254,750 292,747.5 305,788 264,791" fill="#8a7a6a"/><polygon points="213,768 254,763 269,808 228.6,813.5" fill="#9a9ea0"/><polygon points="76,752.6 162.5,732 203,850 106.7,850" fill="#808478"/><polygon points="124.7,801 170.6,795 183.7,850.6 137.8,857" fill="#8a7262"/><polygon points="229.6,798 262.4,795 272,821 236,827.6" fill="#b0b4b8"/><polygon points="190,818 226,814.5 229.6,840.7 196.8,844" fill="#a8acb0"/><polygon points="197,864 416.6,778 416.6,896.5 239.4,959" fill="#767a6c"/><polygon points="320,590 400,569 414,611 391,611 320,660" fill="#8a8a6c"/><polygon points="0,375 364,263 364,414 0,414" fill="none" stroke="#b4ac90" stroke-width="1.2" opacity="0.55"/><polygon points="19.5,476 86,459 248,419 264,450 292,494 260,522 195,548 68,587" fill="none" stroke="#b4ac90" stroke-width="1.2" opacity="0.55"/><polygon points="191,548 259.7,524.5 330,494 374.5,494 480,480 480,545 461,602 414,611 405,620 348.7,639 257,681.5" fill="none" stroke="#b4ac90" stroke-width="1.2" opacity="0.55"/><polygon points="194,550 229,541 248,574 210.5,578" fill="none" stroke="#b4ac90" stroke-width="1.2" opacity="0.55"/><polygon points="229,541 259.7,527 273.7,557 241,571" fill="none" stroke="#b4ac90" stroke-width="1.2" opacity="0.55"/><polygon points="259.7,522 292.5,510.5 311,541 273.7,555" fill="none" stroke="#b4ac90" stroke-width="1.2" opacity="0.55"/><polygon points="292.5,508 330,499 344,529 311,541" fill="none" stroke="#b4ac90" stroke-width="1.2" opacity="0.55"/><polygon points="372,470 395.6,468 405,489 379,494" fill="none" stroke="#b4ac90" stroke-width="1.2" opacity="0.55"/><polygon points="210.5,578 248,571.4 264,611 222,620.6" fill="none" stroke="#b4ac90" stroke-width="1.2" opacity="0.55"/><polygon points="248,560 278,555 285.5,578 252.6,583" fill="none" stroke="#b4ac90" stroke-width="1.2" opacity="0.55"/><polygon points="281,550 325,538.6 337,592.5 297,602" fill="none" stroke="#b4ac90" stroke-width="1.2" opacity="0.55"/><polygon points="316,536 348.7,536 391,611 344,620.6" fill="none" stroke="#b4ac90" stroke-width="1.2" opacity="0.55"/><polygon points="259.7,581 297,574 306.5,604 269,611" fill="none" stroke="#b4ac90" stroke-width="1.2" opacity="0.55"/><polygon points="309,597 344,590 351,616 318,623" fill="none" stroke="#b4ac90" stroke-width="1.2" opacity="0.55"/><polygon points="222,620.6 269,611 288,667.5 250,679" fill="none" stroke="#b4ac90" stroke-width="1.2" opacity="0.55"/><polygon points="269,611 318,602 320.6,639 288,644" fill="none" stroke="#b4ac90" stroke-width="1.2" opacity="0.55"/><polygon points="353.4,538.6 374.5,534 402.6,611 386,616" fill="none" stroke="#b4ac90" stroke-width="1.2" opacity="0.55"/><polygon points="374.5,522 414,515 437.8,555 398,569" fill="none" stroke="#b4ac90" stroke-width="1.2" opacity="0.55"/><polygon points="414,510 480,489 480,543 437.8,552.6" fill="none" stroke="#b4ac90" stroke-width="1.2" opacity="0.55"/><polygon points="426,560 454,555 456.5,583 433,585.5" fill="none" stroke="#b4ac90" stroke-width="1.2" opacity="0.55"/><polygon points="391,611 414,611 480,634 470,660 400,680" fill="none" stroke="#b4ac90" stroke-width="1.2" opacity="0.55"/><polygon points="364,263 606,193 644,228 540,255 480,266 364,300" fill="none" stroke="#b4ac90" stroke-width="1.2" opacity="0.55"/><polygon points="530,357 680,340 690,400 560,410" fill="none" stroke="#b4ac90" stroke-width="1.2" opacity="0.55"/><polygon points="365,263 430,245 440,262 365,285" fill="none" stroke="#b4ac90" stroke-width="1.2" opacity="0.55"/><polygon points="365,275 442,260 450,280 367.5,290" fill="none" stroke="#b4ac90" stroke-width="1.2" opacity="0.55"/><polygon points="451,247 487,237 495,265 455,267" fill="none" stroke="#b4ac90" stroke-width="1.2" opacity="0.55"/><polygon points="480,240 515,236 520,255 485,257" fill="none" stroke="#b4ac90" stroke-width="1.2" opacity="0.55"/><polygon points="522,217 605,194 642,227 540,255" fill="none" stroke="#b4ac90" stroke-width="1.2" opacity="0.55"/><polygon points="364,300 470,265 510,320 530,380 440,400 364,414" fill="none" stroke="#b4ac90" stroke-width="1.2" opacity="0.55"/><polygon points="385,310 420,305 425,322 390,327" fill="none" stroke="#b4ac90" stroke-width="1.2" opacity="0.55"/><polygon points="402,327 470,307 477,325 407,342" fill="none" stroke="#b4ac90" stroke-width="1.2" opacity="0.55"/><polygon points="417,345 480,325 487,340 422,355" fill="none" stroke="#b4ac90" stroke-width="1.2" opacity="0.55"/><polygon points="365,330 400,320 420,360 370,375" fill="none" stroke="#b4ac90" stroke-width="1.2" opacity="0.55"/><polygon points="402,360 525,345 530,375 432,395" fill="none" stroke="#b4ac90" stroke-width="1.2" opacity="0.55"/><polygon points="363,338 398,350 425,382 445,404 445,414 364,414" fill="none" stroke="#b4ac90" stroke-width="1.2" opacity="0.55"/><polygon points="525,337 562,330 572,355 532,357" fill="none" stroke="#b4ac90" stroke-width="1.2" opacity="0.55"/><polygon points="562,317 595,310 600,342 572,342" fill="none" stroke="#b4ac90" stroke-width="1.2" opacity="0.55"/><polygon points="580,307 610,302 622,335 597,342" fill="none" stroke="#b4ac90" stroke-width="1.2" opacity="0.55"/><polygon points="607,300 645,290 667,340 625,342" fill="none" stroke="#b4ac90" stroke-width="1.2" opacity="0.55"/><polygon points="587,277 612,275 617,300 595,302" fill="none" stroke="#b4ac90" stroke-width="1.2" opacity="0.55"/><polygon points="617,385 640,380 642,400 622,402" fill="none" stroke="#b4ac90" stroke-width="1.2" opacity="0.55"/><polygon points="632,375 657,370 660,385 637,387" fill="none" stroke="#b4ac90" stroke-width="1.2" opacity="0.55"/><polygon points="657,275 680,270 680,310 665,305" fill="none" stroke="#b4ac90" stroke-width="1.2" opacity="0.55"/><polygon points="668,241 716,236 731,256 678,272" fill="none" stroke="#b4ac90" stroke-width="1.2" opacity="0.55"/><polygon points="792,254 879,246 922,277 802.5,317" fill="none" stroke="#b4ac90" stroke-width="1.2" opacity="0.55"/><polygon points="652.7,271.6 675.6,266.5 680.6,284 655,287" fill="none" stroke="#b4ac90" stroke-width="1.2" opacity="0.55"/><polygon points="640,289 691,282 698,332.5 660,345" fill="none" stroke="#b4ac90" stroke-width="1.2" opacity="0.55"/><polygon points="660,284 703.5,279 724,327.5 691,332.5" fill="none" stroke="#b4ac90" stroke-width="1.2" opacity="0.55"/><polygon points="782,312 802.5,312 805,325 782,325" fill="none" stroke="#b4ac90" stroke-width="1.2" opacity="0.55"/><polygon points="640,345 762,335 746.7,386 640,424" fill="none" stroke="#b4ac90" stroke-width="1.2" opacity="0.55"/><polygon points="698,406 726,398.6 731,430 701,430" fill="none" stroke="#b4ac90" stroke-width="1.2" opacity="0.55"/><polygon points="801,320 923,277 1114,433 1205,506 807,690 740,560 720,420 760,360" fill="none" stroke="#b4ac90" stroke-width="1.2" opacity="0.55"/><polygon points="900,345 975,345 975,382 900,382" fill="none" stroke="#b4ac90" stroke-width="1.2" opacity="0.55"/><polygon points="800,345 875,335 880,432 805,440" fill="none" stroke="#b4ac90" stroke-width="1.2" opacity="0.55"/><polygon points="710,502 804,478.6 807,561 728,578" fill="none" stroke="#b4ac90" stroke-width="1.2" opacity="0.55"/><polygon points="763,543 792.5,546 798,578 769,575" fill="none" stroke="#b4ac90" stroke-width="1.2" opacity="0.55"/><polygon points="678,643 807,625 807,720 693,720" fill="none" stroke="#b4ac90" stroke-width="1.2" opacity="0.55"/><polygon points="625.7,407 719,407 719,475 658,475" fill="none" stroke="#b4ac90" stroke-width="1.2" opacity="0.55"/><polygon points="493,454 582.6,447 647,482.6 511,508" fill="none" stroke="#b4ac90" stroke-width="1.2" opacity="0.55"/><polygon points="536,518 593,508 608,540 550,551" fill="none" stroke="#b4ac90" stroke-width="1.2" opacity="0.55"/><polygon points="611,572 654,565 665,633 618.5,637" fill="none" stroke="#b4ac90" stroke-width="1.2" opacity="0.55"/><polygon points="647,544 676,536 683,565 647,572" fill="none" stroke="#b4ac90" stroke-width="1.2" opacity="0.55"/><polygon points="360,400 460.5,400 485.7,482.6 360,518.5" fill="none" stroke="#b4ac90" stroke-width="1.2" opacity="0.55"/><polygon points="15,608 208,590 178,697 71,752.5 25,636" fill="none" stroke="#b4ac90" stroke-width="1.2" opacity="0.55"/><polygon points="211,590 320,590 320,653.5 254,674 218.4,610" fill="none" stroke="#b4ac90" stroke-width="1.2" opacity="0.55"/><polygon points="292,641 320,636 320,656 297,661" fill="none" stroke="#b4ac90" stroke-width="1.2" opacity="0.55"/><polygon points="147,724.6 228.6,699 269,727 193,773 162.5,788 152,768" fill="none" stroke="#b4ac90" stroke-width="1.2" opacity="0.55"/><polygon points="218,702 264,689 269,727 228.6,732" fill="none" stroke="#b4ac90" stroke-width="1.2" opacity="0.55"/><polygon points="162.5,765 190.5,760 195.6,783 167.6,788" fill="none" stroke="#b4ac90" stroke-width="1.2" opacity="0.55"/><polygon points="289.5,674 320,671 320,704 292,709" fill="none" stroke="#b4ac90" stroke-width="1.2" opacity="0.55"/><polygon points="76,752.6 162.5,732 203,850 106.7,850" fill="none" stroke="#b4ac90" stroke-width="1.2" opacity="0.55"/><polygon points="197,864 416.6,778 416.6,896.5 239.4,959" fill="none" stroke="#b4ac90" stroke-width="1.2" opacity="0.55"/><polygon points="320,590 400,569 414,611 391,611 320,660" fill="none" stroke="#b4ac90" stroke-width="1.2" opacity="0.55"/><ellipse cx="203" cy="737" rx="26" ry="19" fill="#c8c6c0"/><ellipse cx="203" cy="737" rx="14" ry="12" fill="#519048"/><path d="M184 733l10-4 4 16-9 4z" fill="#903838"/><g clip-path="url(#farm2)"><path d="M875.9 -56.8L-875.9 356.8M875.8 -54.9L-875.8 359.7M875.7 -53.0L-875.7 362.6M875.6 -51.1L-875.6 365.5M875.5 -49.1L-875.5 368.4M875.3 -47.2L-875.3 371.3M875.2 -45.3L-875.2 374.2M875.1 -43.3L-875.1 377.1M875.0 -41.4L-875.0 380.0M874.9 -39.4L-874.9 383.0M874.8 -37.5L-874.8 385.9M874.6 -35.5L-874.6 388.8M874.5 -33.5L-874.5 391.8M874.4 -31.6L-874.4 394.7M874.3 -29.6L-874.3 397.7M874.2 -27.6L-874.2 400.6M874.0 -25.6L-874.0 403.6M873.9 -23.6L-873.9 406.6M873.8 -21.7L-873.8 409.5M873.7 -19.7L-873.7 412.5M873.6 -17.7L-873.6 415.5M873.4 -15.7L-873.4 418.5M873.3 -13.6L-873.3 421.5M873.2 -11.6L-873.2 424.5M873.1 -9.6L-873.1 427.5M872.9 -7.6L-872.9 430.5M872.8 -5.6L-872.8 433.6M872.7 -3.6L-872.7 436.6M872.6 -1.5L-872.6 439.6M872.4 0.5L-872.4 442.7M872.3 2.6L-872.3 445.7M872.2 4.6L-872.2 448.7M872.0 6.7L-872.0 451.8M871.9 8.7L-871.9 454.9M871.8 10.8L-871.8 457.9M871.7 12.8L-871.7 461.0M871.5 14.9L-871.5 464.1M871.4 17.0L-871.4 467.2M871.3 19.0L-871.3 470.3M871.1 21.1L-871.1 473.4M871.0 23.2L-871.0 476.5M870.9 25.3L-870.9 479.6M870.7 27.4L-870.7 482.7M870.6 29.5L-870.6 485.8M870.5 31.6L-870.5 489.0M870.3 33.7L-870.3 492.1M870.2 35.8L-870.2 495.2M870.1 37.9L-870.1 498.4M869.9 40.0L-869.9 501.5M869.8 42.2L-869.8 504.7M869.6 44.3L-869.6 507.9M869.5 46.4L-869.5 511.0M869.4 48.6L-869.4 514.2M869.2 50.7L-869.2 517.4M869.1 52.9L-869.1 520.6M868.9 55.0L-868.9 523.8M868.8 57.2L-868.8 527.0M868.7 59.3L-868.7 530.2M868.5 61.5L-868.5 533.4M868.4 63.7L-868.4 536.6M868.2 65.8L-868.2 539.8M868.1 68.0L-868.1 543.1M867.9 70.2L-867.9 546.3M867.8 72.4L-867.8 549.6M867.7 74.6L-867.7 552.8M867.5 76.8L-867.5 556.1M867.4 79.0L-867.4 559.3M867.2 81.2L-867.2 562.6M867.1 83.4L-867.1 565.9M866.9 85.6L-866.9 569.2M866.8 87.8L-866.8 572.4M866.6 90.1L-866.6 575.7M866.5 92.3L-866.5 579.0M866.3 94.5L-866.3 582.3M866.2 96.8L-866.2 585.7M866.0 99.0L-866.0 589.0M865.9 101.3L-865.9 592.3M865.7 103.5L-865.7 595.6M865.6 105.8L-865.6 599.0M865.4 108.0L-865.4 602.3M865.2 110.3L-865.2 605.7M865.1 112.6L-865.1 609.0M864.9 114.9L-864.9 612.4M864.8 117.1L-864.8 615.8M864.6 119.4L-864.6 619.1M864.5 121.7L-864.5 622.5M864.3 124.0L-864.3 625.9M864.1 126.3L-864.1 629.3M864.0 128.6L-864.0 632.7M863.8 130.9L-863.8 636.1M863.7 133.3L-863.7 639.6M863.5 135.6L-863.5 643.0M863.3 137.9L-863.3 646.4M863.2 140.2L-863.2 649.8M863.0 142.6L-863.0 653.3M862.9 144.9L-862.9 656.7M862.7 147.3L-862.7 660.2M862.5 149.6L-862.5 663.7M862.4 152.0L-862.4 667.1M862.2 154.3L-862.2 670.6M862.0 156.7L-862.0 674.1M861.9 159.1L-861.9 677.6M861.7 161.5L-861.7 681.1M861.5 163.8L-861.5 684.6M861.3 166.2L-861.3 688.1M861.2 168.6L-861.2 691.6M861.0 171.0L-861.0 695.1M860.8 173.4L-860.8 698.6M860.7 175.8L-860.7 702.2M860.5 178.2L-860.5 705.7M860.3 180.7L-860.3 709.3M860.1 183.1L-860.1 712.8M860.0 185.5L-860.0 716.4M859.8 187.9L-859.8 720.0M859.6 190.4L-859.6 723.5M859.4 192.8L-859.4 727.1M859.3 195.3L-859.3 730.7M859.1 197.7L-859.1 734.3M858.9 200.2L-858.9 737.9M858.7 202.7L-858.7 741.5M858.5 205.1L-858.5 745.1M858.4 207.6L-858.4 748.8M858.2 210.1L-858.2 752.4M858.0 212.6L-858.0 756.0M857.8 215.1L-857.8 759.7M857.6 217.6L-857.6 763.3M857.4 220.1L-857.4 767.0M857.3 222.6L-857.3 770.7M857.1 225.1L-857.1 774.3M856.9 227.6L-856.9 778.0M856.7 230.1L-856.7 781.7M856.5 232.7L-856.5 785.4M856.3 235.2L-856.3 789.1M856.1 237.7L-856.1 792.8M856.0 240.3L-856.0 796.5M855.8 242.8L-855.8 800.2M855.6 245.4L-855.6 804.0M855.4 248.0L-855.4 807.7M855.2 250.5L-855.2 811.4M855.0 253.1L-855.0 815.2M854.8 255.7L-854.8 818.9M854.6 258.3L-854.6 822.7M854.4 260.9L-854.4 826.5M854.2 263.5L-854.2 830.3M854.0 266.1L-854.0 834.0M853.8 268.7L-853.8 837.8M853.6 271.3L-853.6 841.6M853.4 273.9L-853.4 845.4M853.2 276.5L-853.2 849.3M853.0 279.1L-853.0 853.1M852.8 281.8L-852.8 856.9M852.6 284.4L-852.6 860.7M852.4 287.1L-852.4 864.6M852.2 289.7L-852.2 868.4M852.0 292.4L-852.0 872.3M851.8 295.0L-851.8 876.2M851.6 297.7L-851.6 880.0M851.4 300.4L-851.4 883.9M851.2 303.1L-851.2 887.8M851.0 305.8L-851.0 891.7M850.8 308.5L-850.8 895.6M850.6 311.2L-850.6 899.5M850.4 313.9L-850.4 903.4M850.1 316.6L-850.1 907.3M849.9 319.3L-849.9 911.3M849.7 322.0L-849.7 915.2M849.5 324.7L-849.5 919.2M849.3 327.5L-849.3 923.1M849.1 330.2L-849.1 927.1M848.9 333.0L-848.9 931.0M848.6 335.7L-848.6 935.0M848.4 338.5L-848.4 939.0M848.2 341.2L-848.2 943.0M848.0 344.0L-848.0 947.0M847.8 346.8L-847.8 951.0M847.6 349.6L-847.6 955.0M847.3 352.3L-847.3 959.0M847.1 355.1L-847.1 963.1M846.9 357.9L-846.9 967.1M846.7 360.7L-846.7 971.1M846.4 363.6L-846.4 975.2M846.2 366.4L-846.2 979.3M846.0 369.2L-846.0 983.3M845.8 372.0L-845.8 987.4M845.5 374.9L-845.5 991.5M845.3 377.7L-845.3 995.6M845.1 380.6L-845.1 999.7M844.9 383.4L-844.9 1003.8M844.6 386.3L-844.6 1007.9M844.4 389.1L-844.4 1012.0M844.2 392.0L-844.2 1016.1M843.9 394.9L-843.9 1020.3M843.7 397.8L-843.7 1024.4M843.5 400.7L-843.5 1028.6M843.2 403.6L-843.2 1032.7M843.0 406.5L-843.0 1036.9M842.8 409.4L-842.8 1041.1M842.5 412.3L-842.5 1045.2M842.3 415.2L-842.3 1049.4M842.1 418.2L-842.1 1053.6M841.8 421.1L-841.8 1057.8M841.6 424.1L-841.6 1062.1M841.3 427.0L-841.3 1066.3M841.1 430.0L-841.1 1070.5M840.8 432.9L-840.8 1074.7M840.6 435.9L-840.6 1079.0M840.4 438.9L-840.4 1083.2M840.1 441.9L-840.1 1087.5M839.9 444.8L-839.9 1091.8M839.6 447.8L-839.6 1096.0M839.4 450.8L-839.4 1100.3M839.1 453.9L-839.1 1104.6M838.9 456.9L-838.9 1108.9M838.6 459.9L-838.6 1113.2M838.4 462.9L-838.4 1117.6M838.1 466.0L-838.1 1121.9M837.9 469.0L-837.9 1126.2M837.6 472.0L-837.6 1130.6M837.4 475.1L-837.4 1134.9M837.1 478.2L-837.1 1139.3M836.8 481.2L-836.8 1143.6M836.6 484.3L-836.6 1148.0M836.3 487.4L-836.3 1152.4M836.1 490.5L-836.1 1156.8M835.8 493.6L-835.8 1161.2M835.6 496.7L-835.6 1165.6M835.3 499.8L-835.3 1170.0M835.0 502.9L-835.0 1174.4M834.8 506.0L-834.8 1178.8M834.5 509.2L-834.5 1183.3M834.2 512.3L-834.2 1187.7M834.0 515.4L-834.0 1192.2M833.7 518.6L-833.7 1196.7M833.4 521.8L-833.4 1201.1M833.2 524.9L-833.2 1205.6M832.9 528.1L-832.9 1210.1M832.6 531.3L-832.6 1214.6M832.4 534.5L-832.4 1219.1M832.1 537.6L-832.1 1223.6M831.8 540.8L-831.8 1228.1M831.5 544.1L-831.5 1232.7M831.3 547.3L-831.3 1237.2M831.0 550.5L-831.0 1241.8M830.7 553.7L-830.7 1246.3M830.4 557.0L-830.4 1250.9M830.2 560.2L-830.2 1255.4M829.9 563.4L-829.9 1260.0M829.6 566.7L-829.6 1264.6M829.3 570.0L-829.3 1269.2M829.0 573.2L-829.0 1273.8M828.7 576.5L-828.7 1278.4M828.5 579.8L-828.5 1283.1M828.2 583.1L-828.2 1287.7M827.9 586.4L-827.9 1292.3M827.6 589.7L-827.6 1297.0M827.3 593.0L-827.3 1301.7M827.0 596.3L-827.0 1306.3M826.7 599.7L-826.7 1311.0M826.5 603.0L-826.5 1315.7M826.2 606.3L-826.2 1320.4M825.9 609.7L-825.9 1325.1M825.6 613.1L-825.6 1329.8M825.3 616.4L-825.3 1334.5M825.0 619.8L-825.0 1339.2M824.7 623.2L-824.7 1344.0M824.4 626.6L-824.4 1348.7M824.1 630.0L-824.1 1353.5M823.8 633.4L-823.8 1358.2M823.5 636.8L-823.5 1363.0M823.2 640.2L-823.2 1367.8M822.9 643.6L-822.9 1372.6M822.6 647.1L-822.6 1377.4M822.3 650.5L-822.3 1382.2M822.0 654.0L-822.0 1387.0M821.7 657.4L-821.7 1391.8M821.4 660.9L-821.4 1396.7M821.1 664.3L-821.1 1401.5M820.8 667.8L-820.8 1406.3M820.5 671.3L-820.5 1411.2M820.1 674.8L-820.1 1416.1M819.8 678.3L-819.8 1421.0M819.5 681.8L-819.5 1425.8M819.2 685.3L-819.2 1430.7M818.9 688.9L-818.9 1435.6M818.6 692.4L-818.6 1440.6M818.3 695.9L-818.3 1445.5M817.9 699.5L-817.9 1450.4M817.6 703.1L-817.6 1455.4M817.3 706.6L-817.3 1460.3M817.0 710.2L-817.0 1465.3M816.7 713.8L-816.7 1470.2M816.3 717.4L-816.3 1475.2M816.0 721.0L-816.0 1480.2M815.7 724.6L-815.7 1485.2M815.4 728.2L-815.4 1490.2M815.0 731.8L-815.0 1495.2M814.7 735.4L-814.7 1500.2M814.4 739.1L-814.4 1505.3M814.1 742.7L-814.1 1510.3M813.7 746.4L-813.7 1515.4M813.4 750.0L-813.4 1520.4M813.1 753.7L-813.1 1525.5M812.7 757.4L-812.7 1530.6M812.4 761.1L-812.4 1535.7M812.1 764.8L-812.1 1540.8M811.7 768.5L-811.7 1545.9M811.4 772.2L-811.4 1551.0M811.1 775.9L-811.1 1556.1M810.7 779.6L-810.7 1561.2M810.4 783.4L-810.4 1566.4M810.0 787.1L-810.0 1571.5M809.7 790.9L-809.7 1576.7M809.4 794.6L-809.4 1581.9M809.0 798.4L-809.0 1587.1M808.7 802.2L-808.7 1592.2M808.3 806.0L-808.3 1597.4M808.0 809.8L-808.0 1602.7M807.6 813.6L-807.6 1607.9M807.3 817.4L-807.3 1613.1M806.9 821.2L-806.9 1618.3M806.6 825.0L-806.6 1623.6M806.2 828.9L-806.2 1628.9M805.9 832.7L-805.9 1634.1M805.5 836.6L-805.5 1639.4M805.2 840.5L-805.2 1644.7M804.8 844.3L-804.8 1650.0M804.5 848.2L-804.5 1655.3M804.1 852.1L-804.1 1660.6M803.7 856.0L-803.7 1665.9M803.4 859.9L-803.4 1671.3M803.0 863.8L-803.0 1676.6M802.7 867.8L-802.7 1682.0M802.3 871.7L-802.3 1687.3M801.9 875.6L-801.9 1692.7M801.6 879.6L-801.6 1698.1M801.2 883.5L-801.2 1703.5M800.8 887.5L-800.8 1708.9" stroke="#404830" stroke-width="1" opacity="0.25" fill="none"/></g><rect x="0" y="108" width="1280" height="850" fill="url(#spk3)" opacity="0.35"/><polyline points="829,108 800,155 782,184 775,206 787,256 777,300 764,356 751,388 736,420 703,536 675,651 667,700 652,790 615,958" fill="none" stroke="#7e8480" stroke-width="4.5" stroke-linejoin="round" opacity="0.85"/><polyline points="817,122 793,160 776,184 769,206 781,256 771,300 757,356 744,388 728,420 695,536 667,651 659,700 644,790 607,958" fill="none" stroke="#7e8480" stroke-width="4.5" stroke-linejoin="round" opacity="0.85"/><polyline points="792,180 786,205 795,255 786,320" fill="none" stroke="#b8c0c8" stroke-width="2" opacity="0.8"/><polyline points="159,791 260,749" fill="none" stroke="#7e8480" stroke-width="3.5" stroke-linejoin="round" opacity="0.85"/><polyline points="435,242 472,285 500,315 532,355" fill="none" stroke="#7e8480" stroke-width="3" stroke-linejoin="round" opacity="0.85"/><polyline points="234,416 290,510" fill="none" stroke="#202420" stroke-width="2"/><polyline points="957,312 762,381 655,419 360,524 215,578" fill="none" stroke="#7e8480" stroke-width="4.5" stroke-linejoin="round" opacity="0.85"/><polyline points="0,784 74,754 131,734 355,658 554,569 683,515 806,472" fill="none" stroke="#7e8480" stroke-width="4.5" stroke-linejoin="round" opacity="0.85"/><polyline points="0,937 123,883 323,795 400,768 671,648 806,594" fill="none" stroke="#7e8480" stroke-width="4.5" stroke-linejoin="round" opacity="0.85"/><polyline points="163,504 276,720 328,805 402,959" fill="none" stroke="#7e8480" stroke-width="4" stroke-linejoin="round" opacity="0.85"/><polyline points="428,403 486,483 568,587" fill="none" stroke="#7e8480" stroke-width="4" stroke-linejoin="round" opacity="0.85"/><polyline points="540,400 583,445 640,470 698.6,537 766,610.6 807,654.6" fill="none" stroke="#606466" stroke-width="4" stroke-linejoin="round" opacity="0.85"/><g mask="url(#resmask)"><rect x="0" y="108" width="1280" height="850" fill="url(#spk1)" opacity="0.35"/><rect x="0" y="108" width="1280" height="850" fill="url(#spk2)" opacity="0.2"/><rect x="0" y="108" width="1280" height="850" fill="url(#spk4)" opacity="0.8"/><rect x="0" y="108" width="1280" height="850" fill="url(#spk5)" opacity="0.55"/></g><rect x="0" y="108" width="1280" height="850" fill="url(#spk1)" opacity="0.2"/><polygon points="0,416 70,416 86,459 19.5,476 0,435" fill="#b4b8b4" opacity="0.55"/><polygon points="86,416 125,416 135,431 105,441 90,435" fill="#cdd0d2" opacity="0.55"/><polygon points="264,450 330,430 356,470 292.5,494" fill="#a9a283" opacity="0.55"/><polygon points="330,414 414,414 442.5,470 356,470" fill="#a6aaa6" opacity="0.55"/><polygon points="345,418 405,416 425,450 362,455" fill="#b8bcbc" opacity="0.55"/><polygon points="150,562 187,554 193,572 156,582" fill="#c4c0b0" opacity="0.55"/><polygon points="186,541 259.7,522 330,494 340,492 262,528 194,552" fill="#b0a080" opacity="0.55"/><polygon points="437,245 520,225 535,240 442,255" fill="#b8aa90" opacity="0.55"/><polygon points="455,342 515,335 525,360 460,370" fill="#b0a688" opacity="0.55"/><polygon points="711,208 747,203 744,218 716,221" fill="#c0c4c4" opacity="0.55"/><polygon points="882,290 915,287.5 910,300 885,302.5" fill="#dfe3e6" opacity="0.55"/><polygon points="827.5,330 847.5,332.5 845,345 830,345" fill="#e6e8ee" opacity="0.55"/><polygon points="955,330 985,327.5 985,335 957.5,340" fill="#e6eaee" opacity="0.55"/><polygon points="890,342.5 907.5,342.5 910,352.5 892.5,352.5" fill="#c0b0a0" opacity="0.55"/><polygon points="880,365 902.5,367.5 900,375 882.5,375" fill="#e6e6e6" opacity="0.55"/><polygon points="960,385 975,382.5 980,392.5 965,395" fill="#e6e6e6" opacity="0.55"/><polygon points="912,430 1050,383 1056,390 916,438" fill="#a8acb0" opacity="0.55"/><polygon points="728,420 792.5,420 786.6,461 725,496" fill="#a4a8aa" opacity="0.55"/><polygon points="713,584 737,584 737,596 713,596" fill="#e0e0e2" opacity="0.55"/><polygon points="745.6,569.6 786.6,569.6 786.6,590 745.6,590" fill="#eeeeee" opacity="0.55"/><polygon points="704.5,602 722,602 722,613.5 704.5,613.5" fill="#e6e6e6" opacity="0.55"/><polygon points="789.6,619 807,619 807,631 789.6,631" fill="#dedede" opacity="0.55"/><polygon points="460.5,411 564.7,407 575.6,472 478.5,472" fill="#afa487" opacity="0.55"/><polygon points="518,443 532,443 532,461 518,461" fill="#dcdcdc" opacity="0.55"/><polygon points="593,482.6 683,479 690,561.5 611,568.7" fill="#a8a286" opacity="0.55"/><polygon points="185,676 208,674 216,702 193,704" fill="#b0a484" opacity="0.55"/><polygon points="292,641 320,636 320,656 297,661" fill="#a0a898" opacity="0.55"/><polygon points="229.6,798 262.4,795 272,821 236,827.6" fill="#b0b4b8" opacity="0.55"/><polygon points="190,818 226,814.5 229.6,840.7 196.8,844" fill="#a8acb0" opacity="0.55"/><g mask="url(#resmask)"><path d="M-467.3 73.7L-132.7 1842.3M-448.9 76.4L-87.1 1839.6M-430.3 79.2L-41.7 1836.8M-411.6 82.3L3.6 1833.7M-392.7 85.5L48.7 1830.5M-373.7 88.9L93.7 1827.1M-354.6 92.4L138.6 1823.6M-335.2 96.1L183.2 1819.9M-315.8 100.0L227.8 1816.0M-296.1 104.0L272.1 1812.0M-276.3 108.2L316.3 1807.8M-256.2 112.4L360.2 1803.6M-236.0 116.8L404.0 1799.2M-215.7 121.3L447.7 1794.7M-195.1 126.0L491.1 1790.0M-174.3 130.7L534.3 1785.3M-153.4 135.5L577.4 1780.5M-132.2 140.4L620.2 1775.6M-110.9 145.4L662.9 1770.6M-89.3 150.5L705.3 1765.5M-67.6 155.6L747.6 1760.4M-45.7 160.8L789.7 1755.2M-23.5 166.0L831.5 1750.0M-1.2 171.3L873.2 1744.7M21.3 176.7L914.7 1739.3M44.0 182.1L956.0 1733.9M66.9 187.5L997.1 1728.5M90.0 192.9L1038.0 1723.1M113.3 198.4L1078.7 1717.6M136.8 203.9L1119.2 1712.1M160.4 209.4L1159.6 1706.6M184.3 214.9L1199.7 1701.1M208.3 220.4L1239.7 1695.6M232.5 225.9L1279.5 1690.1M256.8 231.5L1319.2 1684.5M281.4 237.0L1358.6 1679.0M306.1 242.5L1397.9 1673.5M331.0 248.0L1437.0 1668.0M356.0 253.4L1476.0 1662.6M381.2 258.9L1514.8 1657.1M406.6 264.3L1553.4 1651.7M432.1 269.8L1591.9 1646.2M457.7 275.1L1630.3 1640.9M483.5 280.5L1668.5 1635.5M509.5 285.8L1706.5 1630.2M535.6 291.2L1744.4 1624.8M561.8 296.4L1782.2 1619.6M588.2 301.7L1819.8 1614.3M614.7 306.9L1857.3 1609.1M641.3 312.0L1894.7 1604.0M668.1 317.2L1931.9 1598.8M695.0 322.2L1969.0 1593.8M722.0 327.3L2006.0 1588.7M749.1 332.3L2042.9 1583.7M875.9 -56.8L-875.9 356.8M874.6 -35.7L-874.6 388.5M873.3 -14.1L-873.3 420.8M872.0 8.0L-872.0 453.9M870.5 30.7L-870.5 487.6M869.0 53.8L-869.0 522.0M867.5 77.5L-867.5 557.2M865.8 101.8L-865.8 593.1M864.1 126.6L-864.1 629.8M862.4 152.0L-862.4 667.2M860.5 178.0L-860.5 705.4M858.6 204.7L-858.6 744.4M856.6 231.9L-856.6 784.3M854.5 259.8L-854.5 824.9M852.3 288.3L-852.3 866.4M850.1 317.6L-850.1 908.8M847.7 347.5L-847.7 952.1M845.3 378.2L-845.3 996.2M842.8 409.5L-842.8 1041.3M840.1 441.7L-840.1 1087.2M837.4 474.6L-837.4 1134.2M834.6 508.3L-834.6 1182.1M831.6 542.8L-831.6 1230.9M828.6 578.2L-828.6 1280.8M825.5 614.4L-825.5 1331.7M822.2 651.5L-822.2 1383.6M818.8 689.5L-818.8 1436.5M815.4 728.5L-815.4 1490.6M811.8 768.4L-811.8 1545.7M808.0 809.2L-808.0 1601.9M804.2 851.1L-804.2 1659.3" stroke="#a4a8a0" stroke-width="2" opacity="0.45" fill="none"/></g></g><g clip-path="url(#csmall)"><rect x="500" y="800" width="220" height="160" fill="#7e8878"/><polygon points="592.8,827.8 613.4,831 611.7,841.5 596,841.5" fill="#e4e6ea"/><polygon points="610,821 629,823 629,829.5 612,829.5" fill="#b8c4d8"/><polygon points="531,886 546.4,893 546.4,903 534,901.7" fill="#dfe2e8"/><polygon points="572,939.5 594.5,941 593,955 574,953" fill="#e8e8ea"/><polygon points="670,882.8 692.4,889.7 690.7,896.5 670,893" fill="#e0e2e4"/><polygon points="550,876 568.7,872.5 568.7,881 551.5,884.5" fill="#b8a898"/><polygon points="589,907 608,908.6 606.5,917 591,917" fill="#b8aa9c"/><polygon points="672,896.5 697.6,896.5 702.7,908.6 678.7,913.7" fill="#66885a"/><polygon points="560,880 600,860 620,900 580,920" fill="#5e6e50"/><rect x="500" y="800" width="220" height="160" fill="url(#spk1)" opacity="0.55"/><rect x="500" y="800" width="220" height="160" fill="url(#spk2)" opacity="0.5"/><polygon points="592.8,827.8 613.4,831 611.7,841.5 596,841.5" fill="#e4e6ea" opacity="0.55"/><polygon points="610,821 629,823 629,829.5 612,829.5" fill="#b8c4d8" opacity="0.55"/><polygon points="531,886 546.4,893 546.4,903 534,901.7" fill="#dfe2e8" opacity="0.55"/><polygon points="572,939.5 594.5,941 593,955 574,953" fill="#e8e8ea" opacity="0.55"/><polygon points="670,882.8 692.4,889.7 690.7,896.5 670,893" fill="#e0e2e4" opacity="0.55"/><polygon points="550,876 568.7,872.5 568.7,881 551.5,884.5" fill="#b8a898" opacity="0.55"/><polygon points="589,907 608,908.6 606.5,917 591,917" fill="#b8aa9c" opacity="0.55"/></g><polyline points="830.1,108.7 801.1,155.7 783.2,184.6 776.3,205.9 788.3,256.0 778.3,300.3 765.2,356.4 752.2,388.5 737.2,420.4 704.3,536.3 676.3,651.3 668.3,700.2 653.3,790.3 616.3,958.3" fill="none" stroke="#f0a800" stroke-width="1.8" stroke-dasharray="2.5 1"/><polyline points="827.9,107.3 798.9,154.3 780.8,183.4 773.7,206.1 785.7,256.0 775.7,299.7 762.8,355.6 749.8,387.5 734.8,419.6 701.7,535.7 673.7,650.7 665.7,699.8 650.7,789.7 613.7,957.7" fill="none" stroke="#f0a800" stroke-width="1.8" stroke-dasharray="2.5 1"/><polyline points="818.1,122.7 794.1,160.7 777.2,184.6 770.3,205.9 782.3,256.0 772.3,300.3 758.2,356.4 745.2,388.5 729.2,420.4 696.3,536.3 668.3,651.3 660.3,700.2 645.3,790.3 608.3,958.3" fill="none" stroke="#f0a800" stroke-width="1.8" stroke-dasharray="2.5 1"/><polyline points="815.9,121.3 791.9,159.3 774.8,183.4 767.7,206.1 779.7,256.0 769.7,299.7 755.8,355.6 742.8,387.5 726.8,419.6 693.7,535.7 665.7,650.7 657.7,699.8 642.7,789.7 605.7,957.7" fill="none" stroke="#f0a800" stroke-width="1.8" stroke-dasharray="2.5 1"/><g fill="none" stroke="#f0a800" stroke-width="1.6" stroke-dasharray="2 1.5"><ellipse cx="730" cy="387" rx="8" ry="6"/><ellipse cx="758" cy="392" rx="9" ry="7"/><path d="M722 400q10 -8 20 -12M745 380q10 -2 18 8"/></g><polyline points="158.5,789.9 259.5,747.9" fill="none" stroke="#f0a800" stroke-width="1.4" stroke-dasharray="2.5 1"/><polyline points="159.5,792.1 260.5,750.1" fill="none" stroke="#f0a800" stroke-width="1.4" stroke-dasharray="2.5 1"/><polyline points="435.9,241.2 472.9,284.2 500.9,314.2 532.9,354.3" fill="none" stroke="#f0a800" stroke-width="1.4" stroke-dasharray="0 100"/><polyline points="434.1,242.8 471.1,285.8 499.1,315.8 531.1,355.7" fill="none" stroke="#f0a800" stroke-width="1.4" stroke-dasharray="0 100"/><path d="M625.7 518.5L651 547M617 542L661.6 525.6" stroke="#3050d0" stroke-width="1.5" fill="none"/><polyline points="957.4,313.1 762.4,382.1 655.4,420.1 360.4,525.1 215.4,579.1" fill="none" stroke="#f0a800" stroke-width="1.4" stroke-dasharray="2.5 1"/><polyline points="956.6,310.9 761.6,379.9 654.6,417.9 359.6,522.9 214.6,576.9" fill="none" stroke="#f0a800" stroke-width="1.4" stroke-dasharray="2.5 1"/><polyline points="-0.5,782.9 73.6,752.9 130.6,732.9 354.6,656.9 553.5,567.9 682.6,513.9 805.6,470.9" fill="none" stroke="#f0a800" stroke-width="1.4" stroke-dasharray="2.5 1"/><polyline points="0.5,785.1 74.4,755.1 131.4,735.1 355.4,659.1 554.5,570.1 683.4,516.1 806.4,473.1" fill="none" stroke="#f0a800" stroke-width="1.4" stroke-dasharray="2.5 1"/><polyline points="-0.5,935.9 122.5,881.9 322.5,793.9 399.5,766.9 670.5,646.9 805.6,592.9" fill="none" stroke="#f0a800" stroke-width="1.4" stroke-dasharray="2.5 1"/><polyline points="0.5,938.1 123.5,884.1 323.5,796.1 400.5,769.1 671.5,649.1 806.4,595.1" fill="none" stroke="#f0a800" stroke-width="1.4" stroke-dasharray="2.5 1"/><polyline points="164.1,503.4 277.1,719.4 329.1,804.4 403.1,958.5" fill="none" stroke="#f0a800" stroke-width="1.4" stroke-dasharray="2.5 1"/><polyline points="161.9,504.6 274.9,720.6 326.9,805.6 400.9,959.5" fill="none" stroke="#f0a800" stroke-width="1.4" stroke-dasharray="2.5 1"/><polyline points="429.0,402.3 487.0,482.3 568.9,586.3" fill="none" stroke="#f0a800" stroke-width="1.4" stroke-dasharray="2.5 1"/><polyline points="427.0,403.7 485.0,483.7 567.1,587.7" fill="none" stroke="#f0a800" stroke-width="1.4" stroke-dasharray="2.5 1"/><polyline points="540.9,399.2 583.7,444.0 640.7,469.1 699.5,536.2 766.9,609.8 807.9,653.8" fill="none" stroke="#f0a800" stroke-width="1.4" stroke-dasharray="0 100"/><polyline points="539.1,400.8 582.3,446.0 639.3,470.9 697.7,537.8 765.1,611.4 806.1,655.4" fill="none" stroke="#f0a800" stroke-width="1.4" stroke-dasharray="0 100"/><g fill="none" stroke="#f0a800" stroke-width="1.5" stroke-dasharray="2 1.5"><ellipse cx="665" cy="649" rx="8" ry="5"/><ellipse cx="683" cy="655" rx="8" ry="5"/></g><line x1="801" y1="320" x2="923" y2="277" stroke="#000" stroke-width="3"/><g clip-path="url(#cred)"><rect x="340" y="570" width="400" height="300" fill="#c00000"/><polygon points="352.5,676 504,613 555,691 409,753" fill="#b40000"/><polygon points="504,613 593,580 596,587 516,605" fill="#c00000"/><polygon points="596,587 723.6,744 659,670 644,661" fill="#b00000"/><polygon points="516,605 596,587 644,661 555,691" fill="#e20000"/><polygon points="535,617 590,603 628,655 568,676" fill="#f00808"/><polygon points="593.5,593 617,590 626,628 599.4,631" fill="#8c0000"/><polygon points="409,753 659,670 723.6,744 464,864" fill="#a00000"/><polygon points="430,790 600,730 650,780 470,850" fill="#8c0000"/><polygon points="408,732 459,711 462,716 411,738" fill="#ff1818"/><polygon points="395,698 440,690 444,700 398,708" fill="#e81010"/><polygon points="430,655 439,655 439,664 430,664" fill="#ff2020"/><polygon points="644,765 665,670 676,676 656,768" fill="#f01818"/><polygon points="580,650 600,645 605,660 585,665" fill="#ff1010"/><rect x="340" y="570" width="400" height="300" fill="url(#spkr)" opacity="0.6"/><polygon points="516,605 596,587 644,661 555,691" fill="#e80000" opacity="0.5"/><polygon points="535,617 590,603 628,655 568,676" fill="#f00808" opacity="0.3"/><polygon points="593.5,593 617,590 626,628 599.4,631" fill="#700000" opacity="0.5"/><polygon points="409,753 659,670 723.6,744 464,864" fill="#500000" opacity="0.2"/><polygon points="408,732 459,711 462,716 411,738" fill="#ff2020" opacity="0.6"/><path d="M356 753L659 669M469 634L540 821" stroke="#600000" stroke-width="2.5" opacity="0.35"/></g><polygon points="593,580 723.6,744 464,864 352.5,676" fill="none" stroke="#ff70c8" stroke-width="3" stroke-linejoin="round"/><g clip-path="url(#cred)" opacity="0.4"><polyline points="682,620 675,651 667,700 652,790" fill="none" stroke="#7e8480" stroke-width="4.5"/><polyline points="682,620 675,651 667,700 652,790" fill="none" stroke="#f0a800" stroke-width="1.4" stroke-dasharray="2 2"/><polyline points="674,620 667,651 659,700 644,790" fill="none" stroke="#7e8480" stroke-width="4.5"/><polyline points="674,620 667,651 659,700 644,790" fill="none" stroke="#f0a800" stroke-width="1.4" stroke-dasharray="2 2"/></g><g stroke="#e0d080" fill="none">
<defs><linearGradient id="gl" x1="0" x2="1"><stop offset="0" stop-color="#e0d080" stop-opacity="0"/><stop offset="0.5" stop-color="#e0d080"/></linearGradient>
<linearGradient id="gv" x1="0" x2="0" y1="0" y2="1"><stop offset="0.8" stop-color="#e0d080"/><stop offset="1" stop-color="#e0d080" stop-opacity="0"/></linearGradient></defs>
<rect x="1178" y="112.5" width="98" height="1.5" fill="url(#gl)" stroke="none"/>
<rect x="1275" y="112.5" width="1.5" height="290" fill="url(#gv)" stroke="none"/>
<circle cx="1241" cy="153" r="14" stroke="#d8d0a0" stroke-width="2.5"/>
<circle cx="1241" cy="153" r="12" stroke="#f0e060" stroke-width="1.5"/>
<path d="M1229 132l9 8l-5 3z M1266 140l-8 8l-3-4z M1216 168l9-9l2 5z M1254 178l-9-7l5-3z" fill="#f0f0c8" stroke="none"/><path d="M1241 137v3M1257 153h-3M1241 169v-3M1225 153h3M1252 142l-2 2M1230 164l2-2" stroke="#c8b860" stroke-width="1.2"/>
<path d="M1236 141l12 20l-6 3z" stroke="#f0c0a0" stroke-width="1.2"/>
<path d="M1268 198v56M1250 247h18" stroke-width="1.8"/>
<path d="M1220 268v48h47M1221 316l24-23" stroke-width="1.8"/>
<path d="M1221 277a39 39 0 0 1 39 39" stroke="#f0f0e0" stroke-width="1.5"/><path d="M1227.4 277.5L1228.1 273.6M1233.7 279.1L1235.0 275.3M1239.6 281.7L1241.5 278.2M1245.0 285.3L1247.5 282.1M1249.8 289.7L1252.7 286.9M1253.7 294.8L1257.1 292.6M1256.8 300.4L1260.4 298.9M1258.8 306.6L1262.7 305.6M1259.9 312.9L1263.9 312.6" stroke="#f0f0e0" stroke-width="1.2"/>
</g>
<text x="1218" y="251" font-family="Liberation Sans" font-size="9" fill="#fff" textLength="32">0005902</text>
<g font-family="Liberation Sans" font-size="8" font-weight="bold" fill="#fff"><text x="1221" y="129">N</text><text x="1264" y="142">E</text><text x="1211" y="172">W</text><text x="1253" y="185">S</text></g>
</svg>
<div class="a" style="left:18px;top:132px;width:346px;height:283px;background:#dcdcc4;border-radius:3px 3px 0 0;box-shadow:inset 1px 0 0 #e8e8d4, inset -1px 0 0 #b8b8a0, inset 0 -1px 0 #b8b8a0"></div>
<div class="a" style="left:18px;top:132px;width:346px;height:30px;border-radius:3px 3px 0 0;background:linear-gradient(#f0f0dc 0px,#e4e4cc 4px,#dcdcc0 50%,#d8d8bc 100%)"></div>
<div class="a" style="left:22px;top:162px;width:338px;height:249px;background:#c0c0c0"></div>
<div class="a" style="left:17px;top:131px;width:3px;height:3px;background:#3070f0"></div>
<div class="a" style="left:362px;top:131px;width:3px;height:3px;background:#3070f0"></div>
<svg class="a" style="left:24px;top:140px" width="16" height="16" viewBox="0 0 16 16"><rect x="0" y="0" width="16" height="16" fill="#e87020"/><rect x="2" y="2" width="12" height="12" fill="#90e0f8"/><rect x="3.5" y="2" width="9" height="12" fill="#303030"/><rect x="7.3" y="2" width="1.4" height="12" fill="#f0f000"/><rect x="5" y="6" width="5" height="5" fill="#8070d0"/></svg>
<div class="a" style="left:43px;top:141px;font:bold 13px 'Liberation Sans',sans-serif;color:#fff;line-height:16px">Plan</div>
<div class="a" style="left:337px;top:138px;width:21px;height:21px;border:1px solid #fff;border-radius:3px;background:linear-gradient(135deg,#d8b8b8,#c09090 60%,#b08080)"><svg class="a" style="left:3px;top:3px" width="13" height="13"><path d="M1.5 1.5L11.5 11.5M11.5 1.5L1.5 11.5" stroke="#fff" stroke-width="2"/></svg></div>
<div class="t" style="left:32px;top:166px"><u>V</u>iews</div>
<div class="t" style="left:77px;top:166px"><u>S</u>how</div>
<div class="t" style="left:328px;top:166px"><u>H</u>elp</div>
<div class="a" style="left:22px;top:183px;width:338px;height:1px;background:#808080"></div>
<div class="a" style="left:22px;top:184px;width:338px;height:1px;background:#fff"></div>
<div class="a" style="left:27px;top:190px;width:328px;height:162px;background:#000"></div>
<svg class="a" style="left:27px;top:190px" width="329" height="162" viewBox="27 190 329 162">
<g stroke="#f8a800" fill="none">
<path d="M91.5 271.5h58" stroke-width="2"/><path d="M101 265.5h49"/><path d="M116 259.5h46"/>
<path d="M116.5 254v28M131 253v18M137 253v24"/>
<path d="M123 282l46-42" stroke-width="1.6"/>
<path d="M125 280q-4 4-4 10v32" stroke-width="2"/>
<path d="M118 276h30M120 268h20" stroke-width="1" stroke-dasharray="2 2"/>
</g>
<rect x="110" y="250.5" width="54" height="29" fill="none" stroke="#0000f8" stroke-width="2"/>
<path d="M129 264h16M137 257.5v13" stroke="#4070e8" stroke-width="2"/>
<path d="M104 304.5h8M108 300.5v8" stroke="#808080" stroke-width="1.5"/>
</svg>
<div class="grp" style="left:27px;top:366px;width:327px;height:40px"></div>
<div class="glab" style="left:38px;top:359px">Position (m)</div>
<div class="t" style="left:35px;top:380px">X:</div>
<div class="inp" style="left:49px;top:376px;width:56px;height:20px;padding:3px 0 0 3px">2212.4</div>
<div class="t" style="left:111px;top:380px">Y:</div>
<div class="inp" style="left:125px;top:376px;width:56px;height:20px;padding:3px 0 0 3px">911.4</div>
<div class="t" style="left:188px;top:380px">Z:</div>
<div class="inp" style="left:202px;top:376px;width:56px;height:20px;padding:3px 0 0 3px">5902.4</div>
<div class="a" style="left:51px;top:379px;width:1px;height:15px;border-left:1px dotted #000"></div>
<div class="a" style="left:127px;top:379px;width:1px;height:15px;border-left:1px dotted #000"></div>
<div class="a" style="left:204px;top:379px;width:1px;height:15px;border-left:1px dotted #000"></div>
<div class="btn" style="left:271px;top:376px;width:77px;height:23px;line-height:20px">Apply</div>
<div class="a" style="left:807px;top:435px;width:446px;height:512px;background:#dcdcc4;border-radius:3px 3px 0 0;box-shadow:inset 1px 0 0 #e8e8d4, inset -1px 0 0 #b8b8a0, inset 0 -1px 0 #b8b8a0"></div>
<div class="a" style="left:807px;top:435px;width:446px;height:30px;border-radius:3px 3px 0 0;background:linear-gradient(#f0f0dc 0px,#e4e4cc 4px,#dcdcc0 50%,#d8d8bc 100%)"></div>
<div class="a" style="left:811px;top:465px;width:438px;height:478px;background:#c0c0c0"></div>
<div class="a" style="left:1250px;top:434px;width:3px;height:3px;background:#3070f0"></div>
<svg class="a" style="left:813px;top:443px" width="16" height="16" viewBox="0 0 16 16"><rect x="0" y="0" width="16" height="16" fill="#e87020"/><rect x="2" y="2" width="12" height="12" fill="#90e0f8"/><rect x="3.5" y="2" width="9" height="12" fill="#303030"/><rect x="7.3" y="2" width="1.4" height="12" fill="#f0f000"/><rect x="5" y="6" width="5" height="5" fill="#8070d0"/></svg>
<div class="a" style="left:832px;top:444px;font:bold 13px 'Liberation Sans',sans-serif;color:#fff;line-height:16px;letter-spacing:0.2px">Overlay Manager</div>
<div class="a" style="left:1227px;top:441px;width:21px;height:21px;border:1px solid #fff;border-radius:3px;background:linear-gradient(135deg,#d8b8b8,#c09090 60%,#b08080)"><svg class="a" style="left:3px;top:3px" width="13" height="13"><path d="M1.5 1.5L11.5 11.5M11.5 1.5L1.5 11.5" stroke="#fff" stroke-width="2"/></svg></div>
<div class="inp" style="left:820px;top:474px;width:322px;height:85px"></div>
<div class="t" style="left:823px;top:477px">Overlay 1: type: BMP - Cedar_Shaw</div>
<div class="a" style="left:822px;top:493px"></div>
<div class="a" style="left:822px;top:493px;width:316px;height:14px;background:#000"></div>
<div class="t" style="left:823px;top:493px;color:#fff">Overlay 2: type: BMP - Chestnut_Shaw</div>
<div class="t" style="left:823px;top:509px">Overlay 3: type: BMP - SR168_Shaw</div>
<div class="t" style="left:823px;top:525px">Overlay 4: type: BMP - Villa_Shaw</div>
<div class="t" style="left:823px;top:541px">Overlay 5: type: BMP - SR168_Gettysburg</div>
<div class="a" style="left:1143px;top:474px;width:14px;height:85px;background:#d8d8d8;border:1px solid #808080"></div>
<div class="btn" style="left:1144px;top:475px;width:12px;height:12px"></div>
<svg class="a" style="left:1145px;top:477px" width="10" height="8"><path d="M5 1L9 7H1z" fill="none" stroke="#808080"/></svg>
<div class="btn" style="left:1144px;top:488px;width:12px;height:19px"></div>
<div class="btn" style="left:1144px;top:546px;width:12px;height:12px"></div>
<svg class="a" style="left:1145px;top:548px" width="10" height="8"><path d="M5 7L9 1H1z" fill="none" stroke="#808080" stroke-dasharray="1 1"/></svg>
<div class="btn" style="left:1168px;top:476px;width:76px;height:23px;line-height:20px">Add</div>
<div class="btn" style="left:1168px;top:506px;width:76px;height:23px;line-height:20px">Copy</div>
<div class="btn" style="left:1168px;top:536px;width:76px;height:23px;line-height:20px">Delete</div>
<div class="grp" style="left:815px;top:577px;width:430px;height:43px"></div>
<div class="glab" style="left:826px;top:570px">Overlay 2</div>
<div class="t" style="left:829px;top:587px">Xt: +0023009.7, Yt: +-000007.9 Zt: +00057.100, Xs: +0001.7, Ys: +0001.6</div>
<div class="t" style="left:829px;top:604px">Xrot: +000.0', Yrot: +000.0', Zrot: +000.5'</div>
<div class="a" style="left:817px;top:657px;width:426px;height:235px;border-top:1px solid #fff;border-left:1px solid #fff;border-right:1px solid #000;border-bottom:1px solid #000;box-shadow:inset -1px -1px 0 #808080"></div>
<div class="a" style="left:819px;top:637px;width:47px;height:21px;background:#c0c0c0;border-top:1px solid #fff;border-left:1px solid #fff;border-right:1px solid #000;border-radius:2px 2px 0 0;box-shadow:inset -1px 0 0 #808080"></div>
<div class="t" style="left:819px;top:642px;width:47px;text-align:center">Options</div>
<div class="a" style="left:865px;top:637px;width:47px;height:21px;background:#c0c0c0;border-top:1px solid #fff;border-left:1px solid #fff;border-right:1px solid #000;border-radius:2px 2px 0 0;box-shadow:inset -1px 0 0 #808080"></div>
<div class="t" style="left:865px;top:642px;width:47px;text-align:center">Display</div>
<div class="a" style="left:961px;top:637px;width:46px;height:21px;background:#c0c0c0;border-top:1px solid #fff;border-left:1px solid #fff;border-right:1px solid #000;border-radius:2px 2px 0 0;box-shadow:inset -1px 0 0 #808080"></div>
<div class="t" style="left:961px;top:642px;width:46px;text-align:center">Mesh</div>
<div class="a" style="left:911px;top:634px;width:51px;height:25px;background:#c0c0c0;border-top:1px solid #fff;border-left:1px solid #fff;border-right:1px solid #000;border-radius:2px 2px 0 0;box-shadow:inset -1px 0 0 #808080"></div>
<div class="t" style="left:911px;top:640px;width:51px;text-align:center">Position</div>
<div class="grp" style="left:823px;top:673px;width:125px;height:213px"></div>
<div class="glab" style="left:834px;top:666px">XYZ Translation</div>
<div class="grp" style="left:954px;top:673px;width:118px;height:213px"></div>
<div class="glab" style="left:965px;top:666px">XY Scaling</div>
<div class="grp" style="left:1079px;top:673px;width:157px;height:213px"></div>
<div class="glab" style="left:1090px;top:666px">XYZ Rotation</div>
<div class="btn" style="left:873px;top:694px;width:22px;height:22px;line-height:19px">Y+</div>
<div class="btn" style="left:838px;top:719px;width:22px;height:22px;line-height:19px">X-</div>
<div class="inp" style="left:864px;top:719px;width:37px;height:21px;padding:3px 0 0 4px"> 100</div>
<div class="a" style="left:868px;top:723px;width:1px;height:14px;border-left:1px dotted #000"></div>
<div class="btn" style="left:904px;top:719px;width:22px;height:22px;line-height:19px">X+</div>
<div class="btn" style="left:873px;top:745px;width:22px;height:22px;line-height:19px">Y-</div>
<div class="btn" style="left:838px;top:777px;width:22px;height:22px;line-height:19px">Z-</div>
<div class="inp" style="left:864px;top:777px;width:37px;height:21px;padding:3px 0 0 4px">10</div>
<div class="btn" style="left:904px;top:777px;width:22px;height:22px;line-height:19px">Z+</div>
<svg class="a" style="left:876px;top:780px" width="7" height="16"><path d="M1 0.5h5M3.5 0.5v15M1 15.5h5" stroke="#000"/></svg>
<div class="a" style="left:839px;top:814px;width:13px;height:13px;background:#fff;border-top:1px solid #808080;border-left:1px solid #808080;border-right:1px solid #fff;border-bottom:1px solid #fff;box-shadow:inset 1px 1px 0 #000"></div>
<div class="t" style="left:860px;top:815px">Apply To All</div>
<div class="btn" style="left:1004px;top:694px;width:22px;height:22px;line-height:19px">Y+</div>
<div class="btn" style="left:1037px;top:694px;width:22px;height:22px;line-height:19px">+</div>
<div class="btn" style="left:969px;top:719px;width:22px;height:22px;line-height:19px">X-</div>
<div class="inp" style="left:995px;top:719px;width:37px;height:21px;padding:3px 0 0 4px"> 1.05</div>
<div class="a" style="left:999px;top:723px;width:1px;height:14px;border-left:1px dotted #000"></div>
<div class="btn" style="left:1036px;top:719px;width:22px;height:22px;line-height:19px">X+</div>
<div class="btn" style="left:969px;top:745px;width:22px;height:22px;line-height:19px">-</div>
<div class="btn" style="left:1004px;top:745px;width:22px;height:22px;line-height:19px">Y-</div>
<div class="btn" style="left:1094px;top:690px;width:22px;height:22px;line-height:19px">X-</div>
<div class="inp" style="left:1120px;top:690px;width:37px;height:21px;padding:3px 0 0 4px"> 1.0</div>
<div class="a" style="left:1124px;top:694px;width:1px;height:14px;border-left:1px dotted #000"></div>
<div class="btn" style="left:1160px;top:690px;width:22px;height:22px;line-height:19px">X+</div>
<div class="btn" style="left:1094px;top:716px;width:22px;height:22px;line-height:19px">Y-</div>
<div class="inp" style="left:1120px;top:716px;width:37px;height:21px;padding:3px 0 0 4px"> 1.0</div>
<div class="a" style="left:1124px;top:720px;width:1px;height:14px;border-left:1px dotted #000"></div>
<div class="btn" style="left:1160px;top:716px;width:22px;height:22px;line-height:19px">Y+</div>
<div class="btn" style="left:1094px;top:742px;width:22px;height:22px;line-height:19px">Z-</div>
<div class="inp" style="left:1120px;top:742px;width:37px;height:21px;padding:3px 0 0 4px"> 1.0</div>
<div class="a" style="left:1124px;top:746px;width:1px;height:14px;border-left:1px dotted #000"></div>
<div class="btn" style="left:1160px;top:742px;width:22px;height:22px;line-height:19px">Z+</div>
<svg class="a" style="left:819px;top:917px" width="16" height="17"><path d="M1.5 1.5h12v11h-6l-3 3v-3h-3z" fill="#ffffc0" stroke="#000"/><text x="4.5" y="11" font-family="Liberation Sans" font-weight="bold" font-size="10">?</text></svg>
<div class="btn" style="left:1002px;top:915px;width:76px;height:23px;line-height:20px">OK</div>
<div class="btn" style="left:1085px;top:915px;width:76px;height:23px;line-height:20px">Apply</div>
<div class="btn" style="left:1168px;top:915px;width:76px;height:23px;line-height:20px">Cancel</div>
<div class="a" style="left:0;top:958px;width:1280px;height:66px;background:#c0c0c0"></div>
<div class="a" style="left:0;top:961px;width:1280px;height:1px;background:#808080"></div>
<div class="a" style="left:0;top:963px;width:1280px;height:3px;background:#dcdcdc"></div>
<div class="a" style="left:0;top:967px;width:1268px;height:38px;background:#fff;border-top:1px solid #404040;border-left:1px solid #404040;box-shadow:inset 1px 1px 0 #000"></div>
<div class="a" style="left:1260px;top:958px;width:9px;height:9px;background:#d0d0d0;border:1px solid #fff;border-right-color:#808080;border-bottom-color:#808080"></div>
<div class="a" style="left:1267px;top:967px;width:13px;height:38px;background:#d8d8d8"></div>
<div class="btn" style="left:1267px;top:967px;width:13px;height:12px"></div>
<svg class="a" style="left:1268px;top:969px" width="11" height="8"><path d="M5.5 1L10 7H1z" fill="none" stroke="#808080"/></svg>
<div class="btn" style="left:1267px;top:980px;width:13px;height:12px"></div>
<div class="btn" style="left:1267px;top:993px;width:13px;height:12px"></div>
<svg class="a" style="left:1268px;top:995px" width="11" height="8"><path d="M5.5 7L10 1H1z" fill="none" stroke="#808080" stroke-dasharray="1 1"/></svg>
<div class="a" style="left:0;top:1022px;width:1280px;height:2px;background:#e8ecd0"></div>
<div class="sunk" style="left:803px;top:1006px;width:101px;height:17px;font-size:11px;line-height:13px;white-space:nowrap;overflow:hidden;padding:2px 0 0 5px"></div>
<div class="sunk" style="left:905px;top:1006px;width:133px;height:17px;font-size:11px;line-height:13px;white-space:nowrap;overflow:hidden;padding:2px 0 0 6px">2004/07/12 18:00:00 (1)</div>
<div class="sunk" style="left:1057px;top:1006px;width:66px;height:17px;font-size:11px;line-height:13px;white-space:nowrap;overflow:hidden;padding:2px 2px 0 0;text-align:right">0.00 xRT</div>
<div class="sunk" style="left:1125px;top:1006px;width:46px;height:17px;font-size:11px;line-height:13px;white-space:nowrap;overflow:hidden;padding:2px 3px 0 0;text-align:right">0 V</div>
<div class="sunk" style="left:1172px;top:1006px;width:42px;height:17px;font-size:11px;line-height:13px;white-space:nowrap;overflow:hidden;padding:2px 3px 0 0;text-align:right">AON</div>
<div class="sunk" style="left:1215px;top:1006px;width:20px;height:17px;font-size:11px;line-height:13px;white-space:nowrap;overflow:hidden;padding:2px 0 0 2px">CO</div>
<div class="sunk" style="left:1236px;top:1006px;width:44px;height:17px;font-size:11px;line-height:13px;white-space:nowrap;overflow:hidden;padding:2px 0 0 3px">2D</div>
<svg class="a" style="left:1040px;top:1009px" width="16" height="11"><path d="M6 0.5L1 5.5L6 10.5z M10 0.5L15 5.5L10 10.5z" fill="#a00000"/></svg></body></html>
